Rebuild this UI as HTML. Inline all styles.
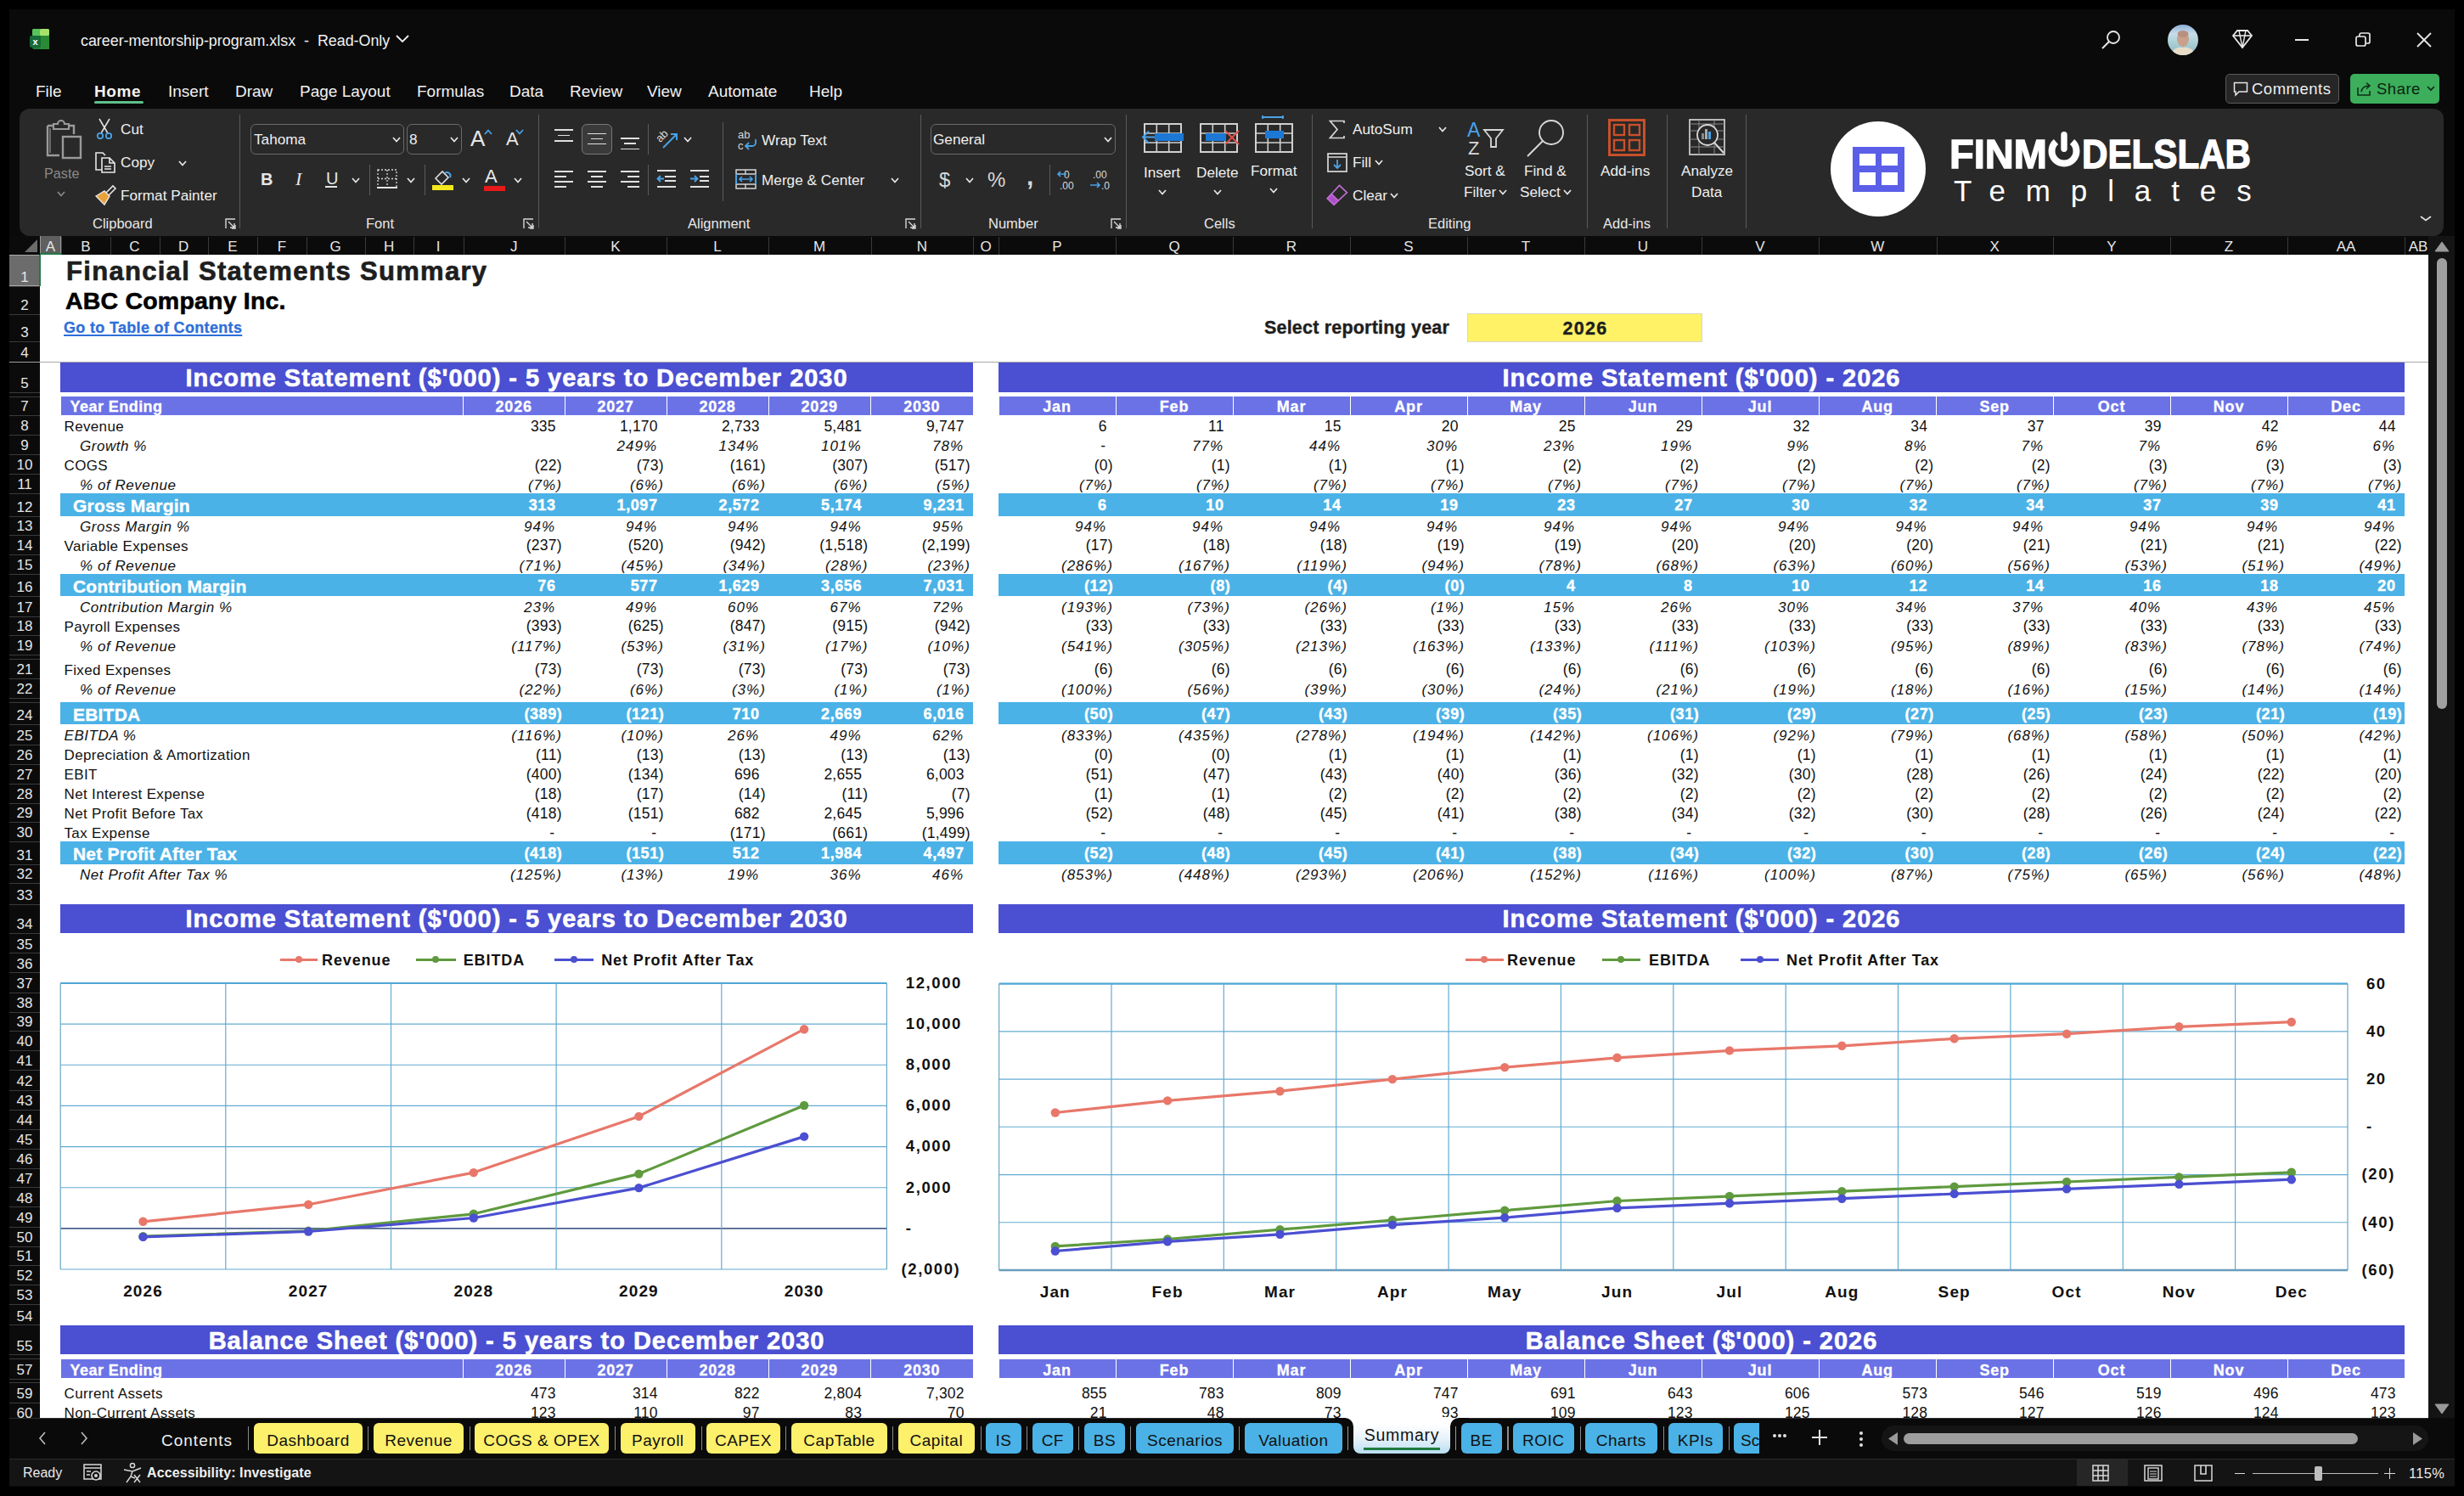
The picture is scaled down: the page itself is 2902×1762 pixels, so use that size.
<!DOCTYPE html><html><head><meta charset="utf-8"><title>career-mentorship-program.xlsx</title><style>html,body{margin:0;padding:0;}body{width:2902px;height:1762px;background:#000;position:relative;overflow:hidden;font-family:"Liberation Sans",sans-serif;} div{box-sizing:border-box;} svg{position:absolute;overflow:visible}</style></head><body>
<div style="position:absolute;left:11.0px;top:11.0px;width:2880.0px;height:1740.0px;background:#0a0a0a;"></div>
<svg style="left:35px;top:34px" width="24" height="26" viewBox="0 0 24 26">
<rect x="3" y="0" width="20" height="24" rx="2" fill="#1f7a3a"/>
<rect x="3" y="0" width="10" height="8" rx="1.5" fill="#56c35c"/>
<rect x="12" y="0" width="11" height="8" rx="1.5" fill="#a7e36a"/>
<rect x="12" y="8" width="11" height="16" fill="#2a8a34"/>
<rect x="0" y="8" width="13" height="14" rx="2" fill="#176a3a"/>
<text x="6.5" y="19" font-family="Liberation Sans" font-weight="bold" font-size="11" fill="#fff" text-anchor="middle">x</text>
</svg>
<div style="position:absolute;top:39.8px;font-size:17.88px;line-height:17.88px;color:#f2f2f2;font-weight:normal;font-style:normal;white-space:nowrap;font-family:'Liberation Sans',sans-serif;left:95.0px;white-space:pre;">career-mentorship-program.xlsx  -  Read-Only</div>
<svg style="left:466px;top:41px" width="16" height="10"><polyline points="1,1 8,8 15,1" fill="none" stroke="#f0f0f0" stroke-width="1.8"/></svg>
<svg style="left:2474px;top:35px" width="24" height="24"><circle cx="15" cy="9" r="7" fill="none" stroke="#e8e8e8" stroke-width="1.8"/><line x1="10" y1="14" x2="2" y2="22" stroke="#e8e8e8" stroke-width="1.9"/></svg>
<svg style="left:2553px;top:29px" width="36" height="36"><defs><clipPath id="av"><circle cx="18" cy="18" r="18"/></clipPath><linearGradient id="avg" x1="0" y1="0" x2="0" y2="1"><stop offset="0" stop-color="#8fb0d8"/><stop offset="0.3" stop-color="#c8dcea"/><stop offset="0.6" stop-color="#a9cfd6"/><stop offset="1" stop-color="#8fb8c0"/></linearGradient></defs><g clip-path="url(#av)"><rect width="36" height="36" fill="url(#avg)"/><ellipse cx="18" cy="17" rx="7" ry="9" fill="#c9a08a"/><ellipse cx="18" cy="11" rx="6.5" ry="4" fill="#b89080"/><path d="M4,36 C6,28 12,26 18,27 C24,26 30,28 32,36 Z" fill="#e8dcc8"/></g></svg>
<svg style="left:2628px;top:34px" width="26" height="24"><polygon points="2,8 7,2 19,2 24,8 13,22" fill="none" stroke="#e8e8e8" stroke-width="1.8"/><polyline points="2,8 24,8" stroke="#e8e8e8" stroke-width="1.6"/><polyline points="9,2 13,22 17,2" fill="none" stroke="#e8e8e8" stroke-width="1.4"/></svg>
<div style="position:absolute;left:2703.0px;top:46.0px;width:16.0px;height:1.8px;background:#e8e8e8;"></div>
<svg style="left:2774px;top:38px" width="18" height="18"><rect x="1" y="5" width="11" height="11" rx="2" fill="none" stroke="#e8e8e8" stroke-width="1.7"/><path d="M5,5 V3 a2,2 0 0 1 2,-2 h8 a2,2 0 0 1 2,2 v8 a2,2 0 0 1 -2,2 h-3" fill="none" stroke="#e8e8e8" stroke-width="1.7"/></svg>
<svg style="left:2846px;top:38px" width="18" height="18"><line x1="1" y1="1" x2="17" y2="17" stroke="#e8e8e8" stroke-width="1.8"/><line x1="17" y1="1" x2="1" y2="17" stroke="#e8e8e8" stroke-width="1.8"/></svg>
<div style="position:absolute;top:97.8px;font-size:19px;line-height:19px;color:#f2f2f2;font-weight:normal;font-style:normal;white-space:nowrap;font-family:'Liberation Sans',sans-serif;left:42.0px;">File</div>
<div style="position:absolute;top:97.8px;font-size:19px;line-height:19px;color:#f2f2f2;font-weight:bold;font-style:normal;white-space:nowrap;font-family:'Liberation Sans',sans-serif;letter-spacing:0.6px;left:111.0px;">Home</div>
<div style="position:absolute;top:97.8px;font-size:19px;line-height:19px;color:#f2f2f2;font-weight:normal;font-style:normal;white-space:nowrap;font-family:'Liberation Sans',sans-serif;left:198.0px;">Insert</div>
<div style="position:absolute;top:97.8px;font-size:19px;line-height:19px;color:#f2f2f2;font-weight:normal;font-style:normal;white-space:nowrap;font-family:'Liberation Sans',sans-serif;left:277.0px;">Draw</div>
<div style="position:absolute;top:97.8px;font-size:19px;line-height:19px;color:#f2f2f2;font-weight:normal;font-style:normal;white-space:nowrap;font-family:'Liberation Sans',sans-serif;left:353.0px;">Page Layout</div>
<div style="position:absolute;top:97.8px;font-size:19px;line-height:19px;color:#f2f2f2;font-weight:normal;font-style:normal;white-space:nowrap;font-family:'Liberation Sans',sans-serif;left:491.0px;">Formulas</div>
<div style="position:absolute;top:97.8px;font-size:19px;line-height:19px;color:#f2f2f2;font-weight:normal;font-style:normal;white-space:nowrap;font-family:'Liberation Sans',sans-serif;left:600.0px;">Data</div>
<div style="position:absolute;top:97.8px;font-size:19px;line-height:19px;color:#f2f2f2;font-weight:normal;font-style:normal;white-space:nowrap;font-family:'Liberation Sans',sans-serif;left:671.0px;">Review</div>
<div style="position:absolute;top:97.8px;font-size:19px;line-height:19px;color:#f2f2f2;font-weight:normal;font-style:normal;white-space:nowrap;font-family:'Liberation Sans',sans-serif;left:762.0px;">View</div>
<div style="position:absolute;top:97.8px;font-size:19px;line-height:19px;color:#f2f2f2;font-weight:normal;font-style:normal;white-space:nowrap;font-family:'Liberation Sans',sans-serif;left:834.0px;">Automate</div>
<div style="position:absolute;top:97.8px;font-size:19px;line-height:19px;color:#f2f2f2;font-weight:normal;font-style:normal;white-space:nowrap;font-family:'Liberation Sans',sans-serif;left:953.0px;">Help</div>
<div style="position:absolute;left:111.0px;top:119.3px;width:58.0px;height:2.8px;background:#5fc08a;border-radius:1.5px;"></div>
<div style="position:absolute;left:2621px;top:87px;width:134px;height:35px;border:1px solid #5a5a5a;border-radius:5px;background:#262626"></div>
<svg style="left:2630px;top:96px" width="18" height="18"><path d="M1.5,1.5 H16.5 V12 H7 L3,16 V12 H1.5 Z" fill="none" stroke="#e8e8e8" stroke-width="1.5"/></svg>
<div style="position:absolute;top:96.3px;font-size:18.5px;line-height:18.5px;color:#f0f0f0;font-weight:normal;font-style:normal;white-space:nowrap;font-family:'Liberation Sans',sans-serif;letter-spacing:0.5px;left:2652.0px;">Comments</div>
<div style="position:absolute;left:2768px;top:87px;width:105px;height:35px;border-radius:5px;background:#3cae5c"></div>
<svg style="left:2775px;top:96px" width="20" height="18"><path d="M2,7 V16 H16 V11" fill="none" stroke="#0f2f16" stroke-width="1.6"/><path d="M6,12 C7,7 10,5 15,5 M12,1.5 L16,5 L12,8.5" fill="none" stroke="#0f2f16" stroke-width="1.6"/></svg>
<div style="position:absolute;top:96.3px;font-size:18.5px;line-height:18.5px;color:#0c2410;font-weight:normal;font-style:normal;white-space:nowrap;font-family:'Liberation Sans',sans-serif;letter-spacing:0.5px;left:2799.0px;">Share</div>
<svg style="left:2858px;top:101px" width="10" height="7"><polyline points="1,1 5,5 9,1" fill="none" stroke="#0c2410" stroke-width="1.6"/></svg>
<div style="position:absolute;left:23px;top:128px;width:2855px;height:150px;background:#292929;border-radius:12px"></div>
<svg style="left:50px;top:138px" width="50" height="52"><path d="M6,10 H13 M31,10 H37 V20" fill="none" stroke="#9a9a9a" stroke-width="2.4"/><path d="M6,10 V45 H20" fill="none" stroke="#9a9a9a" stroke-width="2.4"/><path d="M9,13 V42" stroke="#6a6a6a" stroke-width="2"/><path d="M13,14 V8 H18 a4,4 0 0 1 8,0 H31 V14 Z" fill="none" stroke="#9a9a9a" stroke-width="2.2"/><rect x="24" y="23" width="21" height="25" fill="none" stroke="#9a9a9a" stroke-width="2.4"/></svg>
<div style="position:absolute;top:196.2px;font-size:16.2px;line-height:16.2px;color:#8a8a8a;font-weight:normal;font-style:normal;white-space:nowrap;font-family:'Liberation Sans',sans-serif;left:52.0px;">Paste</div>
<svg style="left:67.0px;top:225.0px" width="10" height="7"><polyline points="1,1 5.0,5.5 9,1" fill="none" stroke="#8a8a8a" stroke-width="1.7"/></svg>
<svg style="left:112px;top:139px" width="22" height="26"><path d="M5,1 L15,18 M17,1 L7,18" stroke="#e6e6e6" stroke-width="1.5" fill="none"/><circle cx="6" cy="21" r="3.2" fill="none" stroke="#4aa3e8" stroke-width="1.8"/><circle cx="16" cy="21" r="3.2" fill="none" stroke="#4aa3e8" stroke-width="1.8"/></svg>
<div style="position:absolute;top:144.4px;font-size:17.2px;line-height:17.2px;color:#f0f0f0;font-weight:normal;font-style:normal;white-space:nowrap;font-family:'Liberation Sans',sans-serif;left:142.0px;">Cut</div>
<svg style="left:111px;top:178px" width="26" height="26"><path d="M9,22 H2 V2 H10 L13,5" fill="none" stroke="#e6e6e6" stroke-width="1.6"/><path d="M9,8 H18 L24,14 V25 H9 Z M18,8 V14 H24" fill="none" stroke="#e6e6e6" stroke-width="1.6"/><path d="M12,18 H20 M12,21 H20" stroke="#e6e6e6" stroke-width="1.3"/></svg>
<div style="position:absolute;top:183.4px;font-size:17.2px;line-height:17.2px;color:#f0f0f0;font-weight:normal;font-style:normal;white-space:nowrap;font-family:'Liberation Sans',sans-serif;left:142.0px;">Copy</div>
<svg style="left:210.0px;top:189.0px" width="10" height="7"><polyline points="1,1 5.0,5.5 9,1" fill="none" stroke="#e8e8e8" stroke-width="1.7"/></svg>
<svg style="left:111px;top:217px" width="26" height="26"><path d="M14,10 L22,2 L25,5 L17,13" fill="none" stroke="#e6e6e6" stroke-width="1.6"/><path d="M2,14 L12,8 L18,14 L12,24 Z" fill="#e9a23b" stroke="#e6e6e6" stroke-width="1.4"/></svg>
<div style="position:absolute;top:222.4px;font-size:17.2px;line-height:17.2px;color:#f0f0f0;font-weight:normal;font-style:normal;white-space:nowrap;font-family:'Liberation Sans',sans-serif;left:142.0px;">Format Painter</div>
<div style="position:absolute;top:255.0px;font-size:16.5px;line-height:16.5px;color:#e8e8e8;font-weight:normal;font-style:normal;white-space:nowrap;font-family:'Liberation Sans',sans-serif;left:109.0px;">Clipboard</div>
<svg style="left:265px;top:257px" width="13" height="13"><path d="M1,12 V1 H12" fill="none" stroke="#d8d8d8" stroke-width="1.4"/><path d="M4,4 L11,11 M6,11 H11 V6" fill="none" stroke="#d8d8d8" stroke-width="1.4"/><path d="M12,8 V12 H8" fill="none" stroke="#d8d8d8" stroke-width="1.4"/></svg>
<div style="position:absolute;left:282.0px;top:135.0px;width:1.2px;height:134.0px;background:#5a5a5a;"></div>
<div style="position:absolute;left:295px;top:146px;width:181px;height:36px;border:1.3px solid #6a6a6a;border-radius:6px;"></div>
<div style="position:absolute;top:156.4px;font-size:17.2px;line-height:17.2px;color:#f0f0f0;font-weight:normal;font-style:normal;white-space:nowrap;font-family:'Liberation Sans',sans-serif;left:299.0px;">Tahoma</div>
<svg style="left:462.0px;top:161.0px" width="10" height="7"><polyline points="1,1 5.0,5.5 9,1" fill="none" stroke="#e8e8e8" stroke-width="1.7"/></svg>
<div style="position:absolute;left:479px;top:146px;width:65px;height:36px;border:1.3px solid #6a6a6a;border-radius:6px;"></div>
<div style="position:absolute;top:156.4px;font-size:17.2px;line-height:17.2px;color:#f0f0f0;font-weight:normal;font-style:normal;white-space:nowrap;font-family:'Liberation Sans',sans-serif;left:482.0px;">8</div>
<svg style="left:530.0px;top:161.0px" width="10" height="7"><polyline points="1,1 5.0,5.5 9,1" fill="none" stroke="#e8e8e8" stroke-width="1.7"/></svg>
<div style="position:absolute;top:149.9px;font-size:26px;line-height:26px;color:#e6e6e6;font-weight:normal;font-style:normal;white-space:nowrap;font-family:'Liberation Sans',sans-serif;left:554.0px;">A</div>
<svg style="left:570px;top:152px" width="10" height="7"><polyline points="1,6 5,1.5 9,6" fill="none" stroke="#4aa3e8" stroke-width="1.8"/></svg>
<div style="position:absolute;top:153.3px;font-size:22px;line-height:22px;color:#e6e6e6;font-weight:normal;font-style:normal;white-space:nowrap;font-family:'Liberation Sans',sans-serif;left:596.0px;">A</div>
<svg style="left:607px;top:152px" width="10" height="7"><polyline points="1,1 5,5.5 9,1" fill="none" stroke="#4aa3e8" stroke-width="1.8"/></svg>
<div style="position:absolute;left:634.0px;top:135.0px;width:1.2px;height:134.0px;background:#5a5a5a;"></div>
<div style="position:absolute;top:201.0px;font-size:20px;line-height:20px;color:#e6e6e6;font-weight:bold;font-style:normal;white-space:nowrap;font-family:'Liberation Sans',sans-serif;left:307.0px;">B</div>
<div style="position:absolute;top:200.3px;font-size:22px;line-height:22px;color:#e6e6e6;font-weight:normal;font-style:italic;white-space:nowrap;font-family:'Liberation Serif',serif;left:348.0px;">I</div>
<div style="position:absolute;top:200.0px;font-size:20px;line-height:20px;color:#e6e6e6;font-weight:normal;font-style:normal;white-space:nowrap;font-family:'Liberation Sans',sans-serif;left:384.0px;">U</div>
<div style="position:absolute;left:383.0px;top:219.0px;width:14.0px;height:1.6px;background:#e6e6e6;"></div>
<svg style="left:414.0px;top:209.0px" width="10" height="7"><polyline points="1,1 5.0,5.5 9,1" fill="none" stroke="#e8e8e8" stroke-width="1.7"/></svg>
<div style="position:absolute;left:435.0px;top:194.0px;width:1.2px;height:36.0px;background:#5a5a5a;"></div>
<svg style="left:444px;top:199px" width="24" height="24"><rect x="1" y="1" width="22" height="21" fill="none" stroke="#d8d8d8" stroke-width="1.3" stroke-dasharray="2,2"/><path d="M12,1 V22 M1,11.5 H23" stroke="#d8d8d8" stroke-width="1.3" stroke-dasharray="2,2"/><rect x="0" y="21" width="24" height="2" fill="#e6e6e6"/></svg>
<svg style="left:479.0px;top:209.0px" width="10" height="7"><polyline points="1,1 5.0,5.5 9,1" fill="none" stroke="#e8e8e8" stroke-width="1.7"/></svg>
<div style="position:absolute;left:500.0px;top:194.0px;width:1.2px;height:36.0px;background:#5a5a5a;"></div>
<svg style="left:509px;top:199px" width="26" height="26"><path d="M4,11 L12,3 L19,10 L11,18 Z" fill="none" stroke="#e0e0e0" stroke-width="1.6"/><path d="M15,5 a4,4 0 0 1 6,5" fill="none" stroke="#4aa3e8" stroke-width="2"/><rect x="0" y="19" width="25" height="6" fill="#f5e81c"/></svg>
<svg style="left:544.0px;top:209.0px" width="10" height="7"><polyline points="1,1 5.0,5.5 9,1" fill="none" stroke="#e8e8e8" stroke-width="1.7"/></svg>
<div style="position:absolute;top:197.3px;font-size:22px;line-height:22px;color:#e6e6e6;font-weight:normal;font-style:normal;white-space:nowrap;font-family:'Liberation Sans',sans-serif;left:571.0px;">A</div>
<div style="position:absolute;left:570.0px;top:219.0px;width:25.0px;height:6.0px;background:#e81919;"></div>
<svg style="left:605.0px;top:209.0px" width="10" height="7"><polyline points="1,1 5.0,5.5 9,1" fill="none" stroke="#e8e8e8" stroke-width="1.7"/></svg>
<div style="position:absolute;top:255.0px;font-size:16.5px;line-height:16.5px;color:#e8e8e8;font-weight:normal;font-style:normal;white-space:nowrap;font-family:'Liberation Sans',sans-serif;left:431.0px;">Font</div>
<svg style="left:616px;top:257px" width="13" height="13"><path d="M1,12 V1 H12" fill="none" stroke="#d8d8d8" stroke-width="1.4"/><path d="M4,4 L11,11 M6,11 H11 V6" fill="none" stroke="#d8d8d8" stroke-width="1.4"/><path d="M12,8 V12 H8" fill="none" stroke="#d8d8d8" stroke-width="1.4"/></svg>
<div style="position:absolute;left:653.0px;top:152.0px;width:22.0px;height:1.8px;background:#e0e0e0;"></div>
<div style="position:absolute;left:657.0px;top:158.5px;width:14.0px;height:1.8px;background:#e0e0e0;"></div>
<div style="position:absolute;left:653.0px;top:165.0px;width:22.0px;height:1.8px;background:#e0e0e0;"></div>
<div style="position:absolute;left:685px;top:146px;width:36px;height:36px;border:1.3px solid #777;border-radius:6px;background:#3a3a3a"></div>
<div style="position:absolute;left:692.0px;top:156.5px;width:22.0px;height:1.8px;background:#e0e0e0;"></div>
<div style="position:absolute;left:696.0px;top:162.5px;width:14.0px;height:1.8px;background:#e0e0e0;"></div>
<div style="position:absolute;left:692.0px;top:168.5px;width:22.0px;height:1.8px;background:#e0e0e0;"></div>
<div style="position:absolute;left:731.0px;top:162.0px;width:22.0px;height:1.8px;background:#e0e0e0;"></div>
<div style="position:absolute;left:735.0px;top:168.0px;width:14.0px;height:1.8px;background:#e0e0e0;"></div>
<div style="position:absolute;left:731.0px;top:174.5px;width:22.0px;height:1.8px;background:#e0e0e0;"></div>
<div style="position:absolute;left:763.0px;top:146.0px;width:1.2px;height:36.0px;background:#5a5a5a;"></div>
<svg style="left:772px;top:150px" width="28" height="26"><text x="2" y="14" font-family="Liberation Sans" font-size="13" fill="#d8d8d8" transform="rotate(-45 9 12)">ab</text><path d="M9,24 L25,8 M18,8 H25 V15" fill="none" stroke="#4aa3e8" stroke-width="1.9"/></svg>
<svg style="left:805.0px;top:161.0px" width="10" height="7"><polyline points="1,1 5.0,5.5 9,1" fill="none" stroke="#e8e8e8" stroke-width="1.7"/></svg>
<div style="position:absolute;left:653.0px;top:201.0px;width:22.0px;height:1.8px;background:#e0e0e0;"></div>
<div style="position:absolute;left:653.0px;top:207.0px;width:14.0px;height:1.8px;background:#e0e0e0;"></div>
<div style="position:absolute;left:653.0px;top:213.0px;width:22.0px;height:1.8px;background:#e0e0e0;"></div>
<div style="position:absolute;left:653.0px;top:219.0px;width:14.0px;height:1.8px;background:#e0e0e0;"></div>
<div style="position:absolute;left:692.0px;top:201.0px;width:22.0px;height:1.8px;background:#e0e0e0;"></div>
<div style="position:absolute;left:696.0px;top:207.0px;width:14.0px;height:1.8px;background:#e0e0e0;"></div>
<div style="position:absolute;left:692.0px;top:213.0px;width:22.0px;height:1.8px;background:#e0e0e0;"></div>
<div style="position:absolute;left:696.0px;top:219.0px;width:14.0px;height:1.8px;background:#e0e0e0;"></div>
<div style="position:absolute;left:731.0px;top:201.0px;width:22.0px;height:1.8px;background:#e0e0e0;"></div>
<div style="position:absolute;left:739.0px;top:207.0px;width:14.0px;height:1.8px;background:#e0e0e0;"></div>
<div style="position:absolute;left:731.0px;top:213.0px;width:22.0px;height:1.8px;background:#e0e0e0;"></div>
<div style="position:absolute;left:739.0px;top:219.0px;width:14.0px;height:1.8px;background:#e0e0e0;"></div>
<div style="position:absolute;left:763.0px;top:194.0px;width:1.2px;height:36.0px;background:#5a5a5a;"></div>
<svg style="left:773px;top:199px" width="24" height="22"><path d="M1,2 H23 M10,9 H23 M10,14 H23 M1,21 H23" stroke="#e0e0e0" stroke-width="1.8"/><path d="M9,11.5 H2 M5,8 L1.5,11.5 L5,15" fill="none" stroke="#4aa3e8" stroke-width="1.8"/></svg>
<svg style="left:812px;top:199px" width="24" height="22"><path d="M1,2 H23 M12,9 H23 M12,14 H23 M1,21 H23" stroke="#e0e0e0" stroke-width="1.8"/><path d="M1,11.5 H9 M6,8 L9.5,11.5 L6,15" fill="none" stroke="#4aa3e8" stroke-width="1.8"/></svg>
<div style="position:absolute;left:851.0px;top:144.0px;width:1.2px;height:93.0px;background:#5a5a5a;"></div>
<svg style="left:869px;top:152px" width="24" height="26"><text x="0" y="11" font-family="Liberation Sans" font-size="13" fill="#d8d8d8">ab</text><text x="0" y="24" font-family="Liberation Sans" font-size="13" fill="#d8d8d8">c</text><path d="M21,12 V16 a4,4 0 0 1 -4,4 H9 M13,16 L9,20 L13,24" fill="none" stroke="#4aa3e8" stroke-width="1.8"/></svg>
<div style="position:absolute;top:157.4px;font-size:17.2px;line-height:17.2px;color:#f0f0f0;font-weight:normal;font-style:normal;white-space:nowrap;font-family:'Liberation Sans',sans-serif;left:897.0px;">Wrap Text</div>
<svg style="left:866px;top:199px" width="25" height="24"><rect x="1" y="1" width="23" height="22" fill="none" stroke="#d8d8d8" stroke-width="1.5"/><path d="M1,6 H24 M1,18 H24 M12,1 V6 M12,18 V23" stroke="#d8d8d8" stroke-width="1.4"/><path d="M1,6 V18 M24,6 V18" stroke="#4aa3e8" stroke-width="2"/><path d="M5,12 H20 M8,9 L5,12 L8,15 M17,9 L20,12 L17,15" fill="none" stroke="#4aa3e8" stroke-width="1.6"/></svg>
<div style="position:absolute;top:204.4px;font-size:17.2px;line-height:17.2px;color:#f0f0f0;font-weight:normal;font-style:normal;white-space:nowrap;font-family:'Liberation Sans',sans-serif;left:897.0px;">Merge &amp; Center</div>
<svg style="left:1049.0px;top:209.0px" width="10" height="7"><polyline points="1,1 5.0,5.5 9,1" fill="none" stroke="#e8e8e8" stroke-width="1.7"/></svg>
<div style="position:absolute;top:255.0px;font-size:16.5px;line-height:16.5px;color:#e8e8e8;font-weight:normal;font-style:normal;white-space:nowrap;font-family:'Liberation Sans',sans-serif;left:810.0px;">Alignment</div>
<svg style="left:1066px;top:257px" width="13" height="13"><path d="M1,12 V1 H12" fill="none" stroke="#d8d8d8" stroke-width="1.4"/><path d="M4,4 L11,11 M6,11 H11 V6" fill="none" stroke="#d8d8d8" stroke-width="1.4"/><path d="M12,8 V12 H8" fill="none" stroke="#d8d8d8" stroke-width="1.4"/></svg>
<div style="position:absolute;left:1083.5px;top:135.0px;width:1.2px;height:134.0px;background:#5a5a5a;"></div>
<div style="position:absolute;left:1096px;top:146px;width:218px;height:36px;border:1.3px solid #6a6a6a;border-radius:6px;"></div>
<div style="position:absolute;top:156.4px;font-size:17.2px;line-height:17.2px;color:#f0f0f0;font-weight:normal;font-style:normal;white-space:nowrap;font-family:'Liberation Sans',sans-serif;left:1099.0px;">General</div>
<svg style="left:1300.0px;top:161.0px" width="10" height="7"><polyline points="1,1 5.0,5.5 9,1" fill="none" stroke="#e8e8e8" stroke-width="1.7"/></svg>
<div style="position:absolute;top:199.6px;font-size:24px;line-height:24px;color:#d8d8d8;font-weight:normal;font-style:normal;white-space:nowrap;font-family:'Liberation Sans',sans-serif;left:1106.0px;">$</div>
<svg style="left:1137.0px;top:209.0px" width="10" height="7"><polyline points="1,1 5.0,5.5 9,1" fill="none" stroke="#e8e8e8" stroke-width="1.7"/></svg>
<div style="position:absolute;top:199.6px;font-size:24px;line-height:24px;color:#d8d8d8;font-weight:normal;font-style:normal;white-space:nowrap;font-family:'Liberation Sans',sans-serif;left:1163.0px;">%</div>
<div style="position:absolute;top:192.5px;font-size:30px;line-height:30px;color:#d8d8d8;font-weight:bold;font-style:normal;white-space:nowrap;font-family:'Liberation Sans',sans-serif;left:1209.0px;">,</div>
<div style="position:absolute;left:1235.5px;top:194.0px;width:1.2px;height:36.0px;background:#5a5a5a;"></div>
<svg style="left:1244px;top:199px" width="26" height="26"><text x="9" y="11" font-family="Liberation Sans" font-size="12" fill="#d8d8d8">0</text><text x="4" y="24" font-family="Liberation Sans" font-size="12" fill="#d8d8d8">.00</text><path d="M12,6 H2 M5,3 L2,6 L5,9" fill="none" stroke="#4aa3e8" stroke-width="1.6"/></svg>
<svg style="left:1283px;top:199px" width="26" height="26"><text x="4" y="11" font-family="Liberation Sans" font-size="12" fill="#d8d8d8">.00</text><text x="14" y="24" font-family="Liberation Sans" font-size="12" fill="#d8d8d8">.0</text><path d="M1,19 H12 M9,16 L12,19 L9,22" fill="none" stroke="#4aa3e8" stroke-width="1.6"/></svg>
<div style="position:absolute;top:255.0px;font-size:16.5px;line-height:16.5px;color:#e8e8e8;font-weight:normal;font-style:normal;white-space:nowrap;font-family:'Liberation Sans',sans-serif;left:1164.0px;">Number</div>
<svg style="left:1308px;top:257px" width="13" height="13"><path d="M1,12 V1 H12" fill="none" stroke="#d8d8d8" stroke-width="1.4"/><path d="M4,4 L11,11 M6,11 H11 V6" fill="none" stroke="#d8d8d8" stroke-width="1.4"/><path d="M12,8 V12 H8" fill="none" stroke="#d8d8d8" stroke-width="1.4"/></svg>
<div style="position:absolute;left:1325.5px;top:135.0px;width:1.2px;height:134.0px;background:#5a5a5a;"></div>
<svg style="left:1347px;top:145px" width="47" height="37"><rect x="1" y="1" width="43" height="33" fill="none" stroke="#d0d0d0" stroke-width="2"/><line x1="15.3" y1="1" x2="15.3" y2="34" stroke="#d0d0d0" stroke-width="1.6"/><line x1="1" y1="12.0" x2="44" y2="12.0" stroke="#d0d0d0" stroke-width="1.6"/><line x1="29.7" y1="1" x2="29.7" y2="34" stroke="#d0d0d0" stroke-width="1.6"/><line x1="1" y1="23.0" x2="44" y2="23.0" stroke="#d0d0d0" stroke-width="1.6"/></svg>
<svg style="left:1344px;top:150px" width="52" height="24"><rect x="16" y="7" width="34" height="9" fill="#1c78d4"/><path d="M16,11.5 H2 M9,4.5 L2,11.5 L9,18.5" fill="none" stroke="#4aa3e8" stroke-width="2"/></svg>
<div style="position:absolute;top:195.4px;font-size:17.2px;line-height:17.2px;color:#f0f0f0;font-weight:normal;font-style:normal;white-space:nowrap;font-family:'Liberation Sans',sans-serif;left:1347.0px;">Insert</div>
<svg style="left:1364.0px;top:223.0px" width="10" height="7"><polyline points="1,1 5.0,5.5 9,1" fill="none" stroke="#e8e8e8" stroke-width="1.7"/></svg>
<svg style="left:1413px;top:145px" width="47" height="37"><rect x="1" y="1" width="43" height="33" fill="none" stroke="#d0d0d0" stroke-width="2"/><line x1="15.3" y1="1" x2="15.3" y2="34" stroke="#d0d0d0" stroke-width="1.6"/><line x1="1" y1="12.0" x2="44" y2="12.0" stroke="#d0d0d0" stroke-width="1.6"/><line x1="29.7" y1="1" x2="29.7" y2="34" stroke="#d0d0d0" stroke-width="1.6"/><line x1="1" y1="23.0" x2="44" y2="23.0" stroke="#d0d0d0" stroke-width="1.6"/></svg>
<svg style="left:1413px;top:150px" width="50" height="24"><rect x="7" y="7" width="24" height="9" fill="#1c78d4"/><path d="M30,4 L46,20 M46,4 L30,20" stroke="#e0504a" stroke-width="2"/></svg>
<div style="position:absolute;top:195.4px;font-size:17.2px;line-height:17.2px;color:#f0f0f0;font-weight:normal;font-style:normal;white-space:nowrap;font-family:'Liberation Sans',sans-serif;left:1409.0px;">Delete</div>
<svg style="left:1429.0px;top:223.0px" width="10" height="7"><polyline points="1,1 5.0,5.5 9,1" fill="none" stroke="#e8e8e8" stroke-width="1.7"/></svg>
<svg style="left:1478px;top:145px" width="47" height="37"><rect x="1" y="1" width="43" height="33" fill="none" stroke="#d0d0d0" stroke-width="2"/><line x1="15.3" y1="1" x2="15.3" y2="34" stroke="#d0d0d0" stroke-width="1.6"/><line x1="1" y1="12.0" x2="44" y2="12.0" stroke="#d0d0d0" stroke-width="1.6"/><line x1="29.7" y1="1" x2="29.7" y2="34" stroke="#d0d0d0" stroke-width="1.6"/><line x1="1" y1="23.0" x2="44" y2="23.0" stroke="#d0d0d0" stroke-width="1.6"/></svg>
<svg style="left:1478px;top:136px" width="46" height="36"><path d="M9,2 H33 M9,0 V4 M33,0 V4" stroke="#4aa3e8" stroke-width="1.8"/><rect x="12" y="18" width="22" height="9" fill="#1c78d4"/></svg>
<div style="position:absolute;top:193.4px;font-size:17.2px;line-height:17.2px;color:#f0f0f0;font-weight:normal;font-style:normal;white-space:nowrap;font-family:'Liberation Sans',sans-serif;left:1473.0px;">Format</div>
<svg style="left:1495.0px;top:221.0px" width="10" height="7"><polyline points="1,1 5.0,5.5 9,1" fill="none" stroke="#e8e8e8" stroke-width="1.7"/></svg>
<div style="position:absolute;top:255.0px;font-size:16.5px;line-height:16.5px;color:#e8e8e8;font-weight:normal;font-style:normal;white-space:nowrap;font-family:'Liberation Sans',sans-serif;left:1418.0px;">Cells</div>
<div style="position:absolute;left:1544.5px;top:135.0px;width:1.2px;height:134.0px;background:#5a5a5a;"></div>
<svg style="left:1565px;top:141px" width="20" height="23"><path d="M18,4 V1.5 H1.5 L10,11.5 L1.5,21.5 H18 V19" fill="none" stroke="#d8d8d8" stroke-width="1.7"/></svg>
<div style="position:absolute;top:144.4px;font-size:17.2px;line-height:17.2px;color:#f0f0f0;font-weight:normal;font-style:normal;white-space:nowrap;font-family:'Liberation Sans',sans-serif;left:1593.0px;">AutoSum</div>
<svg style="left:1694.0px;top:149.0px" width="10" height="7"><polyline points="1,1 5.0,5.5 9,1" fill="none" stroke="#e8e8e8" stroke-width="1.7"/></svg>
<svg style="left:1563px;top:180px" width="24" height="23"><rect x="1" y="1" width="22" height="21" fill="none" stroke="#d0d0d0" stroke-width="1.8"/><path d="M1,5 H23" stroke="#d0d0d0" stroke-width="1.6"/><path d="M12,8 V18 M8,14 L12,18 L16,14" fill="none" stroke="#4aa3e8" stroke-width="1.8"/></svg>
<div style="position:absolute;top:183.4px;font-size:17.2px;line-height:17.2px;color:#f0f0f0;font-weight:normal;font-style:normal;white-space:nowrap;font-family:'Liberation Sans',sans-serif;left:1593.0px;">Fill</div>
<svg style="left:1619.0px;top:188.0px" width="10" height="7"><polyline points="1,1 5.0,5.5 9,1" fill="none" stroke="#e8e8e8" stroke-width="1.7"/></svg>
<svg style="left:1560px;top:215px" width="30" height="30"><polygon points="17.5,3.4 26.4,11.8 11.1,26.1 3.2,18.7" fill="none" stroke="#c070d8" stroke-width="1.6"/><polygon points="3.2,18.7 8.5,13.7 16.4,21.2 11.1,26.1" fill="#b050c8" stroke="#c070d8" stroke-width="1.2"/></svg>
<div style="position:absolute;top:222.4px;font-size:17.2px;line-height:17.2px;color:#f0f0f0;font-weight:normal;font-style:normal;white-space:nowrap;font-family:'Liberation Sans',sans-serif;left:1593.0px;">Clear</div>
<svg style="left:1637.0px;top:227.0px" width="10" height="7"><polyline points="1,1 5.0,5.5 9,1" fill="none" stroke="#e8e8e8" stroke-width="1.7"/></svg>
<svg style="left:1728px;top:141px" width="46" height="42"><text x="0" y="20" font-family="Liberation Sans" font-size="23" fill="#4aa3e8">A</text><text x="1" y="41" font-family="Liberation Sans" font-size="22" fill="#d8d8d8">Z</text><path d="M20,12 H42 L34,22 V32 H28 V22 Z" fill="none" stroke="#d8d8d8" stroke-width="1.8"/></svg>
<div style="position:absolute;top:193.4px;font-size:17.2px;line-height:17.2px;color:#f0f0f0;font-weight:normal;font-style:normal;white-space:nowrap;font-family:'Liberation Sans',sans-serif;left:1725.0px;">Sort &amp;</div>
<div style="position:absolute;top:218.4px;font-size:17.2px;line-height:17.2px;color:#f0f0f0;font-weight:normal;font-style:normal;white-space:nowrap;font-family:'Liberation Sans',sans-serif;left:1724.0px;">Filter</div>
<svg style="left:1765.0px;top:223.0px" width="10" height="7"><polyline points="1,1 5.0,5.5 9,1" fill="none" stroke="#e8e8e8" stroke-width="1.7"/></svg>
<svg style="left:1797px;top:140px" width="46" height="46"><circle cx="30" cy="16" r="14" fill="none" stroke="#d8d8d8" stroke-width="1.9"/><line x1="20" y1="26" x2="2" y2="44" stroke="#d8d8d8" stroke-width="1.9"/></svg>
<div style="position:absolute;top:193.4px;font-size:17.2px;line-height:17.2px;color:#f0f0f0;font-weight:normal;font-style:normal;white-space:nowrap;font-family:'Liberation Sans',sans-serif;left:1795.0px;">Find &amp;</div>
<div style="position:absolute;top:218.4px;font-size:17.2px;line-height:17.2px;color:#f0f0f0;font-weight:normal;font-style:normal;white-space:nowrap;font-family:'Liberation Sans',sans-serif;left:1790.0px;">Select</div>
<svg style="left:1841.0px;top:223.0px" width="10" height="7"><polyline points="1,1 5.0,5.5 9,1" fill="none" stroke="#e8e8e8" stroke-width="1.7"/></svg>
<div style="position:absolute;top:255.0px;font-size:16.5px;line-height:16.5px;color:#e8e8e8;font-weight:normal;font-style:normal;white-space:nowrap;font-family:'Liberation Sans',sans-serif;left:1682.0px;">Editing</div>
<div style="position:absolute;left:1868.5px;top:135.0px;width:1.2px;height:134.0px;background:#5a5a5a;"></div>
<svg style="left:1894px;top:140px" width="44" height="45"><rect x="1.5" y="1.5" width="41" height="41" fill="none" stroke="#c8502a" stroke-width="3"/><rect x="7" y="7" width="12" height="12" fill="none" stroke="#c8502a" stroke-width="2.4"/><rect x="25" y="7" width="12" height="12" fill="none" stroke="#c8502a" stroke-width="2.4"/><rect x="7" y="25" width="12" height="12" fill="none" stroke="#c8502a" stroke-width="2.4"/><rect x="25" y="25" width="12" height="12" fill="none" stroke="#c8502a" stroke-width="2.4"/></svg>
<div style="position:absolute;top:193.4px;font-size:17.2px;line-height:17.2px;color:#f0f0f0;font-weight:normal;font-style:normal;white-space:nowrap;font-family:'Liberation Sans',sans-serif;left:1885.0px;">Add-ins</div>
<div style="position:absolute;top:255.0px;font-size:16.5px;line-height:16.5px;color:#e8e8e8;font-weight:normal;font-style:normal;white-space:nowrap;font-family:'Liberation Sans',sans-serif;left:1888.0px;">Add-ins</div>
<div style="position:absolute;left:1963.0px;top:135.0px;width:1.2px;height:134.0px;background:#5a5a5a;"></div>
<svg style="left:1989px;top:140px" width="44" height="44"><rect x="1" y="1" width="41" height="41" fill="none" stroke="#c8c8c8" stroke-width="1.8"/><path d="M1,6 H42 M1,14 H42 M1,24 H42 M1,33 H42 M12,1 V42 M30,1 V42" stroke="#8a8a8a" stroke-width="1"/><circle cx="22" cy="19" r="12" fill="#292929" stroke="#d8d8d8" stroke-width="1.8"/><path d="M30,28 L41,40" stroke="#d8d8d8" stroke-width="2"/><rect x="15" y="17" width="3" height="7" fill="#888"/><rect x="19" y="12" width="3" height="12" fill="#aaa"/><rect x="23" y="15" width="3" height="9" fill="#4aa3e8"/></svg>
<div style="position:absolute;top:193.4px;font-size:17.2px;line-height:17.2px;color:#f0f0f0;font-weight:normal;font-style:normal;white-space:nowrap;font-family:'Liberation Sans',sans-serif;left:1980.0px;">Analyze</div>
<div style="position:absolute;top:218.4px;font-size:17.2px;line-height:17.2px;color:#f0f0f0;font-weight:normal;font-style:normal;white-space:nowrap;font-family:'Liberation Sans',sans-serif;left:1992.0px;">Data</div>
<div style="position:absolute;left:2056.0px;top:135.0px;width:1.2px;height:134.0px;background:#5a5a5a;"></div>
<div style="position:absolute;left:2156px;top:143px;width:112px;height:112px;border-radius:56px;background:#fff"></div>
<svg style="left:2182px;top:173px" width="61" height="53"><rect x="0" y="0" width="61" height="53" fill="#5b5fe8"/><rect x="8" y="8" width="19" height="14" fill="#fff"/><rect x="34" y="8" width="19" height="14" fill="#fff"/><rect x="8" y="30" width="19" height="15" fill="#fff"/><rect x="34" y="30" width="19" height="15" fill="#fff"/></svg>
<svg style="left:2280px;top:140px" width="400" height="70"><g fill="#fff" stroke="#fff" stroke-width="1.4" font-family="Liberation Sans" font-weight="bold" font-size="49"><text x="2296" y="197.5" transform="translate(-2280,-140)" textLength="115" lengthAdjust="spacingAndGlyphs">FINM</text><text x="2452" y="197.5" transform="translate(-2280,-140)" textLength="199" lengthAdjust="spacingAndGlyphs">DELSLAB</text></g><path d="M141.5,27 A14.5,14.5 0 1 0 160.5,27" transform="translate(0,0)" fill="none" stroke="#fff" stroke-width="8"/><rect x="147.3" y="15" width="7.4" height="24" rx="3.7" fill="#fff"/></svg>
<div style="position:absolute;top:207.2px;font-size:35px;line-height:35px;color:#ffffff;font-weight:normal;font-style:normal;white-space:nowrap;font-family:'Liberation Sans',sans-serif;letter-spacing:23.9px;left:2301.0px;">Templates</div>
<svg style="left:2850.0px;top:254.0px" width="14" height="7"><polyline points="1,1 7.0,5.5 13,1" fill="none" stroke="#e0e0e0" stroke-width="1.7"/></svg>
<div style="position:absolute;left:11.0px;top:278.0px;width:2849.0px;height:22.0px;background:#0b0b0b;"></div>
<svg style="left:29px;top:282px" width="16" height="15"><polygon points="15,0 15,15 0,15" fill="#6b6b6b"/></svg>
<div style="position:absolute;left:47.0px;top:278.0px;width:25.0px;height:22.0px;background:#5f5f5f;"></div>
<div style="position:absolute;left:47.0px;top:278.0px;width:1.0px;height:22.0px;background:#9a9a9a;"></div>
<div style="position:absolute;left:71.0px;top:278.0px;width:1.0px;height:22.0px;background:#9a9a9a;"></div>
<div style="position:absolute;left:47.0px;top:298.5px;width:25.0px;height:2.0px;background:#2a8a4a;"></div>
<div style="position:absolute;top:281.6px;font-size:17px;line-height:17px;color:#e6e6e6;font-weight:normal;font-style:normal;white-space:nowrap;font-family:'Liberation Sans',sans-serif;left:-540.5px;width:1200px;text-align:center;">A</div>
<div style="position:absolute;left:72.0px;top:279.0px;width:1.0px;height:20.5px;background:#3a3a3a;"></div>
<div style="position:absolute;top:281.6px;font-size:17px;line-height:17px;color:#e6e6e6;font-weight:normal;font-style:normal;white-space:nowrap;font-family:'Liberation Sans',sans-serif;left:-499.2px;width:1200px;text-align:center;">B</div>
<div style="position:absolute;left:129.5px;top:279.0px;width:1.0px;height:20.5px;background:#3a3a3a;"></div>
<div style="position:absolute;top:281.6px;font-size:17px;line-height:17px;color:#e6e6e6;font-weight:normal;font-style:normal;white-space:nowrap;font-family:'Liberation Sans',sans-serif;left:-441.5px;width:1200px;text-align:center;">C</div>
<div style="position:absolute;left:187.5px;top:279.0px;width:1.0px;height:20.5px;background:#3a3a3a;"></div>
<div style="position:absolute;top:281.6px;font-size:17px;line-height:17px;color:#e6e6e6;font-weight:normal;font-style:normal;white-space:nowrap;font-family:'Liberation Sans',sans-serif;left:-383.8px;width:1200px;text-align:center;">D</div>
<div style="position:absolute;left:245.0px;top:279.0px;width:1.0px;height:20.5px;background:#3a3a3a;"></div>
<div style="position:absolute;top:281.6px;font-size:17px;line-height:17px;color:#e6e6e6;font-weight:normal;font-style:normal;white-space:nowrap;font-family:'Liberation Sans',sans-serif;left:-326.0px;width:1200px;text-align:center;">E</div>
<div style="position:absolute;left:303.0px;top:279.0px;width:1.0px;height:20.5px;background:#3a3a3a;"></div>
<div style="position:absolute;top:281.6px;font-size:17px;line-height:17px;color:#e6e6e6;font-weight:normal;font-style:normal;white-space:nowrap;font-family:'Liberation Sans',sans-serif;left:-268.0px;width:1200px;text-align:center;">F</div>
<div style="position:absolute;left:361.0px;top:279.0px;width:1.0px;height:20.5px;background:#3a3a3a;"></div>
<div style="position:absolute;top:281.6px;font-size:17px;line-height:17px;color:#e6e6e6;font-weight:normal;font-style:normal;white-space:nowrap;font-family:'Liberation Sans',sans-serif;left:-204.8px;width:1200px;text-align:center;">G</div>
<div style="position:absolute;left:429.5px;top:279.0px;width:1.0px;height:20.5px;background:#3a3a3a;"></div>
<div style="position:absolute;top:281.6px;font-size:17px;line-height:17px;color:#e6e6e6;font-weight:normal;font-style:normal;white-space:nowrap;font-family:'Liberation Sans',sans-serif;left:-141.8px;width:1200px;text-align:center;">H</div>
<div style="position:absolute;left:487.0px;top:279.0px;width:1.0px;height:20.5px;background:#3a3a3a;"></div>
<div style="position:absolute;top:281.6px;font-size:17px;line-height:17px;color:#e6e6e6;font-weight:normal;font-style:normal;white-space:nowrap;font-family:'Liberation Sans',sans-serif;left:-83.8px;width:1200px;text-align:center;">I</div>
<div style="position:absolute;left:545.5px;top:279.0px;width:1.0px;height:20.5px;background:#3a3a3a;"></div>
<div style="position:absolute;top:281.6px;font-size:17px;line-height:17px;color:#e6e6e6;font-weight:normal;font-style:normal;white-space:nowrap;font-family:'Liberation Sans',sans-serif;left:5.2px;width:1200px;text-align:center;">J</div>
<div style="position:absolute;left:665.0px;top:279.0px;width:1.0px;height:20.5px;background:#3a3a3a;"></div>
<div style="position:absolute;top:281.6px;font-size:17px;line-height:17px;color:#e6e6e6;font-weight:normal;font-style:normal;white-space:nowrap;font-family:'Liberation Sans',sans-serif;left:125.0px;width:1200px;text-align:center;">K</div>
<div style="position:absolute;left:785.0px;top:279.0px;width:1.0px;height:20.5px;background:#3a3a3a;"></div>
<div style="position:absolute;top:281.6px;font-size:17px;line-height:17px;color:#e6e6e6;font-weight:normal;font-style:normal;white-space:nowrap;font-family:'Liberation Sans',sans-serif;left:245.0px;width:1200px;text-align:center;">L</div>
<div style="position:absolute;left:905.0px;top:279.0px;width:1.0px;height:20.5px;background:#3a3a3a;"></div>
<div style="position:absolute;top:281.6px;font-size:17px;line-height:17px;color:#e6e6e6;font-weight:normal;font-style:normal;white-space:nowrap;font-family:'Liberation Sans',sans-serif;left:365.2px;width:1200px;text-align:center;">M</div>
<div style="position:absolute;left:1025.5px;top:279.0px;width:1.0px;height:20.5px;background:#3a3a3a;"></div>
<div style="position:absolute;top:281.6px;font-size:17px;line-height:17px;color:#e6e6e6;font-weight:normal;font-style:normal;white-space:nowrap;font-family:'Liberation Sans',sans-serif;left:485.8px;width:1200px;text-align:center;">N</div>
<div style="position:absolute;left:1146.0px;top:279.0px;width:1.0px;height:20.5px;background:#3a3a3a;"></div>
<div style="position:absolute;top:281.6px;font-size:17px;line-height:17px;color:#e6e6e6;font-weight:normal;font-style:normal;white-space:nowrap;font-family:'Liberation Sans',sans-serif;left:561.0px;width:1200px;text-align:center;">O</div>
<div style="position:absolute;left:1176.0px;top:279.0px;width:1.0px;height:20.5px;background:#3a3a3a;"></div>
<div style="position:absolute;top:281.6px;font-size:17px;line-height:17px;color:#e6e6e6;font-weight:normal;font-style:normal;white-space:nowrap;font-family:'Liberation Sans',sans-serif;left:645.0px;width:1200px;text-align:center;">P</div>
<div style="position:absolute;left:1314.0px;top:279.0px;width:1.0px;height:20.5px;background:#3a3a3a;"></div>
<div style="position:absolute;top:281.6px;font-size:17px;line-height:17px;color:#e6e6e6;font-weight:normal;font-style:normal;white-space:nowrap;font-family:'Liberation Sans',sans-serif;left:783.0px;width:1200px;text-align:center;">Q</div>
<div style="position:absolute;left:1452.0px;top:279.0px;width:1.0px;height:20.5px;background:#3a3a3a;"></div>
<div style="position:absolute;top:281.6px;font-size:17px;line-height:17px;color:#e6e6e6;font-weight:normal;font-style:normal;white-space:nowrap;font-family:'Liberation Sans',sans-serif;left:921.0px;width:1200px;text-align:center;">R</div>
<div style="position:absolute;left:1590.0px;top:279.0px;width:1.0px;height:20.5px;background:#3a3a3a;"></div>
<div style="position:absolute;top:281.6px;font-size:17px;line-height:17px;color:#e6e6e6;font-weight:normal;font-style:normal;white-space:nowrap;font-family:'Liberation Sans',sans-serif;left:1059.0px;width:1200px;text-align:center;">S</div>
<div style="position:absolute;left:1728.0px;top:279.0px;width:1.0px;height:20.5px;background:#3a3a3a;"></div>
<div style="position:absolute;top:281.6px;font-size:17px;line-height:17px;color:#e6e6e6;font-weight:normal;font-style:normal;white-space:nowrap;font-family:'Liberation Sans',sans-serif;left:1197.0px;width:1200px;text-align:center;">T</div>
<div style="position:absolute;left:1866.0px;top:279.0px;width:1.0px;height:20.5px;background:#3a3a3a;"></div>
<div style="position:absolute;top:281.6px;font-size:17px;line-height:17px;color:#e6e6e6;font-weight:normal;font-style:normal;white-space:nowrap;font-family:'Liberation Sans',sans-serif;left:1335.0px;width:1200px;text-align:center;">U</div>
<div style="position:absolute;left:2004.0px;top:279.0px;width:1.0px;height:20.5px;background:#3a3a3a;"></div>
<div style="position:absolute;top:281.6px;font-size:17px;line-height:17px;color:#e6e6e6;font-weight:normal;font-style:normal;white-space:nowrap;font-family:'Liberation Sans',sans-serif;left:1473.0px;width:1200px;text-align:center;">V</div>
<div style="position:absolute;left:2142.0px;top:279.0px;width:1.0px;height:20.5px;background:#3a3a3a;"></div>
<div style="position:absolute;top:281.6px;font-size:17px;line-height:17px;color:#e6e6e6;font-weight:normal;font-style:normal;white-space:nowrap;font-family:'Liberation Sans',sans-serif;left:1611.2px;width:1200px;text-align:center;">W</div>
<div style="position:absolute;left:2280.5px;top:279.0px;width:1.0px;height:20.5px;background:#3a3a3a;"></div>
<div style="position:absolute;top:281.6px;font-size:17px;line-height:17px;color:#e6e6e6;font-weight:normal;font-style:normal;white-space:nowrap;font-family:'Liberation Sans',sans-serif;left:1749.2px;width:1200px;text-align:center;">X</div>
<div style="position:absolute;left:2418.0px;top:279.0px;width:1.0px;height:20.5px;background:#3a3a3a;"></div>
<div style="position:absolute;top:281.6px;font-size:17px;line-height:17px;color:#e6e6e6;font-weight:normal;font-style:normal;white-space:nowrap;font-family:'Liberation Sans',sans-serif;left:1887.0px;width:1200px;text-align:center;">Y</div>
<div style="position:absolute;left:2556.0px;top:279.0px;width:1.0px;height:20.5px;background:#3a3a3a;"></div>
<div style="position:absolute;top:281.6px;font-size:17px;line-height:17px;color:#e6e6e6;font-weight:normal;font-style:normal;white-space:nowrap;font-family:'Liberation Sans',sans-serif;left:2025.0px;width:1200px;text-align:center;">Z</div>
<div style="position:absolute;left:2694.0px;top:279.0px;width:1.0px;height:20.5px;background:#3a3a3a;"></div>
<div style="position:absolute;top:281.6px;font-size:17px;line-height:17px;color:#e6e6e6;font-weight:normal;font-style:normal;white-space:nowrap;font-family:'Liberation Sans',sans-serif;left:2163.0px;width:1200px;text-align:center;">AA</div>
<div style="position:absolute;left:2832.0px;top:279.0px;width:1.0px;height:20.5px;background:#3a3a3a;"></div>
<div style="position:absolute;top:281.6px;font-size:17px;line-height:17px;color:#e6e6e6;font-weight:normal;font-style:normal;white-space:nowrap;font-family:'Liberation Sans',sans-serif;left:2248.0px;width:1200px;text-align:center;">AB</div>
<div style="position:absolute;left:2860.0px;top:278.0px;width:31.0px;height:22.0px;background:#0a0a0a;"></div>
<div style="position:absolute;left:11.0px;top:300.0px;width:36.0px;height:1370.0px;background:#0b0b0b;"></div>
<div style="position:absolute;left:11.0px;top:300.0px;width:36.0px;height:37.0px;background:#6c6c6c;"></div>
<div style="position:absolute;left:11.0px;top:300.0px;width:36.0px;height:1.2px;background:#aaaaaa;"></div>
<div style="position:absolute;left:11.0px;top:335.8px;width:36.0px;height:1.2px;background:#aaaaaa;"></div>
<div style="position:absolute;left:45.5px;top:300.0px;width:2.0px;height:37.0px;background:#2a8a4a;"></div>
<div style="position:absolute;top:318.1px;font-size:17px;line-height:17px;color:#e6e6e6;font-weight:normal;font-style:normal;white-space:nowrap;font-family:'Liberation Sans',sans-serif;left:-571.0px;width:1200px;text-align:center;">1</div>
<div style="position:absolute;left:11.0px;top:337.0px;width:36.0px;height:1.0px;background:#3a3a3a;"></div>
<div style="position:absolute;top:351.1px;font-size:17px;line-height:17px;color:#e6e6e6;font-weight:normal;font-style:normal;white-space:nowrap;font-family:'Liberation Sans',sans-serif;left:-571.0px;width:1200px;text-align:center;">2</div>
<div style="position:absolute;left:11.0px;top:370.0px;width:36.0px;height:1.0px;background:#3a3a3a;"></div>
<div style="position:absolute;top:383.1px;font-size:17px;line-height:17px;color:#e6e6e6;font-weight:normal;font-style:normal;white-space:nowrap;font-family:'Liberation Sans',sans-serif;left:-571.0px;width:1200px;text-align:center;">3</div>
<div style="position:absolute;left:11.0px;top:402.0px;width:36.0px;height:1.0px;background:#3a3a3a;"></div>
<div style="position:absolute;top:407.4px;font-size:17px;line-height:17px;color:#e6e6e6;font-weight:normal;font-style:normal;white-space:nowrap;font-family:'Liberation Sans',sans-serif;left:-571.0px;width:1200px;text-align:center;">4</div>
<div style="position:absolute;left:11.0px;top:426.4px;width:36.0px;height:1.0px;background:#3a3a3a;"></div>
<div style="position:absolute;top:442.8px;font-size:17px;line-height:17px;color:#e6e6e6;font-weight:normal;font-style:normal;white-space:nowrap;font-family:'Liberation Sans',sans-serif;left:-571.0px;width:1200px;text-align:center;">5</div>
<div style="position:absolute;left:11.0px;top:461.7px;width:36.0px;height:1.0px;background:#3a3a3a;"></div>
<div style="position:absolute;left:11.0px;top:466.5px;width:36.0px;height:1.0px;background:#3a3a3a;"></div>
<div style="position:absolute;top:470.2px;font-size:17px;line-height:17px;color:#e6e6e6;font-weight:normal;font-style:normal;white-space:nowrap;font-family:'Liberation Sans',sans-serif;left:-571.0px;width:1200px;text-align:center;">7</div>
<div style="position:absolute;left:11.0px;top:489.2px;width:36.0px;height:1.0px;background:#3a3a3a;"></div>
<div style="position:absolute;top:493.3px;font-size:17px;line-height:17px;color:#e6e6e6;font-weight:normal;font-style:normal;white-space:nowrap;font-family:'Liberation Sans',sans-serif;left:-571.0px;width:1200px;text-align:center;">8</div>
<div style="position:absolute;left:11.0px;top:512.2px;width:36.0px;height:1.0px;background:#3a3a3a;"></div>
<div style="position:absolute;top:516.3px;font-size:17px;line-height:17px;color:#e6e6e6;font-weight:normal;font-style:normal;white-space:nowrap;font-family:'Liberation Sans',sans-serif;left:-571.0px;width:1200px;text-align:center;">9</div>
<div style="position:absolute;left:11.0px;top:535.3px;width:36.0px;height:1.0px;background:#3a3a3a;"></div>
<div style="position:absolute;top:539.4px;font-size:17px;line-height:17px;color:#e6e6e6;font-weight:normal;font-style:normal;white-space:nowrap;font-family:'Liberation Sans',sans-serif;left:-571.0px;width:1200px;text-align:center;">10</div>
<div style="position:absolute;left:11.0px;top:558.4px;width:36.0px;height:1.0px;background:#3a3a3a;"></div>
<div style="position:absolute;top:562.0px;font-size:17px;line-height:17px;color:#e6e6e6;font-weight:normal;font-style:normal;white-space:nowrap;font-family:'Liberation Sans',sans-serif;left:-571.0px;width:1200px;text-align:center;">11</div>
<div style="position:absolute;left:11.0px;top:581.0px;width:36.0px;height:1.0px;background:#3a3a3a;"></div>
<div style="position:absolute;top:588.5px;font-size:17px;line-height:17px;color:#e6e6e6;font-weight:normal;font-style:normal;white-space:nowrap;font-family:'Liberation Sans',sans-serif;left:-571.0px;width:1200px;text-align:center;">12</div>
<div style="position:absolute;left:11.0px;top:607.5px;width:36.0px;height:1.0px;background:#3a3a3a;"></div>
<div style="position:absolute;top:611.0px;font-size:17px;line-height:17px;color:#e6e6e6;font-weight:normal;font-style:normal;white-space:nowrap;font-family:'Liberation Sans',sans-serif;left:-571.0px;width:1200px;text-align:center;">13</div>
<div style="position:absolute;left:11.0px;top:630.0px;width:36.0px;height:1.0px;background:#3a3a3a;"></div>
<div style="position:absolute;top:634.0px;font-size:17px;line-height:17px;color:#e6e6e6;font-weight:normal;font-style:normal;white-space:nowrap;font-family:'Liberation Sans',sans-serif;left:-571.0px;width:1200px;text-align:center;">14</div>
<div style="position:absolute;left:11.0px;top:653.0px;width:36.0px;height:1.0px;background:#3a3a3a;"></div>
<div style="position:absolute;top:657.0px;font-size:17px;line-height:17px;color:#e6e6e6;font-weight:normal;font-style:normal;white-space:nowrap;font-family:'Liberation Sans',sans-serif;left:-571.0px;width:1200px;text-align:center;">15</div>
<div style="position:absolute;left:11.0px;top:676.0px;width:36.0px;height:1.0px;background:#3a3a3a;"></div>
<div style="position:absolute;top:683.3px;font-size:17px;line-height:17px;color:#e6e6e6;font-weight:normal;font-style:normal;white-space:nowrap;font-family:'Liberation Sans',sans-serif;left:-571.0px;width:1200px;text-align:center;">16</div>
<div style="position:absolute;left:11.0px;top:702.3px;width:36.0px;height:1.0px;background:#3a3a3a;"></div>
<div style="position:absolute;top:706.5px;font-size:17px;line-height:17px;color:#e6e6e6;font-weight:normal;font-style:normal;white-space:nowrap;font-family:'Liberation Sans',sans-serif;left:-571.0px;width:1200px;text-align:center;">17</div>
<div style="position:absolute;left:11.0px;top:725.5px;width:36.0px;height:1.0px;background:#3a3a3a;"></div>
<div style="position:absolute;top:729.1px;font-size:17px;line-height:17px;color:#e6e6e6;font-weight:normal;font-style:normal;white-space:nowrap;font-family:'Liberation Sans',sans-serif;left:-571.0px;width:1200px;text-align:center;">18</div>
<div style="position:absolute;left:11.0px;top:748.1px;width:36.0px;height:1.0px;background:#3a3a3a;"></div>
<div style="position:absolute;top:752.2px;font-size:17px;line-height:17px;color:#e6e6e6;font-weight:normal;font-style:normal;white-space:nowrap;font-family:'Liberation Sans',sans-serif;left:-571.0px;width:1200px;text-align:center;">19</div>
<div style="position:absolute;left:11.0px;top:771.2px;width:36.0px;height:1.0px;background:#3a3a3a;"></div>
<div style="position:absolute;left:11.0px;top:775.8px;width:36.0px;height:1.0px;background:#3a3a3a;"></div>
<div style="position:absolute;top:779.9px;font-size:17px;line-height:17px;color:#e6e6e6;font-weight:normal;font-style:normal;white-space:nowrap;font-family:'Liberation Sans',sans-serif;left:-571.0px;width:1200px;text-align:center;">21</div>
<div style="position:absolute;left:11.0px;top:798.9px;width:36.0px;height:1.0px;background:#3a3a3a;"></div>
<div style="position:absolute;top:803.3px;font-size:17px;line-height:17px;color:#e6e6e6;font-weight:normal;font-style:normal;white-space:nowrap;font-family:'Liberation Sans',sans-serif;left:-571.0px;width:1200px;text-align:center;">22</div>
<div style="position:absolute;left:11.0px;top:822.3px;width:36.0px;height:1.0px;background:#3a3a3a;"></div>
<div style="position:absolute;left:11.0px;top:827.0px;width:36.0px;height:1.0px;background:#3a3a3a;"></div>
<div style="position:absolute;top:834.4px;font-size:17px;line-height:17px;color:#e6e6e6;font-weight:normal;font-style:normal;white-space:nowrap;font-family:'Liberation Sans',sans-serif;left:-571.0px;width:1200px;text-align:center;">24</div>
<div style="position:absolute;left:11.0px;top:853.4px;width:36.0px;height:1.0px;background:#3a3a3a;"></div>
<div style="position:absolute;top:857.5px;font-size:17px;line-height:17px;color:#e6e6e6;font-weight:normal;font-style:normal;white-space:nowrap;font-family:'Liberation Sans',sans-serif;left:-571.0px;width:1200px;text-align:center;">25</div>
<div style="position:absolute;left:11.0px;top:876.5px;width:36.0px;height:1.0px;background:#3a3a3a;"></div>
<div style="position:absolute;top:880.5px;font-size:17px;line-height:17px;color:#e6e6e6;font-weight:normal;font-style:normal;white-space:nowrap;font-family:'Liberation Sans',sans-serif;left:-571.0px;width:1200px;text-align:center;">26</div>
<div style="position:absolute;left:11.0px;top:899.5px;width:36.0px;height:1.0px;background:#3a3a3a;"></div>
<div style="position:absolute;top:903.6px;font-size:17px;line-height:17px;color:#e6e6e6;font-weight:normal;font-style:normal;white-space:nowrap;font-family:'Liberation Sans',sans-serif;left:-571.0px;width:1200px;text-align:center;">27</div>
<div style="position:absolute;left:11.0px;top:922.6px;width:36.0px;height:1.0px;background:#3a3a3a;"></div>
<div style="position:absolute;top:926.6px;font-size:17px;line-height:17px;color:#e6e6e6;font-weight:normal;font-style:normal;white-space:nowrap;font-family:'Liberation Sans',sans-serif;left:-571.0px;width:1200px;text-align:center;">28</div>
<div style="position:absolute;left:11.0px;top:945.6px;width:36.0px;height:1.0px;background:#3a3a3a;"></div>
<div style="position:absolute;top:949.3px;font-size:17px;line-height:17px;color:#e6e6e6;font-weight:normal;font-style:normal;white-space:nowrap;font-family:'Liberation Sans',sans-serif;left:-571.0px;width:1200px;text-align:center;">29</div>
<div style="position:absolute;left:11.0px;top:968.3px;width:36.0px;height:1.0px;background:#3a3a3a;"></div>
<div style="position:absolute;top:972.4px;font-size:17px;line-height:17px;color:#e6e6e6;font-weight:normal;font-style:normal;white-space:nowrap;font-family:'Liberation Sans',sans-serif;left:-571.0px;width:1200px;text-align:center;">30</div>
<div style="position:absolute;left:11.0px;top:991.4px;width:36.0px;height:1.0px;background:#3a3a3a;"></div>
<div style="position:absolute;top:998.8px;font-size:17px;line-height:17px;color:#e6e6e6;font-weight:normal;font-style:normal;white-space:nowrap;font-family:'Liberation Sans',sans-serif;left:-571.0px;width:1200px;text-align:center;">31</div>
<div style="position:absolute;left:11.0px;top:1017.7px;width:36.0px;height:1.0px;background:#3a3a3a;"></div>
<div style="position:absolute;top:1021.2px;font-size:17px;line-height:17px;color:#e6e6e6;font-weight:normal;font-style:normal;white-space:nowrap;font-family:'Liberation Sans',sans-serif;left:-571.0px;width:1200px;text-align:center;">32</div>
<div style="position:absolute;left:11.0px;top:1040.2px;width:36.0px;height:1.0px;background:#3a3a3a;"></div>
<div style="position:absolute;top:1045.6px;font-size:17px;line-height:17px;color:#e6e6e6;font-weight:normal;font-style:normal;white-space:nowrap;font-family:'Liberation Sans',sans-serif;left:-571.0px;width:1200px;text-align:center;">33</div>
<div style="position:absolute;left:11.0px;top:1064.6px;width:36.0px;height:1.0px;background:#3a3a3a;"></div>
<div style="position:absolute;top:1080.3px;font-size:17px;line-height:17px;color:#e6e6e6;font-weight:normal;font-style:normal;white-space:nowrap;font-family:'Liberation Sans',sans-serif;left:-571.0px;width:1200px;text-align:center;">34</div>
<div style="position:absolute;left:11.0px;top:1099.3px;width:36.0px;height:1.0px;background:#3a3a3a;"></div>
<div style="position:absolute;top:1103.5px;font-size:17px;line-height:17px;color:#e6e6e6;font-weight:normal;font-style:normal;white-space:nowrap;font-family:'Liberation Sans',sans-serif;left:-571.0px;width:1200px;text-align:center;">35</div>
<div style="position:absolute;left:11.0px;top:1122.4px;width:36.0px;height:1.0px;background:#3a3a3a;"></div>
<div style="position:absolute;top:1126.5px;font-size:17px;line-height:17px;color:#e6e6e6;font-weight:normal;font-style:normal;white-space:nowrap;font-family:'Liberation Sans',sans-serif;left:-571.0px;width:1200px;text-align:center;">36</div>
<div style="position:absolute;left:11.0px;top:1145.4px;width:36.0px;height:1.0px;background:#3a3a3a;"></div>
<div style="position:absolute;top:1149.5px;font-size:17px;line-height:17px;color:#e6e6e6;font-weight:normal;font-style:normal;white-space:nowrap;font-family:'Liberation Sans',sans-serif;left:-571.0px;width:1200px;text-align:center;">37</div>
<div style="position:absolute;left:11.0px;top:1168.5px;width:36.0px;height:1.0px;background:#3a3a3a;"></div>
<div style="position:absolute;top:1172.5px;font-size:17px;line-height:17px;color:#e6e6e6;font-weight:normal;font-style:normal;white-space:nowrap;font-family:'Liberation Sans',sans-serif;left:-571.0px;width:1200px;text-align:center;">38</div>
<div style="position:absolute;left:11.0px;top:1191.5px;width:36.0px;height:1.0px;background:#3a3a3a;"></div>
<div style="position:absolute;top:1195.2px;font-size:17px;line-height:17px;color:#e6e6e6;font-weight:normal;font-style:normal;white-space:nowrap;font-family:'Liberation Sans',sans-serif;left:-571.0px;width:1200px;text-align:center;">39</div>
<div style="position:absolute;left:11.0px;top:1214.2px;width:36.0px;height:1.0px;background:#3a3a3a;"></div>
<div style="position:absolute;top:1218.3px;font-size:17px;line-height:17px;color:#e6e6e6;font-weight:normal;font-style:normal;white-space:nowrap;font-family:'Liberation Sans',sans-serif;left:-571.0px;width:1200px;text-align:center;">40</div>
<div style="position:absolute;left:11.0px;top:1237.3px;width:36.0px;height:1.0px;background:#3a3a3a;"></div>
<div style="position:absolute;top:1241.3px;font-size:17px;line-height:17px;color:#e6e6e6;font-weight:normal;font-style:normal;white-space:nowrap;font-family:'Liberation Sans',sans-serif;left:-571.0px;width:1200px;text-align:center;">41</div>
<div style="position:absolute;left:11.0px;top:1260.3px;width:36.0px;height:1.0px;background:#3a3a3a;"></div>
<div style="position:absolute;top:1264.8px;font-size:17px;line-height:17px;color:#e6e6e6;font-weight:normal;font-style:normal;white-space:nowrap;font-family:'Liberation Sans',sans-serif;left:-571.0px;width:1200px;text-align:center;">42</div>
<div style="position:absolute;left:11.0px;top:1283.7px;width:36.0px;height:1.0px;background:#3a3a3a;"></div>
<div style="position:absolute;top:1287.8px;font-size:17px;line-height:17px;color:#e6e6e6;font-weight:normal;font-style:normal;white-space:nowrap;font-family:'Liberation Sans',sans-serif;left:-571.0px;width:1200px;text-align:center;">43</div>
<div style="position:absolute;left:11.0px;top:1306.7px;width:36.0px;height:1.0px;background:#3a3a3a;"></div>
<div style="position:absolute;top:1310.6px;font-size:17px;line-height:17px;color:#e6e6e6;font-weight:normal;font-style:normal;white-space:nowrap;font-family:'Liberation Sans',sans-serif;left:-571.0px;width:1200px;text-align:center;">44</div>
<div style="position:absolute;left:11.0px;top:1329.6px;width:36.0px;height:1.0px;background:#3a3a3a;"></div>
<div style="position:absolute;top:1333.8px;font-size:17px;line-height:17px;color:#e6e6e6;font-weight:normal;font-style:normal;white-space:nowrap;font-family:'Liberation Sans',sans-serif;left:-571.0px;width:1200px;text-align:center;">45</div>
<div style="position:absolute;left:11.0px;top:1352.7px;width:36.0px;height:1.0px;background:#3a3a3a;"></div>
<div style="position:absolute;top:1356.8px;font-size:17px;line-height:17px;color:#e6e6e6;font-weight:normal;font-style:normal;white-space:nowrap;font-family:'Liberation Sans',sans-serif;left:-571.0px;width:1200px;text-align:center;">46</div>
<div style="position:absolute;left:11.0px;top:1375.7px;width:36.0px;height:1.0px;background:#3a3a3a;"></div>
<div style="position:absolute;top:1379.5px;font-size:17px;line-height:17px;color:#e6e6e6;font-weight:normal;font-style:normal;white-space:nowrap;font-family:'Liberation Sans',sans-serif;left:-571.0px;width:1200px;text-align:center;">47</div>
<div style="position:absolute;left:11.0px;top:1398.4px;width:36.0px;height:1.0px;background:#3a3a3a;"></div>
<div style="position:absolute;top:1402.5px;font-size:17px;line-height:17px;color:#e6e6e6;font-weight:normal;font-style:normal;white-space:nowrap;font-family:'Liberation Sans',sans-serif;left:-571.0px;width:1200px;text-align:center;">48</div>
<div style="position:absolute;left:11.0px;top:1421.4px;width:36.0px;height:1.0px;background:#3a3a3a;"></div>
<div style="position:absolute;top:1425.5px;font-size:17px;line-height:17px;color:#e6e6e6;font-weight:normal;font-style:normal;white-space:nowrap;font-family:'Liberation Sans',sans-serif;left:-571.0px;width:1200px;text-align:center;">49</div>
<div style="position:absolute;left:11.0px;top:1444.5px;width:36.0px;height:1.0px;background:#3a3a3a;"></div>
<div style="position:absolute;top:1448.6px;font-size:17px;line-height:17px;color:#e6e6e6;font-weight:normal;font-style:normal;white-space:nowrap;font-family:'Liberation Sans',sans-serif;left:-571.0px;width:1200px;text-align:center;">50</div>
<div style="position:absolute;left:11.0px;top:1467.6px;width:36.0px;height:1.0px;background:#3a3a3a;"></div>
<div style="position:absolute;top:1471.2px;font-size:17px;line-height:17px;color:#e6e6e6;font-weight:normal;font-style:normal;white-space:nowrap;font-family:'Liberation Sans',sans-serif;left:-571.0px;width:1200px;text-align:center;">51</div>
<div style="position:absolute;left:11.0px;top:1490.2px;width:36.0px;height:1.0px;background:#3a3a3a;"></div>
<div style="position:absolute;top:1493.8px;font-size:17px;line-height:17px;color:#e6e6e6;font-weight:normal;font-style:normal;white-space:nowrap;font-family:'Liberation Sans',sans-serif;left:-571.0px;width:1200px;text-align:center;">52</div>
<div style="position:absolute;left:11.0px;top:1512.8px;width:36.0px;height:1.0px;background:#3a3a3a;"></div>
<div style="position:absolute;top:1517.3px;font-size:17px;line-height:17px;color:#e6e6e6;font-weight:normal;font-style:normal;white-space:nowrap;font-family:'Liberation Sans',sans-serif;left:-571.0px;width:1200px;text-align:center;">53</div>
<div style="position:absolute;left:11.0px;top:1536.3px;width:36.0px;height:1.0px;background:#3a3a3a;"></div>
<div style="position:absolute;top:1541.5px;font-size:17px;line-height:17px;color:#e6e6e6;font-weight:normal;font-style:normal;white-space:nowrap;font-family:'Liberation Sans',sans-serif;left:-571.0px;width:1200px;text-align:center;">54</div>
<div style="position:absolute;left:11.0px;top:1560.4px;width:36.0px;height:1.0px;background:#3a3a3a;"></div>
<div style="position:absolute;top:1576.5px;font-size:17px;line-height:17px;color:#e6e6e6;font-weight:normal;font-style:normal;white-space:nowrap;font-family:'Liberation Sans',sans-serif;left:-571.0px;width:1200px;text-align:center;">55</div>
<div style="position:absolute;left:11.0px;top:1595.4px;width:36.0px;height:1.0px;background:#3a3a3a;"></div>
<div style="position:absolute;left:11.0px;top:1600.4px;width:36.0px;height:1.0px;background:#3a3a3a;"></div>
<div style="position:absolute;top:1604.5px;font-size:17px;line-height:17px;color:#e6e6e6;font-weight:normal;font-style:normal;white-space:nowrap;font-family:'Liberation Sans',sans-serif;left:-571.0px;width:1200px;text-align:center;">57</div>
<div style="position:absolute;left:11.0px;top:1623.5px;width:36.0px;height:1.0px;background:#3a3a3a;"></div>
<div style="position:absolute;left:11.0px;top:1628.4px;width:36.0px;height:1.0px;background:#3a3a3a;"></div>
<div style="position:absolute;top:1632.5px;font-size:17px;line-height:17px;color:#e6e6e6;font-weight:normal;font-style:normal;white-space:nowrap;font-family:'Liberation Sans',sans-serif;left:-571.0px;width:1200px;text-align:center;">59</div>
<div style="position:absolute;left:11.0px;top:1651.5px;width:36.0px;height:1.0px;background:#3a3a3a;"></div>
<div style="position:absolute;top:1655.6px;font-size:17px;line-height:17px;color:#e6e6e6;font-weight:normal;font-style:normal;white-space:nowrap;font-family:'Liberation Sans',sans-serif;left:-571.0px;width:1200px;text-align:center;">60</div>
<div style="position:absolute;left:47.0px;top:300.0px;width:2813.0px;height:1370.0px;background:#ffffff;"></div>
<div style="position:absolute;top:304.1px;font-size:31px;line-height:31px;color:#1e1e1e;font-weight:bold;font-style:normal;white-space:nowrap;font-family:'Liberation Sans',sans-serif;letter-spacing:1.3px;left:78.0px;-webkit-text-stroke:0.7px #1e1e1e;">Financial Statements Summary</div>
<div style="position:absolute;top:339.8px;font-size:28.5px;line-height:28.5px;color:#000000;font-weight:bold;font-style:normal;white-space:nowrap;font-family:'Liberation Sans',sans-serif;letter-spacing:0.2px;left:77.0px;-webkit-text-stroke:0.6px #000;">ABC Company Inc.</div>
<div style="position:absolute;top:376.7px;font-size:18px;line-height:18px;color:#2f6fd8;font-weight:bold;font-style:normal;white-space:nowrap;font-family:'Liberation Sans',sans-serif;letter-spacing:0.33px;left:75.0px;-webkit-text-stroke:0.3px #2f6fd8;text-decoration:underline;text-decoration-thickness:1.5px;text-underline-offset:2px;">Go to Table of Contents</div>
<div style="position:absolute;top:376.1px;font-size:21.5px;line-height:21.5px;color:#1e1e1e;font-weight:bold;font-style:normal;white-space:nowrap;font-family:'Liberation Sans',sans-serif;letter-spacing:0.2px;left:1489.0px;-webkit-text-stroke:0.4px #1e1e1e;">Select reporting year</div>
<div style="position:absolute;left:1728.0px;top:369.0px;width:276.5px;height:33.5px;background:#fff266;border:1px solid #d8d8c0;"></div>
<div style="position:absolute;top:377.1px;font-size:21.5px;line-height:21.5px;color:#1e1e1e;font-weight:bold;font-style:normal;white-space:nowrap;font-family:'Liberation Sans',sans-serif;letter-spacing:1.3px;left:1267.0px;width:1200px;text-align:center;-webkit-text-stroke:0.4px #1e1e1e;">2026</div>
<div style="position:absolute;left:47.0px;top:425.6px;width:2813.0px;height:1.2px;background:#a8a8a8;"></div>
<div style="position:absolute;left:11.0px;top:425.6px;width:36.0px;height:1.2px;background:#a0a0a0;"></div>
<div style="position:absolute;left:45.8px;top:299.5px;width:2.2px;height:37.0px;background:#217a46;"></div>
<div style="position:absolute;left:47.0px;top:298.3px;width:25.0px;height:2.2px;background:#217a46;"></div>
<div style="position:absolute;left:71.0px;top:426.9px;width:1075.0px;height:34.8px;background:#4b4fd1;"></div>
<div style="position:absolute;top:430.8px;font-size:29px;line-height:29px;color:#ffffff;font-weight:bold;font-style:normal;white-space:nowrap;font-family:'Liberation Sans',sans-serif;letter-spacing:0.97px;left:8.5px;width:1200px;text-align:center;-webkit-text-stroke:0.6px #fff;">Income Statement ($&#x27;000) - 5 years to December 2030</div>
<div style="position:absolute;left:1176.0px;top:426.9px;width:1656.0px;height:34.8px;background:#4b4fd1;"></div>
<div style="position:absolute;top:430.8px;font-size:29px;line-height:29px;color:#ffffff;font-weight:bold;font-style:normal;white-space:nowrap;font-family:'Liberation Sans',sans-serif;letter-spacing:0.97px;left:1404.0px;width:1200px;text-align:center;-webkit-text-stroke:0.6px #fff;">Income Statement ($&#x27;000) - 2026</div>
<div style="position:absolute;left:72.0px;top:467.0px;width:473.0px;height:22.2px;background:#6b72e6;"></div>
<div style="position:absolute;top:470.3px;font-size:18px;line-height:18px;color:#ffffff;font-weight:bold;font-style:normal;white-space:nowrap;font-family:'Liberation Sans',sans-serif;letter-spacing:0.45px;left:82.5px;-webkit-text-stroke:0.3px #fff;">Year Ending</div>
<div style="position:absolute;left:546.0px;top:467.0px;width:118.5px;height:22.2px;background:#6b72e6;"></div>
<div style="position:absolute;top:470.3px;font-size:18px;line-height:18px;color:#ffffff;font-weight:bold;font-style:normal;white-space:nowrap;font-family:'Liberation Sans',sans-serif;letter-spacing:0.8px;left:5.2px;width:1200px;text-align:center;-webkit-text-stroke:0.3px #fff;">2026</div>
<div style="position:absolute;left:665.5px;top:467.0px;width:119.0px;height:22.2px;background:#6b72e6;"></div>
<div style="position:absolute;top:470.3px;font-size:18px;line-height:18px;color:#ffffff;font-weight:bold;font-style:normal;white-space:nowrap;font-family:'Liberation Sans',sans-serif;letter-spacing:0.8px;left:125.0px;width:1200px;text-align:center;-webkit-text-stroke:0.3px #fff;">2027</div>
<div style="position:absolute;left:785.5px;top:467.0px;width:119.0px;height:22.2px;background:#6b72e6;"></div>
<div style="position:absolute;top:470.3px;font-size:18px;line-height:18px;color:#ffffff;font-weight:bold;font-style:normal;white-space:nowrap;font-family:'Liberation Sans',sans-serif;letter-spacing:0.8px;left:245.0px;width:1200px;text-align:center;-webkit-text-stroke:0.3px #fff;">2028</div>
<div style="position:absolute;left:905.5px;top:467.0px;width:119.5px;height:22.2px;background:#6b72e6;"></div>
<div style="position:absolute;top:470.3px;font-size:18px;line-height:18px;color:#ffffff;font-weight:bold;font-style:normal;white-space:nowrap;font-family:'Liberation Sans',sans-serif;letter-spacing:0.8px;left:365.2px;width:1200px;text-align:center;-webkit-text-stroke:0.3px #fff;">2029</div>
<div style="position:absolute;left:1026.0px;top:467.0px;width:119.5px;height:22.2px;background:#6b72e6;"></div>
<div style="position:absolute;top:470.3px;font-size:18px;line-height:18px;color:#ffffff;font-weight:bold;font-style:normal;white-space:nowrap;font-family:'Liberation Sans',sans-serif;letter-spacing:0.8px;left:485.8px;width:1200px;text-align:center;-webkit-text-stroke:0.3px #fff;">2030</div>
<div style="position:absolute;left:1176.5px;top:467.0px;width:137.0px;height:22.2px;background:#6b72e6;"></div>
<div style="position:absolute;top:470.3px;font-size:18px;line-height:18px;color:#ffffff;font-weight:bold;font-style:normal;white-space:nowrap;font-family:'Liberation Sans',sans-serif;letter-spacing:0.8px;left:645.0px;width:1200px;text-align:center;-webkit-text-stroke:0.3px #fff;">Jan</div>
<div style="position:absolute;left:1314.5px;top:467.0px;width:137.0px;height:22.2px;background:#6b72e6;"></div>
<div style="position:absolute;top:470.3px;font-size:18px;line-height:18px;color:#ffffff;font-weight:bold;font-style:normal;white-space:nowrap;font-family:'Liberation Sans',sans-serif;letter-spacing:0.8px;left:783.0px;width:1200px;text-align:center;-webkit-text-stroke:0.3px #fff;">Feb</div>
<div style="position:absolute;left:1452.5px;top:467.0px;width:137.0px;height:22.2px;background:#6b72e6;"></div>
<div style="position:absolute;top:470.3px;font-size:18px;line-height:18px;color:#ffffff;font-weight:bold;font-style:normal;white-space:nowrap;font-family:'Liberation Sans',sans-serif;letter-spacing:0.8px;left:921.0px;width:1200px;text-align:center;-webkit-text-stroke:0.3px #fff;">Mar</div>
<div style="position:absolute;left:1590.5px;top:467.0px;width:137.0px;height:22.2px;background:#6b72e6;"></div>
<div style="position:absolute;top:470.3px;font-size:18px;line-height:18px;color:#ffffff;font-weight:bold;font-style:normal;white-space:nowrap;font-family:'Liberation Sans',sans-serif;letter-spacing:0.8px;left:1059.0px;width:1200px;text-align:center;-webkit-text-stroke:0.3px #fff;">Apr</div>
<div style="position:absolute;left:1728.5px;top:467.0px;width:137.0px;height:22.2px;background:#6b72e6;"></div>
<div style="position:absolute;top:470.3px;font-size:18px;line-height:18px;color:#ffffff;font-weight:bold;font-style:normal;white-space:nowrap;font-family:'Liberation Sans',sans-serif;letter-spacing:0.8px;left:1197.0px;width:1200px;text-align:center;-webkit-text-stroke:0.3px #fff;">May</div>
<div style="position:absolute;left:1866.5px;top:467.0px;width:137.0px;height:22.2px;background:#6b72e6;"></div>
<div style="position:absolute;top:470.3px;font-size:18px;line-height:18px;color:#ffffff;font-weight:bold;font-style:normal;white-space:nowrap;font-family:'Liberation Sans',sans-serif;letter-spacing:0.8px;left:1335.0px;width:1200px;text-align:center;-webkit-text-stroke:0.3px #fff;">Jun</div>
<div style="position:absolute;left:2004.5px;top:467.0px;width:137.0px;height:22.2px;background:#6b72e6;"></div>
<div style="position:absolute;top:470.3px;font-size:18px;line-height:18px;color:#ffffff;font-weight:bold;font-style:normal;white-space:nowrap;font-family:'Liberation Sans',sans-serif;letter-spacing:0.8px;left:1473.0px;width:1200px;text-align:center;-webkit-text-stroke:0.3px #fff;">Jul</div>
<div style="position:absolute;left:2142.5px;top:467.0px;width:137.5px;height:22.2px;background:#6b72e6;"></div>
<div style="position:absolute;top:470.3px;font-size:18px;line-height:18px;color:#ffffff;font-weight:bold;font-style:normal;white-space:nowrap;font-family:'Liberation Sans',sans-serif;letter-spacing:0.8px;left:1611.2px;width:1200px;text-align:center;-webkit-text-stroke:0.3px #fff;">Aug</div>
<div style="position:absolute;left:2281.0px;top:467.0px;width:136.5px;height:22.2px;background:#6b72e6;"></div>
<div style="position:absolute;top:470.3px;font-size:18px;line-height:18px;color:#ffffff;font-weight:bold;font-style:normal;white-space:nowrap;font-family:'Liberation Sans',sans-serif;letter-spacing:0.8px;left:1749.2px;width:1200px;text-align:center;-webkit-text-stroke:0.3px #fff;">Sep</div>
<div style="position:absolute;left:2418.5px;top:467.0px;width:137.0px;height:22.2px;background:#6b72e6;"></div>
<div style="position:absolute;top:470.3px;font-size:18px;line-height:18px;color:#ffffff;font-weight:bold;font-style:normal;white-space:nowrap;font-family:'Liberation Sans',sans-serif;letter-spacing:0.8px;left:1887.0px;width:1200px;text-align:center;-webkit-text-stroke:0.3px #fff;">Oct</div>
<div style="position:absolute;left:2556.5px;top:467.0px;width:137.0px;height:22.2px;background:#6b72e6;"></div>
<div style="position:absolute;top:470.3px;font-size:18px;line-height:18px;color:#ffffff;font-weight:bold;font-style:normal;white-space:nowrap;font-family:'Liberation Sans',sans-serif;letter-spacing:0.8px;left:2025.0px;width:1200px;text-align:center;-webkit-text-stroke:0.3px #fff;">Nov</div>
<div style="position:absolute;left:2694.5px;top:467.0px;width:137.0px;height:22.2px;background:#6b72e6;"></div>
<div style="position:absolute;top:470.3px;font-size:18px;line-height:18px;color:#ffffff;font-weight:bold;font-style:normal;white-space:nowrap;font-family:'Liberation Sans',sans-serif;letter-spacing:0.8px;left:2163.0px;width:1200px;text-align:center;-webkit-text-stroke:0.3px #fff;">Dec</div>
<div style="position:absolute;top:494.0px;font-size:17px;line-height:17px;color:#111111;font-weight:normal;font-style:normal;white-space:nowrap;font-family:'Liberation Sans',sans-serif;letter-spacing:0.35px;left:75.5px;">Revenue</div>
<div style="position:absolute;top:493.5px;font-size:17.5px;line-height:17.5px;color:#111111;font-weight:normal;font-style:normal;white-space:nowrap;font-family:'Liberation Sans',sans-serif;letter-spacing:0.2px;right:2247.5px;margin-right:-0.2px;">335</div>
<div style="position:absolute;top:493.5px;font-size:17.5px;line-height:17.5px;color:#111111;font-weight:normal;font-style:normal;white-space:nowrap;font-family:'Liberation Sans',sans-serif;letter-spacing:0.2px;right:2127.5px;margin-right:-0.2px;">1,170</div>
<div style="position:absolute;top:493.5px;font-size:17.5px;line-height:17.5px;color:#111111;font-weight:normal;font-style:normal;white-space:nowrap;font-family:'Liberation Sans',sans-serif;letter-spacing:0.2px;right:2007.5px;margin-right:-0.2px;">2,733</div>
<div style="position:absolute;top:493.5px;font-size:17.5px;line-height:17.5px;color:#111111;font-weight:normal;font-style:normal;white-space:nowrap;font-family:'Liberation Sans',sans-serif;letter-spacing:0.2px;right:1887.0px;margin-right:-0.2px;">5,481</div>
<div style="position:absolute;top:493.5px;font-size:17.5px;line-height:17.5px;color:#111111;font-weight:normal;font-style:normal;white-space:nowrap;font-family:'Liberation Sans',sans-serif;letter-spacing:0.2px;right:1766.5px;margin-right:-0.2px;">9,747</div>
<div style="position:absolute;top:493.5px;font-size:17.5px;line-height:17.5px;color:#111111;font-weight:normal;font-style:normal;white-space:nowrap;font-family:'Liberation Sans',sans-serif;letter-spacing:0.2px;right:1598.5px;margin-right:-0.2px;">6</div>
<div style="position:absolute;top:493.5px;font-size:17.5px;line-height:17.5px;color:#111111;font-weight:normal;font-style:normal;white-space:nowrap;font-family:'Liberation Sans',sans-serif;letter-spacing:0.2px;right:1460.5px;margin-right:-0.2px;">11</div>
<div style="position:absolute;top:493.5px;font-size:17.5px;line-height:17.5px;color:#111111;font-weight:normal;font-style:normal;white-space:nowrap;font-family:'Liberation Sans',sans-serif;letter-spacing:0.2px;right:1322.5px;margin-right:-0.2px;">15</div>
<div style="position:absolute;top:493.5px;font-size:17.5px;line-height:17.5px;color:#111111;font-weight:normal;font-style:normal;white-space:nowrap;font-family:'Liberation Sans',sans-serif;letter-spacing:0.2px;right:1184.5px;margin-right:-0.2px;">20</div>
<div style="position:absolute;top:493.5px;font-size:17.5px;line-height:17.5px;color:#111111;font-weight:normal;font-style:normal;white-space:nowrap;font-family:'Liberation Sans',sans-serif;letter-spacing:0.2px;right:1046.5px;margin-right:-0.2px;">25</div>
<div style="position:absolute;top:493.5px;font-size:17.5px;line-height:17.5px;color:#111111;font-weight:normal;font-style:normal;white-space:nowrap;font-family:'Liberation Sans',sans-serif;letter-spacing:0.2px;right:908.5px;margin-right:-0.2px;">29</div>
<div style="position:absolute;top:493.5px;font-size:17.5px;line-height:17.5px;color:#111111;font-weight:normal;font-style:normal;white-space:nowrap;font-family:'Liberation Sans',sans-serif;letter-spacing:0.2px;right:770.5px;margin-right:-0.2px;">32</div>
<div style="position:absolute;top:493.5px;font-size:17.5px;line-height:17.5px;color:#111111;font-weight:normal;font-style:normal;white-space:nowrap;font-family:'Liberation Sans',sans-serif;letter-spacing:0.2px;right:632.0px;margin-right:-0.2px;">34</div>
<div style="position:absolute;top:493.5px;font-size:17.5px;line-height:17.5px;color:#111111;font-weight:normal;font-style:normal;white-space:nowrap;font-family:'Liberation Sans',sans-serif;letter-spacing:0.2px;right:494.5px;margin-right:-0.2px;">37</div>
<div style="position:absolute;top:493.5px;font-size:17.5px;line-height:17.5px;color:#111111;font-weight:normal;font-style:normal;white-space:nowrap;font-family:'Liberation Sans',sans-serif;letter-spacing:0.2px;right:356.5px;margin-right:-0.2px;">39</div>
<div style="position:absolute;top:493.5px;font-size:17.5px;line-height:17.5px;color:#111111;font-weight:normal;font-style:normal;white-space:nowrap;font-family:'Liberation Sans',sans-serif;letter-spacing:0.2px;right:218.5px;margin-right:-0.2px;">42</div>
<div style="position:absolute;top:493.5px;font-size:17.5px;line-height:17.5px;color:#111111;font-weight:normal;font-style:normal;white-space:nowrap;font-family:'Liberation Sans',sans-serif;letter-spacing:0.2px;right:80.5px;margin-right:-0.2px;">44</div>
<div style="position:absolute;top:517.0px;font-size:17px;line-height:17px;color:#111111;font-weight:normal;font-style:italic;white-space:nowrap;font-family:'Liberation Sans',sans-serif;letter-spacing:0.55px;left:94.0px;">Growth %</div>
<div style="position:absolute;top:517.0px;font-size:17px;line-height:17px;color:#111111;font-weight:normal;font-style:italic;white-space:nowrap;font-family:'Liberation Sans',sans-serif;letter-spacing:1.0px;right:2129.0px;margin-right:-1.0px;">249%</div>
<div style="position:absolute;top:517.0px;font-size:17px;line-height:17px;color:#111111;font-weight:normal;font-style:italic;white-space:nowrap;font-family:'Liberation Sans',sans-serif;letter-spacing:1.0px;right:2009.0px;margin-right:-1.0px;">134%</div>
<div style="position:absolute;top:517.0px;font-size:17px;line-height:17px;color:#111111;font-weight:normal;font-style:italic;white-space:nowrap;font-family:'Liberation Sans',sans-serif;letter-spacing:1.0px;right:1888.5px;margin-right:-1.0px;">101%</div>
<div style="position:absolute;top:517.0px;font-size:17px;line-height:17px;color:#111111;font-weight:normal;font-style:italic;white-space:nowrap;font-family:'Liberation Sans',sans-serif;letter-spacing:1.0px;right:1768.0px;margin-right:-1.0px;">78%</div>
<div style="position:absolute;top:516.6px;font-size:17.5px;line-height:17.5px;color:#111111;font-weight:normal;font-style:normal;white-space:nowrap;font-family:'Liberation Sans',sans-serif;right:1600.0px;">-</div>
<div style="position:absolute;top:517.0px;font-size:17px;line-height:17px;color:#111111;font-weight:normal;font-style:italic;white-space:nowrap;font-family:'Liberation Sans',sans-serif;letter-spacing:1.0px;right:1462.0px;margin-right:-1.0px;">77%</div>
<div style="position:absolute;top:517.0px;font-size:17px;line-height:17px;color:#111111;font-weight:normal;font-style:italic;white-space:nowrap;font-family:'Liberation Sans',sans-serif;letter-spacing:1.0px;right:1324.0px;margin-right:-1.0px;">44%</div>
<div style="position:absolute;top:517.0px;font-size:17px;line-height:17px;color:#111111;font-weight:normal;font-style:italic;white-space:nowrap;font-family:'Liberation Sans',sans-serif;letter-spacing:1.0px;right:1186.0px;margin-right:-1.0px;">30%</div>
<div style="position:absolute;top:517.0px;font-size:17px;line-height:17px;color:#111111;font-weight:normal;font-style:italic;white-space:nowrap;font-family:'Liberation Sans',sans-serif;letter-spacing:1.0px;right:1048.0px;margin-right:-1.0px;">23%</div>
<div style="position:absolute;top:517.0px;font-size:17px;line-height:17px;color:#111111;font-weight:normal;font-style:italic;white-space:nowrap;font-family:'Liberation Sans',sans-serif;letter-spacing:1.0px;right:910.0px;margin-right:-1.0px;">19%</div>
<div style="position:absolute;top:517.0px;font-size:17px;line-height:17px;color:#111111;font-weight:normal;font-style:italic;white-space:nowrap;font-family:'Liberation Sans',sans-serif;letter-spacing:1.0px;right:772.0px;margin-right:-1.0px;">9%</div>
<div style="position:absolute;top:517.0px;font-size:17px;line-height:17px;color:#111111;font-weight:normal;font-style:italic;white-space:nowrap;font-family:'Liberation Sans',sans-serif;letter-spacing:1.0px;right:633.5px;margin-right:-1.0px;">8%</div>
<div style="position:absolute;top:517.0px;font-size:17px;line-height:17px;color:#111111;font-weight:normal;font-style:italic;white-space:nowrap;font-family:'Liberation Sans',sans-serif;letter-spacing:1.0px;right:496.0px;margin-right:-1.0px;">7%</div>
<div style="position:absolute;top:517.0px;font-size:17px;line-height:17px;color:#111111;font-weight:normal;font-style:italic;white-space:nowrap;font-family:'Liberation Sans',sans-serif;letter-spacing:1.0px;right:358.0px;margin-right:-1.0px;">7%</div>
<div style="position:absolute;top:517.0px;font-size:17px;line-height:17px;color:#111111;font-weight:normal;font-style:italic;white-space:nowrap;font-family:'Liberation Sans',sans-serif;letter-spacing:1.0px;right:220.0px;margin-right:-1.0px;">6%</div>
<div style="position:absolute;top:517.0px;font-size:17px;line-height:17px;color:#111111;font-weight:normal;font-style:italic;white-space:nowrap;font-family:'Liberation Sans',sans-serif;letter-spacing:1.0px;right:82.0px;margin-right:-1.0px;">6%</div>
<div style="position:absolute;top:540.1px;font-size:17px;line-height:17px;color:#111111;font-weight:normal;font-style:normal;white-space:nowrap;font-family:'Liberation Sans',sans-serif;letter-spacing:0.35px;left:75.5px;">COGS</div>
<div style="position:absolute;top:539.7px;font-size:17.5px;line-height:17.5px;color:#111111;font-weight:normal;font-style:normal;white-space:nowrap;font-family:'Liberation Sans',sans-serif;letter-spacing:0.2px;right:2240.5px;margin-right:-0.2px;">(22)</div>
<div style="position:absolute;top:539.7px;font-size:17.5px;line-height:17.5px;color:#111111;font-weight:normal;font-style:normal;white-space:nowrap;font-family:'Liberation Sans',sans-serif;letter-spacing:0.2px;right:2120.5px;margin-right:-0.2px;">(73)</div>
<div style="position:absolute;top:539.7px;font-size:17.5px;line-height:17.5px;color:#111111;font-weight:normal;font-style:normal;white-space:nowrap;font-family:'Liberation Sans',sans-serif;letter-spacing:0.2px;right:2000.5px;margin-right:-0.2px;">(161)</div>
<div style="position:absolute;top:539.7px;font-size:17.5px;line-height:17.5px;color:#111111;font-weight:normal;font-style:normal;white-space:nowrap;font-family:'Liberation Sans',sans-serif;letter-spacing:0.2px;right:1880.0px;margin-right:-0.2px;">(307)</div>
<div style="position:absolute;top:539.7px;font-size:17.5px;line-height:17.5px;color:#111111;font-weight:normal;font-style:normal;white-space:nowrap;font-family:'Liberation Sans',sans-serif;letter-spacing:0.2px;right:1759.5px;margin-right:-0.2px;">(517)</div>
<div style="position:absolute;top:539.7px;font-size:17.5px;line-height:17.5px;color:#111111;font-weight:normal;font-style:normal;white-space:nowrap;font-family:'Liberation Sans',sans-serif;letter-spacing:0.2px;right:1591.5px;margin-right:-0.2px;">(0)</div>
<div style="position:absolute;top:539.7px;font-size:17.5px;line-height:17.5px;color:#111111;font-weight:normal;font-style:normal;white-space:nowrap;font-family:'Liberation Sans',sans-serif;letter-spacing:0.2px;right:1453.5px;margin-right:-0.2px;">(1)</div>
<div style="position:absolute;top:539.7px;font-size:17.5px;line-height:17.5px;color:#111111;font-weight:normal;font-style:normal;white-space:nowrap;font-family:'Liberation Sans',sans-serif;letter-spacing:0.2px;right:1315.5px;margin-right:-0.2px;">(1)</div>
<div style="position:absolute;top:539.7px;font-size:17.5px;line-height:17.5px;color:#111111;font-weight:normal;font-style:normal;white-space:nowrap;font-family:'Liberation Sans',sans-serif;letter-spacing:0.2px;right:1177.5px;margin-right:-0.2px;">(1)</div>
<div style="position:absolute;top:539.7px;font-size:17.5px;line-height:17.5px;color:#111111;font-weight:normal;font-style:normal;white-space:nowrap;font-family:'Liberation Sans',sans-serif;letter-spacing:0.2px;right:1039.5px;margin-right:-0.2px;">(2)</div>
<div style="position:absolute;top:539.7px;font-size:17.5px;line-height:17.5px;color:#111111;font-weight:normal;font-style:normal;white-space:nowrap;font-family:'Liberation Sans',sans-serif;letter-spacing:0.2px;right:901.5px;margin-right:-0.2px;">(2)</div>
<div style="position:absolute;top:539.7px;font-size:17.5px;line-height:17.5px;color:#111111;font-weight:normal;font-style:normal;white-space:nowrap;font-family:'Liberation Sans',sans-serif;letter-spacing:0.2px;right:763.5px;margin-right:-0.2px;">(2)</div>
<div style="position:absolute;top:539.7px;font-size:17.5px;line-height:17.5px;color:#111111;font-weight:normal;font-style:normal;white-space:nowrap;font-family:'Liberation Sans',sans-serif;letter-spacing:0.2px;right:625.0px;margin-right:-0.2px;">(2)</div>
<div style="position:absolute;top:539.7px;font-size:17.5px;line-height:17.5px;color:#111111;font-weight:normal;font-style:normal;white-space:nowrap;font-family:'Liberation Sans',sans-serif;letter-spacing:0.2px;right:487.5px;margin-right:-0.2px;">(2)</div>
<div style="position:absolute;top:539.7px;font-size:17.5px;line-height:17.5px;color:#111111;font-weight:normal;font-style:normal;white-space:nowrap;font-family:'Liberation Sans',sans-serif;letter-spacing:0.2px;right:349.5px;margin-right:-0.2px;">(3)</div>
<div style="position:absolute;top:539.7px;font-size:17.5px;line-height:17.5px;color:#111111;font-weight:normal;font-style:normal;white-space:nowrap;font-family:'Liberation Sans',sans-serif;letter-spacing:0.2px;right:211.5px;margin-right:-0.2px;">(3)</div>
<div style="position:absolute;top:539.7px;font-size:17.5px;line-height:17.5px;color:#111111;font-weight:normal;font-style:normal;white-space:nowrap;font-family:'Liberation Sans',sans-serif;letter-spacing:0.2px;right:73.5px;margin-right:-0.2px;">(3)</div>
<div style="position:absolute;top:562.8px;font-size:17px;line-height:17px;color:#111111;font-weight:normal;font-style:italic;white-space:nowrap;font-family:'Liberation Sans',sans-serif;letter-spacing:0.55px;left:94.0px;">% of Revenue</div>
<div style="position:absolute;top:562.8px;font-size:17px;line-height:17px;color:#111111;font-weight:normal;font-style:italic;white-space:nowrap;font-family:'Liberation Sans',sans-serif;letter-spacing:1.0px;right:2241.2px;margin-right:-1.0px;">(7%)</div>
<div style="position:absolute;top:562.8px;font-size:17px;line-height:17px;color:#111111;font-weight:normal;font-style:italic;white-space:nowrap;font-family:'Liberation Sans',sans-serif;letter-spacing:1.0px;right:2121.2px;margin-right:-1.0px;">(6%)</div>
<div style="position:absolute;top:562.8px;font-size:17px;line-height:17px;color:#111111;font-weight:normal;font-style:italic;white-space:nowrap;font-family:'Liberation Sans',sans-serif;letter-spacing:1.0px;right:2001.2px;margin-right:-1.0px;">(6%)</div>
<div style="position:absolute;top:562.8px;font-size:17px;line-height:17px;color:#111111;font-weight:normal;font-style:italic;white-space:nowrap;font-family:'Liberation Sans',sans-serif;letter-spacing:1.0px;right:1880.7px;margin-right:-1.0px;">(6%)</div>
<div style="position:absolute;top:562.8px;font-size:17px;line-height:17px;color:#111111;font-weight:normal;font-style:italic;white-space:nowrap;font-family:'Liberation Sans',sans-serif;letter-spacing:1.0px;right:1760.2px;margin-right:-1.0px;">(5%)</div>
<div style="position:absolute;top:562.8px;font-size:17px;line-height:17px;color:#111111;font-weight:normal;font-style:italic;white-space:nowrap;font-family:'Liberation Sans',sans-serif;letter-spacing:1.0px;right:1592.2px;margin-right:-1.0px;">(7%)</div>
<div style="position:absolute;top:562.8px;font-size:17px;line-height:17px;color:#111111;font-weight:normal;font-style:italic;white-space:nowrap;font-family:'Liberation Sans',sans-serif;letter-spacing:1.0px;right:1454.2px;margin-right:-1.0px;">(7%)</div>
<div style="position:absolute;top:562.8px;font-size:17px;line-height:17px;color:#111111;font-weight:normal;font-style:italic;white-space:nowrap;font-family:'Liberation Sans',sans-serif;letter-spacing:1.0px;right:1316.2px;margin-right:-1.0px;">(7%)</div>
<div style="position:absolute;top:562.8px;font-size:17px;line-height:17px;color:#111111;font-weight:normal;font-style:italic;white-space:nowrap;font-family:'Liberation Sans',sans-serif;letter-spacing:1.0px;right:1178.2px;margin-right:-1.0px;">(7%)</div>
<div style="position:absolute;top:562.8px;font-size:17px;line-height:17px;color:#111111;font-weight:normal;font-style:italic;white-space:nowrap;font-family:'Liberation Sans',sans-serif;letter-spacing:1.0px;right:1040.2px;margin-right:-1.0px;">(7%)</div>
<div style="position:absolute;top:562.8px;font-size:17px;line-height:17px;color:#111111;font-weight:normal;font-style:italic;white-space:nowrap;font-family:'Liberation Sans',sans-serif;letter-spacing:1.0px;right:902.2px;margin-right:-1.0px;">(7%)</div>
<div style="position:absolute;top:562.8px;font-size:17px;line-height:17px;color:#111111;font-weight:normal;font-style:italic;white-space:nowrap;font-family:'Liberation Sans',sans-serif;letter-spacing:1.0px;right:764.2px;margin-right:-1.0px;">(7%)</div>
<div style="position:absolute;top:562.8px;font-size:17px;line-height:17px;color:#111111;font-weight:normal;font-style:italic;white-space:nowrap;font-family:'Liberation Sans',sans-serif;letter-spacing:1.0px;right:625.7px;margin-right:-1.0px;">(7%)</div>
<div style="position:absolute;top:562.8px;font-size:17px;line-height:17px;color:#111111;font-weight:normal;font-style:italic;white-space:nowrap;font-family:'Liberation Sans',sans-serif;letter-spacing:1.0px;right:488.2px;margin-right:-1.0px;">(7%)</div>
<div style="position:absolute;top:562.8px;font-size:17px;line-height:17px;color:#111111;font-weight:normal;font-style:italic;white-space:nowrap;font-family:'Liberation Sans',sans-serif;letter-spacing:1.0px;right:350.2px;margin-right:-1.0px;">(7%)</div>
<div style="position:absolute;top:562.8px;font-size:17px;line-height:17px;color:#111111;font-weight:normal;font-style:italic;white-space:nowrap;font-family:'Liberation Sans',sans-serif;letter-spacing:1.0px;right:212.2px;margin-right:-1.0px;">(7%)</div>
<div style="position:absolute;top:562.8px;font-size:17px;line-height:17px;color:#111111;font-weight:normal;font-style:italic;white-space:nowrap;font-family:'Liberation Sans',sans-serif;letter-spacing:1.0px;right:74.2px;margin-right:-1.0px;">(7%)</div>
<div style="position:absolute;left:71.0px;top:581.0px;width:1075.0px;height:26.5px;background:#4ab2e6;"></div>
<div style="position:absolute;left:1176.0px;top:581.0px;width:1656.0px;height:26.5px;background:#4ab2e6;"></div>
<div style="position:absolute;top:585.1px;font-size:21px;line-height:21px;color:#ffffff;font-weight:bold;font-style:normal;white-space:nowrap;font-family:'Liberation Sans',sans-serif;letter-spacing:0.2px;left:86.0px;-webkit-text-stroke:0.4px #fff;">Gross Margin</div>
<div style="position:absolute;top:585.7px;font-size:18px;line-height:18px;color:#ffffff;font-weight:bold;font-style:normal;white-space:nowrap;font-family:'Liberation Sans',sans-serif;letter-spacing:0.6px;right:2248.0px;margin-right:-0.6px;-webkit-text-stroke:0.4px #ffffff;">313</div>
<div style="position:absolute;top:585.7px;font-size:18px;line-height:18px;color:#ffffff;font-weight:bold;font-style:normal;white-space:nowrap;font-family:'Liberation Sans',sans-serif;letter-spacing:0.6px;right:2128.0px;margin-right:-0.6px;-webkit-text-stroke:0.4px #ffffff;">1,097</div>
<div style="position:absolute;top:585.7px;font-size:18px;line-height:18px;color:#ffffff;font-weight:bold;font-style:normal;white-space:nowrap;font-family:'Liberation Sans',sans-serif;letter-spacing:0.6px;right:2008.0px;margin-right:-0.6px;-webkit-text-stroke:0.4px #ffffff;">2,572</div>
<div style="position:absolute;top:585.7px;font-size:18px;line-height:18px;color:#ffffff;font-weight:bold;font-style:normal;white-space:nowrap;font-family:'Liberation Sans',sans-serif;letter-spacing:0.6px;right:1887.5px;margin-right:-0.6px;-webkit-text-stroke:0.4px #ffffff;">5,174</div>
<div style="position:absolute;top:585.7px;font-size:18px;line-height:18px;color:#ffffff;font-weight:bold;font-style:normal;white-space:nowrap;font-family:'Liberation Sans',sans-serif;letter-spacing:0.6px;right:1767.0px;margin-right:-0.6px;-webkit-text-stroke:0.4px #ffffff;">9,231</div>
<div style="position:absolute;top:585.7px;font-size:18px;line-height:18px;color:#ffffff;font-weight:bold;font-style:normal;white-space:nowrap;font-family:'Liberation Sans',sans-serif;letter-spacing:0.6px;right:1599.0px;margin-right:-0.6px;-webkit-text-stroke:0.4px #ffffff;">6</div>
<div style="position:absolute;top:585.7px;font-size:18px;line-height:18px;color:#ffffff;font-weight:bold;font-style:normal;white-space:nowrap;font-family:'Liberation Sans',sans-serif;letter-spacing:0.6px;right:1461.0px;margin-right:-0.6px;-webkit-text-stroke:0.4px #ffffff;">10</div>
<div style="position:absolute;top:585.7px;font-size:18px;line-height:18px;color:#ffffff;font-weight:bold;font-style:normal;white-space:nowrap;font-family:'Liberation Sans',sans-serif;letter-spacing:0.6px;right:1323.0px;margin-right:-0.6px;-webkit-text-stroke:0.4px #ffffff;">14</div>
<div style="position:absolute;top:585.7px;font-size:18px;line-height:18px;color:#ffffff;font-weight:bold;font-style:normal;white-space:nowrap;font-family:'Liberation Sans',sans-serif;letter-spacing:0.6px;right:1185.0px;margin-right:-0.6px;-webkit-text-stroke:0.4px #ffffff;">19</div>
<div style="position:absolute;top:585.7px;font-size:18px;line-height:18px;color:#ffffff;font-weight:bold;font-style:normal;white-space:nowrap;font-family:'Liberation Sans',sans-serif;letter-spacing:0.6px;right:1047.0px;margin-right:-0.6px;-webkit-text-stroke:0.4px #ffffff;">23</div>
<div style="position:absolute;top:585.7px;font-size:18px;line-height:18px;color:#ffffff;font-weight:bold;font-style:normal;white-space:nowrap;font-family:'Liberation Sans',sans-serif;letter-spacing:0.6px;right:909.0px;margin-right:-0.6px;-webkit-text-stroke:0.4px #ffffff;">27</div>
<div style="position:absolute;top:585.7px;font-size:18px;line-height:18px;color:#ffffff;font-weight:bold;font-style:normal;white-space:nowrap;font-family:'Liberation Sans',sans-serif;letter-spacing:0.6px;right:771.0px;margin-right:-0.6px;-webkit-text-stroke:0.4px #ffffff;">30</div>
<div style="position:absolute;top:585.7px;font-size:18px;line-height:18px;color:#ffffff;font-weight:bold;font-style:normal;white-space:nowrap;font-family:'Liberation Sans',sans-serif;letter-spacing:0.6px;right:632.5px;margin-right:-0.6px;-webkit-text-stroke:0.4px #ffffff;">32</div>
<div style="position:absolute;top:585.7px;font-size:18px;line-height:18px;color:#ffffff;font-weight:bold;font-style:normal;white-space:nowrap;font-family:'Liberation Sans',sans-serif;letter-spacing:0.6px;right:495.0px;margin-right:-0.6px;-webkit-text-stroke:0.4px #ffffff;">34</div>
<div style="position:absolute;top:585.7px;font-size:18px;line-height:18px;color:#ffffff;font-weight:bold;font-style:normal;white-space:nowrap;font-family:'Liberation Sans',sans-serif;letter-spacing:0.6px;right:357.0px;margin-right:-0.6px;-webkit-text-stroke:0.4px #ffffff;">37</div>
<div style="position:absolute;top:585.7px;font-size:18px;line-height:18px;color:#ffffff;font-weight:bold;font-style:normal;white-space:nowrap;font-family:'Liberation Sans',sans-serif;letter-spacing:0.6px;right:219.0px;margin-right:-0.6px;-webkit-text-stroke:0.4px #ffffff;">39</div>
<div style="position:absolute;top:585.7px;font-size:18px;line-height:18px;color:#ffffff;font-weight:bold;font-style:normal;white-space:nowrap;font-family:'Liberation Sans',sans-serif;letter-spacing:0.6px;right:81.0px;margin-right:-0.6px;-webkit-text-stroke:0.4px #ffffff;">41</div>
<div style="position:absolute;top:611.8px;font-size:17px;line-height:17px;color:#111111;font-weight:normal;font-style:italic;white-space:nowrap;font-family:'Liberation Sans',sans-serif;letter-spacing:0.55px;left:94.0px;">Gross Margin %</div>
<div style="position:absolute;top:611.8px;font-size:17px;line-height:17px;color:#111111;font-weight:normal;font-style:italic;white-space:nowrap;font-family:'Liberation Sans',sans-serif;letter-spacing:1.0px;right:2249.0px;margin-right:-1.0px;">94%</div>
<div style="position:absolute;top:611.8px;font-size:17px;line-height:17px;color:#111111;font-weight:normal;font-style:italic;white-space:nowrap;font-family:'Liberation Sans',sans-serif;letter-spacing:1.0px;right:2129.0px;margin-right:-1.0px;">94%</div>
<div style="position:absolute;top:611.8px;font-size:17px;line-height:17px;color:#111111;font-weight:normal;font-style:italic;white-space:nowrap;font-family:'Liberation Sans',sans-serif;letter-spacing:1.0px;right:2009.0px;margin-right:-1.0px;">94%</div>
<div style="position:absolute;top:611.8px;font-size:17px;line-height:17px;color:#111111;font-weight:normal;font-style:italic;white-space:nowrap;font-family:'Liberation Sans',sans-serif;letter-spacing:1.0px;right:1888.5px;margin-right:-1.0px;">94%</div>
<div style="position:absolute;top:611.8px;font-size:17px;line-height:17px;color:#111111;font-weight:normal;font-style:italic;white-space:nowrap;font-family:'Liberation Sans',sans-serif;letter-spacing:1.0px;right:1768.0px;margin-right:-1.0px;">95%</div>
<div style="position:absolute;top:611.8px;font-size:17px;line-height:17px;color:#111111;font-weight:normal;font-style:italic;white-space:nowrap;font-family:'Liberation Sans',sans-serif;letter-spacing:1.0px;right:1600.0px;margin-right:-1.0px;">94%</div>
<div style="position:absolute;top:611.8px;font-size:17px;line-height:17px;color:#111111;font-weight:normal;font-style:italic;white-space:nowrap;font-family:'Liberation Sans',sans-serif;letter-spacing:1.0px;right:1462.0px;margin-right:-1.0px;">94%</div>
<div style="position:absolute;top:611.8px;font-size:17px;line-height:17px;color:#111111;font-weight:normal;font-style:italic;white-space:nowrap;font-family:'Liberation Sans',sans-serif;letter-spacing:1.0px;right:1324.0px;margin-right:-1.0px;">94%</div>
<div style="position:absolute;top:611.8px;font-size:17px;line-height:17px;color:#111111;font-weight:normal;font-style:italic;white-space:nowrap;font-family:'Liberation Sans',sans-serif;letter-spacing:1.0px;right:1186.0px;margin-right:-1.0px;">94%</div>
<div style="position:absolute;top:611.8px;font-size:17px;line-height:17px;color:#111111;font-weight:normal;font-style:italic;white-space:nowrap;font-family:'Liberation Sans',sans-serif;letter-spacing:1.0px;right:1048.0px;margin-right:-1.0px;">94%</div>
<div style="position:absolute;top:611.8px;font-size:17px;line-height:17px;color:#111111;font-weight:normal;font-style:italic;white-space:nowrap;font-family:'Liberation Sans',sans-serif;letter-spacing:1.0px;right:910.0px;margin-right:-1.0px;">94%</div>
<div style="position:absolute;top:611.8px;font-size:17px;line-height:17px;color:#111111;font-weight:normal;font-style:italic;white-space:nowrap;font-family:'Liberation Sans',sans-serif;letter-spacing:1.0px;right:772.0px;margin-right:-1.0px;">94%</div>
<div style="position:absolute;top:611.8px;font-size:17px;line-height:17px;color:#111111;font-weight:normal;font-style:italic;white-space:nowrap;font-family:'Liberation Sans',sans-serif;letter-spacing:1.0px;right:633.5px;margin-right:-1.0px;">94%</div>
<div style="position:absolute;top:611.8px;font-size:17px;line-height:17px;color:#111111;font-weight:normal;font-style:italic;white-space:nowrap;font-family:'Liberation Sans',sans-serif;letter-spacing:1.0px;right:496.0px;margin-right:-1.0px;">94%</div>
<div style="position:absolute;top:611.8px;font-size:17px;line-height:17px;color:#111111;font-weight:normal;font-style:italic;white-space:nowrap;font-family:'Liberation Sans',sans-serif;letter-spacing:1.0px;right:358.0px;margin-right:-1.0px;">94%</div>
<div style="position:absolute;top:611.8px;font-size:17px;line-height:17px;color:#111111;font-weight:normal;font-style:italic;white-space:nowrap;font-family:'Liberation Sans',sans-serif;letter-spacing:1.0px;right:220.0px;margin-right:-1.0px;">94%</div>
<div style="position:absolute;top:611.8px;font-size:17px;line-height:17px;color:#111111;font-weight:normal;font-style:italic;white-space:nowrap;font-family:'Liberation Sans',sans-serif;letter-spacing:1.0px;right:82.0px;margin-right:-1.0px;">94%</div>
<div style="position:absolute;top:634.8px;font-size:17px;line-height:17px;color:#111111;font-weight:normal;font-style:normal;white-space:nowrap;font-family:'Liberation Sans',sans-serif;letter-spacing:0.35px;left:75.5px;">Variable Expenses</div>
<div style="position:absolute;top:634.3px;font-size:17.5px;line-height:17.5px;color:#111111;font-weight:normal;font-style:normal;white-space:nowrap;font-family:'Liberation Sans',sans-serif;letter-spacing:0.2px;right:2240.5px;margin-right:-0.2px;">(237)</div>
<div style="position:absolute;top:634.3px;font-size:17.5px;line-height:17.5px;color:#111111;font-weight:normal;font-style:normal;white-space:nowrap;font-family:'Liberation Sans',sans-serif;letter-spacing:0.2px;right:2120.5px;margin-right:-0.2px;">(520)</div>
<div style="position:absolute;top:634.3px;font-size:17.5px;line-height:17.5px;color:#111111;font-weight:normal;font-style:normal;white-space:nowrap;font-family:'Liberation Sans',sans-serif;letter-spacing:0.2px;right:2000.5px;margin-right:-0.2px;">(942)</div>
<div style="position:absolute;top:634.3px;font-size:17.5px;line-height:17.5px;color:#111111;font-weight:normal;font-style:normal;white-space:nowrap;font-family:'Liberation Sans',sans-serif;letter-spacing:0.2px;right:1880.0px;margin-right:-0.2px;">(1,518)</div>
<div style="position:absolute;top:634.3px;font-size:17.5px;line-height:17.5px;color:#111111;font-weight:normal;font-style:normal;white-space:nowrap;font-family:'Liberation Sans',sans-serif;letter-spacing:0.2px;right:1759.5px;margin-right:-0.2px;">(2,199)</div>
<div style="position:absolute;top:634.3px;font-size:17.5px;line-height:17.5px;color:#111111;font-weight:normal;font-style:normal;white-space:nowrap;font-family:'Liberation Sans',sans-serif;letter-spacing:0.2px;right:1591.5px;margin-right:-0.2px;">(17)</div>
<div style="position:absolute;top:634.3px;font-size:17.5px;line-height:17.5px;color:#111111;font-weight:normal;font-style:normal;white-space:nowrap;font-family:'Liberation Sans',sans-serif;letter-spacing:0.2px;right:1453.5px;margin-right:-0.2px;">(18)</div>
<div style="position:absolute;top:634.3px;font-size:17.5px;line-height:17.5px;color:#111111;font-weight:normal;font-style:normal;white-space:nowrap;font-family:'Liberation Sans',sans-serif;letter-spacing:0.2px;right:1315.5px;margin-right:-0.2px;">(18)</div>
<div style="position:absolute;top:634.3px;font-size:17.5px;line-height:17.5px;color:#111111;font-weight:normal;font-style:normal;white-space:nowrap;font-family:'Liberation Sans',sans-serif;letter-spacing:0.2px;right:1177.5px;margin-right:-0.2px;">(19)</div>
<div style="position:absolute;top:634.3px;font-size:17.5px;line-height:17.5px;color:#111111;font-weight:normal;font-style:normal;white-space:nowrap;font-family:'Liberation Sans',sans-serif;letter-spacing:0.2px;right:1039.5px;margin-right:-0.2px;">(19)</div>
<div style="position:absolute;top:634.3px;font-size:17.5px;line-height:17.5px;color:#111111;font-weight:normal;font-style:normal;white-space:nowrap;font-family:'Liberation Sans',sans-serif;letter-spacing:0.2px;right:901.5px;margin-right:-0.2px;">(20)</div>
<div style="position:absolute;top:634.3px;font-size:17.5px;line-height:17.5px;color:#111111;font-weight:normal;font-style:normal;white-space:nowrap;font-family:'Liberation Sans',sans-serif;letter-spacing:0.2px;right:763.5px;margin-right:-0.2px;">(20)</div>
<div style="position:absolute;top:634.3px;font-size:17.5px;line-height:17.5px;color:#111111;font-weight:normal;font-style:normal;white-space:nowrap;font-family:'Liberation Sans',sans-serif;letter-spacing:0.2px;right:625.0px;margin-right:-0.2px;">(20)</div>
<div style="position:absolute;top:634.3px;font-size:17.5px;line-height:17.5px;color:#111111;font-weight:normal;font-style:normal;white-space:nowrap;font-family:'Liberation Sans',sans-serif;letter-spacing:0.2px;right:487.5px;margin-right:-0.2px;">(21)</div>
<div style="position:absolute;top:634.3px;font-size:17.5px;line-height:17.5px;color:#111111;font-weight:normal;font-style:normal;white-space:nowrap;font-family:'Liberation Sans',sans-serif;letter-spacing:0.2px;right:349.5px;margin-right:-0.2px;">(21)</div>
<div style="position:absolute;top:634.3px;font-size:17.5px;line-height:17.5px;color:#111111;font-weight:normal;font-style:normal;white-space:nowrap;font-family:'Liberation Sans',sans-serif;letter-spacing:0.2px;right:211.5px;margin-right:-0.2px;">(21)</div>
<div style="position:absolute;top:634.3px;font-size:17.5px;line-height:17.5px;color:#111111;font-weight:normal;font-style:normal;white-space:nowrap;font-family:'Liberation Sans',sans-serif;letter-spacing:0.2px;right:73.5px;margin-right:-0.2px;">(22)</div>
<div style="position:absolute;top:657.8px;font-size:17px;line-height:17px;color:#111111;font-weight:normal;font-style:italic;white-space:nowrap;font-family:'Liberation Sans',sans-serif;letter-spacing:0.55px;left:94.0px;">% of Revenue</div>
<div style="position:absolute;top:657.8px;font-size:17px;line-height:17px;color:#111111;font-weight:normal;font-style:italic;white-space:nowrap;font-family:'Liberation Sans',sans-serif;letter-spacing:1.0px;right:2241.2px;margin-right:-1.0px;">(71%)</div>
<div style="position:absolute;top:657.8px;font-size:17px;line-height:17px;color:#111111;font-weight:normal;font-style:italic;white-space:nowrap;font-family:'Liberation Sans',sans-serif;letter-spacing:1.0px;right:2121.2px;margin-right:-1.0px;">(45%)</div>
<div style="position:absolute;top:657.8px;font-size:17px;line-height:17px;color:#111111;font-weight:normal;font-style:italic;white-space:nowrap;font-family:'Liberation Sans',sans-serif;letter-spacing:1.0px;right:2001.2px;margin-right:-1.0px;">(34%)</div>
<div style="position:absolute;top:657.8px;font-size:17px;line-height:17px;color:#111111;font-weight:normal;font-style:italic;white-space:nowrap;font-family:'Liberation Sans',sans-serif;letter-spacing:1.0px;right:1880.7px;margin-right:-1.0px;">(28%)</div>
<div style="position:absolute;top:657.8px;font-size:17px;line-height:17px;color:#111111;font-weight:normal;font-style:italic;white-space:nowrap;font-family:'Liberation Sans',sans-serif;letter-spacing:1.0px;right:1760.2px;margin-right:-1.0px;">(23%)</div>
<div style="position:absolute;top:657.8px;font-size:17px;line-height:17px;color:#111111;font-weight:normal;font-style:italic;white-space:nowrap;font-family:'Liberation Sans',sans-serif;letter-spacing:1.0px;right:1592.2px;margin-right:-1.0px;">(286%)</div>
<div style="position:absolute;top:657.8px;font-size:17px;line-height:17px;color:#111111;font-weight:normal;font-style:italic;white-space:nowrap;font-family:'Liberation Sans',sans-serif;letter-spacing:1.0px;right:1454.2px;margin-right:-1.0px;">(167%)</div>
<div style="position:absolute;top:657.8px;font-size:17px;line-height:17px;color:#111111;font-weight:normal;font-style:italic;white-space:nowrap;font-family:'Liberation Sans',sans-serif;letter-spacing:1.0px;right:1316.2px;margin-right:-1.0px;">(119%)</div>
<div style="position:absolute;top:657.8px;font-size:17px;line-height:17px;color:#111111;font-weight:normal;font-style:italic;white-space:nowrap;font-family:'Liberation Sans',sans-serif;letter-spacing:1.0px;right:1178.2px;margin-right:-1.0px;">(94%)</div>
<div style="position:absolute;top:657.8px;font-size:17px;line-height:17px;color:#111111;font-weight:normal;font-style:italic;white-space:nowrap;font-family:'Liberation Sans',sans-serif;letter-spacing:1.0px;right:1040.2px;margin-right:-1.0px;">(78%)</div>
<div style="position:absolute;top:657.8px;font-size:17px;line-height:17px;color:#111111;font-weight:normal;font-style:italic;white-space:nowrap;font-family:'Liberation Sans',sans-serif;letter-spacing:1.0px;right:902.2px;margin-right:-1.0px;">(68%)</div>
<div style="position:absolute;top:657.8px;font-size:17px;line-height:17px;color:#111111;font-weight:normal;font-style:italic;white-space:nowrap;font-family:'Liberation Sans',sans-serif;letter-spacing:1.0px;right:764.2px;margin-right:-1.0px;">(63%)</div>
<div style="position:absolute;top:657.8px;font-size:17px;line-height:17px;color:#111111;font-weight:normal;font-style:italic;white-space:nowrap;font-family:'Liberation Sans',sans-serif;letter-spacing:1.0px;right:625.7px;margin-right:-1.0px;">(60%)</div>
<div style="position:absolute;top:657.8px;font-size:17px;line-height:17px;color:#111111;font-weight:normal;font-style:italic;white-space:nowrap;font-family:'Liberation Sans',sans-serif;letter-spacing:1.0px;right:488.2px;margin-right:-1.0px;">(56%)</div>
<div style="position:absolute;top:657.8px;font-size:17px;line-height:17px;color:#111111;font-weight:normal;font-style:italic;white-space:nowrap;font-family:'Liberation Sans',sans-serif;letter-spacing:1.0px;right:350.2px;margin-right:-1.0px;">(53%)</div>
<div style="position:absolute;top:657.8px;font-size:17px;line-height:17px;color:#111111;font-weight:normal;font-style:italic;white-space:nowrap;font-family:'Liberation Sans',sans-serif;letter-spacing:1.0px;right:212.2px;margin-right:-1.0px;">(51%)</div>
<div style="position:absolute;top:657.8px;font-size:17px;line-height:17px;color:#111111;font-weight:normal;font-style:italic;white-space:nowrap;font-family:'Liberation Sans',sans-serif;letter-spacing:1.0px;right:74.2px;margin-right:-1.0px;">(49%)</div>
<div style="position:absolute;left:71.0px;top:676.0px;width:1075.0px;height:26.3px;background:#4ab2e6;"></div>
<div style="position:absolute;left:1176.0px;top:676.0px;width:1656.0px;height:26.3px;background:#4ab2e6;"></div>
<div style="position:absolute;top:679.9px;font-size:21px;line-height:21px;color:#ffffff;font-weight:bold;font-style:normal;white-space:nowrap;font-family:'Liberation Sans',sans-serif;letter-spacing:0.2px;left:86.0px;-webkit-text-stroke:0.4px #fff;">Contribution Margin</div>
<div style="position:absolute;top:680.5px;font-size:18px;line-height:18px;color:#ffffff;font-weight:bold;font-style:normal;white-space:nowrap;font-family:'Liberation Sans',sans-serif;letter-spacing:0.6px;right:2248.0px;margin-right:-0.6px;-webkit-text-stroke:0.4px #ffffff;">76</div>
<div style="position:absolute;top:680.5px;font-size:18px;line-height:18px;color:#ffffff;font-weight:bold;font-style:normal;white-space:nowrap;font-family:'Liberation Sans',sans-serif;letter-spacing:0.6px;right:2128.0px;margin-right:-0.6px;-webkit-text-stroke:0.4px #ffffff;">577</div>
<div style="position:absolute;top:680.5px;font-size:18px;line-height:18px;color:#ffffff;font-weight:bold;font-style:normal;white-space:nowrap;font-family:'Liberation Sans',sans-serif;letter-spacing:0.6px;right:2008.0px;margin-right:-0.6px;-webkit-text-stroke:0.4px #ffffff;">1,629</div>
<div style="position:absolute;top:680.5px;font-size:18px;line-height:18px;color:#ffffff;font-weight:bold;font-style:normal;white-space:nowrap;font-family:'Liberation Sans',sans-serif;letter-spacing:0.6px;right:1887.5px;margin-right:-0.6px;-webkit-text-stroke:0.4px #ffffff;">3,656</div>
<div style="position:absolute;top:680.5px;font-size:18px;line-height:18px;color:#ffffff;font-weight:bold;font-style:normal;white-space:nowrap;font-family:'Liberation Sans',sans-serif;letter-spacing:0.6px;right:1767.0px;margin-right:-0.6px;-webkit-text-stroke:0.4px #ffffff;">7,031</div>
<div style="position:absolute;top:680.5px;font-size:18px;line-height:18px;color:#ffffff;font-weight:bold;font-style:normal;white-space:nowrap;font-family:'Liberation Sans',sans-serif;letter-spacing:0.6px;right:1591.2px;margin-right:-0.6px;-webkit-text-stroke:0.4px #ffffff;">(12)</div>
<div style="position:absolute;top:680.5px;font-size:18px;line-height:18px;color:#ffffff;font-weight:bold;font-style:normal;white-space:nowrap;font-family:'Liberation Sans',sans-serif;letter-spacing:0.6px;right:1453.2px;margin-right:-0.6px;-webkit-text-stroke:0.4px #ffffff;">(8)</div>
<div style="position:absolute;top:680.5px;font-size:18px;line-height:18px;color:#ffffff;font-weight:bold;font-style:normal;white-space:nowrap;font-family:'Liberation Sans',sans-serif;letter-spacing:0.6px;right:1315.2px;margin-right:-0.6px;-webkit-text-stroke:0.4px #ffffff;">(4)</div>
<div style="position:absolute;top:680.5px;font-size:18px;line-height:18px;color:#ffffff;font-weight:bold;font-style:normal;white-space:nowrap;font-family:'Liberation Sans',sans-serif;letter-spacing:0.6px;right:1177.2px;margin-right:-0.6px;-webkit-text-stroke:0.4px #ffffff;">(0)</div>
<div style="position:absolute;top:680.5px;font-size:18px;line-height:18px;color:#ffffff;font-weight:bold;font-style:normal;white-space:nowrap;font-family:'Liberation Sans',sans-serif;letter-spacing:0.6px;right:1047.0px;margin-right:-0.6px;-webkit-text-stroke:0.4px #ffffff;">4</div>
<div style="position:absolute;top:680.5px;font-size:18px;line-height:18px;color:#ffffff;font-weight:bold;font-style:normal;white-space:nowrap;font-family:'Liberation Sans',sans-serif;letter-spacing:0.6px;right:909.0px;margin-right:-0.6px;-webkit-text-stroke:0.4px #ffffff;">8</div>
<div style="position:absolute;top:680.5px;font-size:18px;line-height:18px;color:#ffffff;font-weight:bold;font-style:normal;white-space:nowrap;font-family:'Liberation Sans',sans-serif;letter-spacing:0.6px;right:771.0px;margin-right:-0.6px;-webkit-text-stroke:0.4px #ffffff;">10</div>
<div style="position:absolute;top:680.5px;font-size:18px;line-height:18px;color:#ffffff;font-weight:bold;font-style:normal;white-space:nowrap;font-family:'Liberation Sans',sans-serif;letter-spacing:0.6px;right:632.5px;margin-right:-0.6px;-webkit-text-stroke:0.4px #ffffff;">12</div>
<div style="position:absolute;top:680.5px;font-size:18px;line-height:18px;color:#ffffff;font-weight:bold;font-style:normal;white-space:nowrap;font-family:'Liberation Sans',sans-serif;letter-spacing:0.6px;right:495.0px;margin-right:-0.6px;-webkit-text-stroke:0.4px #ffffff;">14</div>
<div style="position:absolute;top:680.5px;font-size:18px;line-height:18px;color:#ffffff;font-weight:bold;font-style:normal;white-space:nowrap;font-family:'Liberation Sans',sans-serif;letter-spacing:0.6px;right:357.0px;margin-right:-0.6px;-webkit-text-stroke:0.4px #ffffff;">16</div>
<div style="position:absolute;top:680.5px;font-size:18px;line-height:18px;color:#ffffff;font-weight:bold;font-style:normal;white-space:nowrap;font-family:'Liberation Sans',sans-serif;letter-spacing:0.6px;right:219.0px;margin-right:-0.6px;-webkit-text-stroke:0.4px #ffffff;">18</div>
<div style="position:absolute;top:680.5px;font-size:18px;line-height:18px;color:#ffffff;font-weight:bold;font-style:normal;white-space:nowrap;font-family:'Liberation Sans',sans-serif;letter-spacing:0.6px;right:81.0px;margin-right:-0.6px;-webkit-text-stroke:0.4px #ffffff;">20</div>
<div style="position:absolute;top:707.2px;font-size:17px;line-height:17px;color:#111111;font-weight:normal;font-style:italic;white-space:nowrap;font-family:'Liberation Sans',sans-serif;letter-spacing:0.55px;left:94.0px;">Contribution Margin %</div>
<div style="position:absolute;top:707.2px;font-size:17px;line-height:17px;color:#111111;font-weight:normal;font-style:italic;white-space:nowrap;font-family:'Liberation Sans',sans-serif;letter-spacing:1.0px;right:2249.0px;margin-right:-1.0px;">23%</div>
<div style="position:absolute;top:707.2px;font-size:17px;line-height:17px;color:#111111;font-weight:normal;font-style:italic;white-space:nowrap;font-family:'Liberation Sans',sans-serif;letter-spacing:1.0px;right:2129.0px;margin-right:-1.0px;">49%</div>
<div style="position:absolute;top:707.2px;font-size:17px;line-height:17px;color:#111111;font-weight:normal;font-style:italic;white-space:nowrap;font-family:'Liberation Sans',sans-serif;letter-spacing:1.0px;right:2009.0px;margin-right:-1.0px;">60%</div>
<div style="position:absolute;top:707.2px;font-size:17px;line-height:17px;color:#111111;font-weight:normal;font-style:italic;white-space:nowrap;font-family:'Liberation Sans',sans-serif;letter-spacing:1.0px;right:1888.5px;margin-right:-1.0px;">67%</div>
<div style="position:absolute;top:707.2px;font-size:17px;line-height:17px;color:#111111;font-weight:normal;font-style:italic;white-space:nowrap;font-family:'Liberation Sans',sans-serif;letter-spacing:1.0px;right:1768.0px;margin-right:-1.0px;">72%</div>
<div style="position:absolute;top:707.2px;font-size:17px;line-height:17px;color:#111111;font-weight:normal;font-style:italic;white-space:nowrap;font-family:'Liberation Sans',sans-serif;letter-spacing:1.0px;right:1592.2px;margin-right:-1.0px;">(193%)</div>
<div style="position:absolute;top:707.2px;font-size:17px;line-height:17px;color:#111111;font-weight:normal;font-style:italic;white-space:nowrap;font-family:'Liberation Sans',sans-serif;letter-spacing:1.0px;right:1454.2px;margin-right:-1.0px;">(73%)</div>
<div style="position:absolute;top:707.2px;font-size:17px;line-height:17px;color:#111111;font-weight:normal;font-style:italic;white-space:nowrap;font-family:'Liberation Sans',sans-serif;letter-spacing:1.0px;right:1316.2px;margin-right:-1.0px;">(26%)</div>
<div style="position:absolute;top:707.2px;font-size:17px;line-height:17px;color:#111111;font-weight:normal;font-style:italic;white-space:nowrap;font-family:'Liberation Sans',sans-serif;letter-spacing:1.0px;right:1178.2px;margin-right:-1.0px;">(1%)</div>
<div style="position:absolute;top:707.2px;font-size:17px;line-height:17px;color:#111111;font-weight:normal;font-style:italic;white-space:nowrap;font-family:'Liberation Sans',sans-serif;letter-spacing:1.0px;right:1048.0px;margin-right:-1.0px;">15%</div>
<div style="position:absolute;top:707.2px;font-size:17px;line-height:17px;color:#111111;font-weight:normal;font-style:italic;white-space:nowrap;font-family:'Liberation Sans',sans-serif;letter-spacing:1.0px;right:910.0px;margin-right:-1.0px;">26%</div>
<div style="position:absolute;top:707.2px;font-size:17px;line-height:17px;color:#111111;font-weight:normal;font-style:italic;white-space:nowrap;font-family:'Liberation Sans',sans-serif;letter-spacing:1.0px;right:772.0px;margin-right:-1.0px;">30%</div>
<div style="position:absolute;top:707.2px;font-size:17px;line-height:17px;color:#111111;font-weight:normal;font-style:italic;white-space:nowrap;font-family:'Liberation Sans',sans-serif;letter-spacing:1.0px;right:633.5px;margin-right:-1.0px;">34%</div>
<div style="position:absolute;top:707.2px;font-size:17px;line-height:17px;color:#111111;font-weight:normal;font-style:italic;white-space:nowrap;font-family:'Liberation Sans',sans-serif;letter-spacing:1.0px;right:496.0px;margin-right:-1.0px;">37%</div>
<div style="position:absolute;top:707.2px;font-size:17px;line-height:17px;color:#111111;font-weight:normal;font-style:italic;white-space:nowrap;font-family:'Liberation Sans',sans-serif;letter-spacing:1.0px;right:358.0px;margin-right:-1.0px;">40%</div>
<div style="position:absolute;top:707.2px;font-size:17px;line-height:17px;color:#111111;font-weight:normal;font-style:italic;white-space:nowrap;font-family:'Liberation Sans',sans-serif;letter-spacing:1.0px;right:220.0px;margin-right:-1.0px;">43%</div>
<div style="position:absolute;top:707.2px;font-size:17px;line-height:17px;color:#111111;font-weight:normal;font-style:italic;white-space:nowrap;font-family:'Liberation Sans',sans-serif;letter-spacing:1.0px;right:82.0px;margin-right:-1.0px;">45%</div>
<div style="position:absolute;top:729.9px;font-size:17px;line-height:17px;color:#111111;font-weight:normal;font-style:normal;white-space:nowrap;font-family:'Liberation Sans',sans-serif;letter-spacing:0.35px;left:75.5px;">Payroll Expenses</div>
<div style="position:absolute;top:729.4px;font-size:17.5px;line-height:17.5px;color:#111111;font-weight:normal;font-style:normal;white-space:nowrap;font-family:'Liberation Sans',sans-serif;letter-spacing:0.2px;right:2240.5px;margin-right:-0.2px;">(393)</div>
<div style="position:absolute;top:729.4px;font-size:17.5px;line-height:17.5px;color:#111111;font-weight:normal;font-style:normal;white-space:nowrap;font-family:'Liberation Sans',sans-serif;letter-spacing:0.2px;right:2120.5px;margin-right:-0.2px;">(625)</div>
<div style="position:absolute;top:729.4px;font-size:17.5px;line-height:17.5px;color:#111111;font-weight:normal;font-style:normal;white-space:nowrap;font-family:'Liberation Sans',sans-serif;letter-spacing:0.2px;right:2000.5px;margin-right:-0.2px;">(847)</div>
<div style="position:absolute;top:729.4px;font-size:17.5px;line-height:17.5px;color:#111111;font-weight:normal;font-style:normal;white-space:nowrap;font-family:'Liberation Sans',sans-serif;letter-spacing:0.2px;right:1880.0px;margin-right:-0.2px;">(915)</div>
<div style="position:absolute;top:729.4px;font-size:17.5px;line-height:17.5px;color:#111111;font-weight:normal;font-style:normal;white-space:nowrap;font-family:'Liberation Sans',sans-serif;letter-spacing:0.2px;right:1759.5px;margin-right:-0.2px;">(942)</div>
<div style="position:absolute;top:729.4px;font-size:17.5px;line-height:17.5px;color:#111111;font-weight:normal;font-style:normal;white-space:nowrap;font-family:'Liberation Sans',sans-serif;letter-spacing:0.2px;right:1591.5px;margin-right:-0.2px;">(33)</div>
<div style="position:absolute;top:729.4px;font-size:17.5px;line-height:17.5px;color:#111111;font-weight:normal;font-style:normal;white-space:nowrap;font-family:'Liberation Sans',sans-serif;letter-spacing:0.2px;right:1453.5px;margin-right:-0.2px;">(33)</div>
<div style="position:absolute;top:729.4px;font-size:17.5px;line-height:17.5px;color:#111111;font-weight:normal;font-style:normal;white-space:nowrap;font-family:'Liberation Sans',sans-serif;letter-spacing:0.2px;right:1315.5px;margin-right:-0.2px;">(33)</div>
<div style="position:absolute;top:729.4px;font-size:17.5px;line-height:17.5px;color:#111111;font-weight:normal;font-style:normal;white-space:nowrap;font-family:'Liberation Sans',sans-serif;letter-spacing:0.2px;right:1177.5px;margin-right:-0.2px;">(33)</div>
<div style="position:absolute;top:729.4px;font-size:17.5px;line-height:17.5px;color:#111111;font-weight:normal;font-style:normal;white-space:nowrap;font-family:'Liberation Sans',sans-serif;letter-spacing:0.2px;right:1039.5px;margin-right:-0.2px;">(33)</div>
<div style="position:absolute;top:729.4px;font-size:17.5px;line-height:17.5px;color:#111111;font-weight:normal;font-style:normal;white-space:nowrap;font-family:'Liberation Sans',sans-serif;letter-spacing:0.2px;right:901.5px;margin-right:-0.2px;">(33)</div>
<div style="position:absolute;top:729.4px;font-size:17.5px;line-height:17.5px;color:#111111;font-weight:normal;font-style:normal;white-space:nowrap;font-family:'Liberation Sans',sans-serif;letter-spacing:0.2px;right:763.5px;margin-right:-0.2px;">(33)</div>
<div style="position:absolute;top:729.4px;font-size:17.5px;line-height:17.5px;color:#111111;font-weight:normal;font-style:normal;white-space:nowrap;font-family:'Liberation Sans',sans-serif;letter-spacing:0.2px;right:625.0px;margin-right:-0.2px;">(33)</div>
<div style="position:absolute;top:729.4px;font-size:17.5px;line-height:17.5px;color:#111111;font-weight:normal;font-style:normal;white-space:nowrap;font-family:'Liberation Sans',sans-serif;letter-spacing:0.2px;right:487.5px;margin-right:-0.2px;">(33)</div>
<div style="position:absolute;top:729.4px;font-size:17.5px;line-height:17.5px;color:#111111;font-weight:normal;font-style:normal;white-space:nowrap;font-family:'Liberation Sans',sans-serif;letter-spacing:0.2px;right:349.5px;margin-right:-0.2px;">(33)</div>
<div style="position:absolute;top:729.4px;font-size:17.5px;line-height:17.5px;color:#111111;font-weight:normal;font-style:normal;white-space:nowrap;font-family:'Liberation Sans',sans-serif;letter-spacing:0.2px;right:211.5px;margin-right:-0.2px;">(33)</div>
<div style="position:absolute;top:729.4px;font-size:17.5px;line-height:17.5px;color:#111111;font-weight:normal;font-style:normal;white-space:nowrap;font-family:'Liberation Sans',sans-serif;letter-spacing:0.2px;right:73.5px;margin-right:-0.2px;">(33)</div>
<div style="position:absolute;top:753.0px;font-size:17px;line-height:17px;color:#111111;font-weight:normal;font-style:italic;white-space:nowrap;font-family:'Liberation Sans',sans-serif;letter-spacing:0.55px;left:94.0px;">% of Revenue</div>
<div style="position:absolute;top:753.0px;font-size:17px;line-height:17px;color:#111111;font-weight:normal;font-style:italic;white-space:nowrap;font-family:'Liberation Sans',sans-serif;letter-spacing:1.0px;right:2241.2px;margin-right:-1.0px;">(117%)</div>
<div style="position:absolute;top:753.0px;font-size:17px;line-height:17px;color:#111111;font-weight:normal;font-style:italic;white-space:nowrap;font-family:'Liberation Sans',sans-serif;letter-spacing:1.0px;right:2121.2px;margin-right:-1.0px;">(53%)</div>
<div style="position:absolute;top:753.0px;font-size:17px;line-height:17px;color:#111111;font-weight:normal;font-style:italic;white-space:nowrap;font-family:'Liberation Sans',sans-serif;letter-spacing:1.0px;right:2001.2px;margin-right:-1.0px;">(31%)</div>
<div style="position:absolute;top:753.0px;font-size:17px;line-height:17px;color:#111111;font-weight:normal;font-style:italic;white-space:nowrap;font-family:'Liberation Sans',sans-serif;letter-spacing:1.0px;right:1880.7px;margin-right:-1.0px;">(17%)</div>
<div style="position:absolute;top:753.0px;font-size:17px;line-height:17px;color:#111111;font-weight:normal;font-style:italic;white-space:nowrap;font-family:'Liberation Sans',sans-serif;letter-spacing:1.0px;right:1760.2px;margin-right:-1.0px;">(10%)</div>
<div style="position:absolute;top:753.0px;font-size:17px;line-height:17px;color:#111111;font-weight:normal;font-style:italic;white-space:nowrap;font-family:'Liberation Sans',sans-serif;letter-spacing:1.0px;right:1592.2px;margin-right:-1.0px;">(541%)</div>
<div style="position:absolute;top:753.0px;font-size:17px;line-height:17px;color:#111111;font-weight:normal;font-style:italic;white-space:nowrap;font-family:'Liberation Sans',sans-serif;letter-spacing:1.0px;right:1454.2px;margin-right:-1.0px;">(305%)</div>
<div style="position:absolute;top:753.0px;font-size:17px;line-height:17px;color:#111111;font-weight:normal;font-style:italic;white-space:nowrap;font-family:'Liberation Sans',sans-serif;letter-spacing:1.0px;right:1316.2px;margin-right:-1.0px;">(213%)</div>
<div style="position:absolute;top:753.0px;font-size:17px;line-height:17px;color:#111111;font-weight:normal;font-style:italic;white-space:nowrap;font-family:'Liberation Sans',sans-serif;letter-spacing:1.0px;right:1178.2px;margin-right:-1.0px;">(163%)</div>
<div style="position:absolute;top:753.0px;font-size:17px;line-height:17px;color:#111111;font-weight:normal;font-style:italic;white-space:nowrap;font-family:'Liberation Sans',sans-serif;letter-spacing:1.0px;right:1040.2px;margin-right:-1.0px;">(133%)</div>
<div style="position:absolute;top:753.0px;font-size:17px;line-height:17px;color:#111111;font-weight:normal;font-style:italic;white-space:nowrap;font-family:'Liberation Sans',sans-serif;letter-spacing:1.0px;right:902.2px;margin-right:-1.0px;">(111%)</div>
<div style="position:absolute;top:753.0px;font-size:17px;line-height:17px;color:#111111;font-weight:normal;font-style:italic;white-space:nowrap;font-family:'Liberation Sans',sans-serif;letter-spacing:1.0px;right:764.2px;margin-right:-1.0px;">(103%)</div>
<div style="position:absolute;top:753.0px;font-size:17px;line-height:17px;color:#111111;font-weight:normal;font-style:italic;white-space:nowrap;font-family:'Liberation Sans',sans-serif;letter-spacing:1.0px;right:625.7px;margin-right:-1.0px;">(95%)</div>
<div style="position:absolute;top:753.0px;font-size:17px;line-height:17px;color:#111111;font-weight:normal;font-style:italic;white-space:nowrap;font-family:'Liberation Sans',sans-serif;letter-spacing:1.0px;right:488.2px;margin-right:-1.0px;">(89%)</div>
<div style="position:absolute;top:753.0px;font-size:17px;line-height:17px;color:#111111;font-weight:normal;font-style:italic;white-space:nowrap;font-family:'Liberation Sans',sans-serif;letter-spacing:1.0px;right:350.2px;margin-right:-1.0px;">(83%)</div>
<div style="position:absolute;top:753.0px;font-size:17px;line-height:17px;color:#111111;font-weight:normal;font-style:italic;white-space:nowrap;font-family:'Liberation Sans',sans-serif;letter-spacing:1.0px;right:212.2px;margin-right:-1.0px;">(78%)</div>
<div style="position:absolute;top:753.0px;font-size:17px;line-height:17px;color:#111111;font-weight:normal;font-style:italic;white-space:nowrap;font-family:'Liberation Sans',sans-serif;letter-spacing:1.0px;right:74.2px;margin-right:-1.0px;">(74%)</div>
<div style="position:absolute;top:780.6px;font-size:17px;line-height:17px;color:#111111;font-weight:normal;font-style:normal;white-space:nowrap;font-family:'Liberation Sans',sans-serif;letter-spacing:0.35px;left:75.5px;">Fixed Expenses</div>
<div style="position:absolute;top:780.2px;font-size:17.5px;line-height:17.5px;color:#111111;font-weight:normal;font-style:normal;white-space:nowrap;font-family:'Liberation Sans',sans-serif;letter-spacing:0.2px;right:2240.5px;margin-right:-0.2px;">(73)</div>
<div style="position:absolute;top:780.2px;font-size:17.5px;line-height:17.5px;color:#111111;font-weight:normal;font-style:normal;white-space:nowrap;font-family:'Liberation Sans',sans-serif;letter-spacing:0.2px;right:2120.5px;margin-right:-0.2px;">(73)</div>
<div style="position:absolute;top:780.2px;font-size:17.5px;line-height:17.5px;color:#111111;font-weight:normal;font-style:normal;white-space:nowrap;font-family:'Liberation Sans',sans-serif;letter-spacing:0.2px;right:2000.5px;margin-right:-0.2px;">(73)</div>
<div style="position:absolute;top:780.2px;font-size:17.5px;line-height:17.5px;color:#111111;font-weight:normal;font-style:normal;white-space:nowrap;font-family:'Liberation Sans',sans-serif;letter-spacing:0.2px;right:1880.0px;margin-right:-0.2px;">(73)</div>
<div style="position:absolute;top:780.2px;font-size:17.5px;line-height:17.5px;color:#111111;font-weight:normal;font-style:normal;white-space:nowrap;font-family:'Liberation Sans',sans-serif;letter-spacing:0.2px;right:1759.5px;margin-right:-0.2px;">(73)</div>
<div style="position:absolute;top:780.2px;font-size:17.5px;line-height:17.5px;color:#111111;font-weight:normal;font-style:normal;white-space:nowrap;font-family:'Liberation Sans',sans-serif;letter-spacing:0.2px;right:1591.5px;margin-right:-0.2px;">(6)</div>
<div style="position:absolute;top:780.2px;font-size:17.5px;line-height:17.5px;color:#111111;font-weight:normal;font-style:normal;white-space:nowrap;font-family:'Liberation Sans',sans-serif;letter-spacing:0.2px;right:1453.5px;margin-right:-0.2px;">(6)</div>
<div style="position:absolute;top:780.2px;font-size:17.5px;line-height:17.5px;color:#111111;font-weight:normal;font-style:normal;white-space:nowrap;font-family:'Liberation Sans',sans-serif;letter-spacing:0.2px;right:1315.5px;margin-right:-0.2px;">(6)</div>
<div style="position:absolute;top:780.2px;font-size:17.5px;line-height:17.5px;color:#111111;font-weight:normal;font-style:normal;white-space:nowrap;font-family:'Liberation Sans',sans-serif;letter-spacing:0.2px;right:1177.5px;margin-right:-0.2px;">(6)</div>
<div style="position:absolute;top:780.2px;font-size:17.5px;line-height:17.5px;color:#111111;font-weight:normal;font-style:normal;white-space:nowrap;font-family:'Liberation Sans',sans-serif;letter-spacing:0.2px;right:1039.5px;margin-right:-0.2px;">(6)</div>
<div style="position:absolute;top:780.2px;font-size:17.5px;line-height:17.5px;color:#111111;font-weight:normal;font-style:normal;white-space:nowrap;font-family:'Liberation Sans',sans-serif;letter-spacing:0.2px;right:901.5px;margin-right:-0.2px;">(6)</div>
<div style="position:absolute;top:780.2px;font-size:17.5px;line-height:17.5px;color:#111111;font-weight:normal;font-style:normal;white-space:nowrap;font-family:'Liberation Sans',sans-serif;letter-spacing:0.2px;right:763.5px;margin-right:-0.2px;">(6)</div>
<div style="position:absolute;top:780.2px;font-size:17.5px;line-height:17.5px;color:#111111;font-weight:normal;font-style:normal;white-space:nowrap;font-family:'Liberation Sans',sans-serif;letter-spacing:0.2px;right:625.0px;margin-right:-0.2px;">(6)</div>
<div style="position:absolute;top:780.2px;font-size:17.5px;line-height:17.5px;color:#111111;font-weight:normal;font-style:normal;white-space:nowrap;font-family:'Liberation Sans',sans-serif;letter-spacing:0.2px;right:487.5px;margin-right:-0.2px;">(6)</div>
<div style="position:absolute;top:780.2px;font-size:17.5px;line-height:17.5px;color:#111111;font-weight:normal;font-style:normal;white-space:nowrap;font-family:'Liberation Sans',sans-serif;letter-spacing:0.2px;right:349.5px;margin-right:-0.2px;">(6)</div>
<div style="position:absolute;top:780.2px;font-size:17.5px;line-height:17.5px;color:#111111;font-weight:normal;font-style:normal;white-space:nowrap;font-family:'Liberation Sans',sans-serif;letter-spacing:0.2px;right:211.5px;margin-right:-0.2px;">(6)</div>
<div style="position:absolute;top:780.2px;font-size:17.5px;line-height:17.5px;color:#111111;font-weight:normal;font-style:normal;white-space:nowrap;font-family:'Liberation Sans',sans-serif;letter-spacing:0.2px;right:73.5px;margin-right:-0.2px;">(6)</div>
<div style="position:absolute;top:804.0px;font-size:17px;line-height:17px;color:#111111;font-weight:normal;font-style:italic;white-space:nowrap;font-family:'Liberation Sans',sans-serif;letter-spacing:0.55px;left:94.0px;">% of Revenue</div>
<div style="position:absolute;top:804.0px;font-size:17px;line-height:17px;color:#111111;font-weight:normal;font-style:italic;white-space:nowrap;font-family:'Liberation Sans',sans-serif;letter-spacing:1.0px;right:2241.2px;margin-right:-1.0px;">(22%)</div>
<div style="position:absolute;top:804.0px;font-size:17px;line-height:17px;color:#111111;font-weight:normal;font-style:italic;white-space:nowrap;font-family:'Liberation Sans',sans-serif;letter-spacing:1.0px;right:2121.2px;margin-right:-1.0px;">(6%)</div>
<div style="position:absolute;top:804.0px;font-size:17px;line-height:17px;color:#111111;font-weight:normal;font-style:italic;white-space:nowrap;font-family:'Liberation Sans',sans-serif;letter-spacing:1.0px;right:2001.2px;margin-right:-1.0px;">(3%)</div>
<div style="position:absolute;top:804.0px;font-size:17px;line-height:17px;color:#111111;font-weight:normal;font-style:italic;white-space:nowrap;font-family:'Liberation Sans',sans-serif;letter-spacing:1.0px;right:1880.7px;margin-right:-1.0px;">(1%)</div>
<div style="position:absolute;top:804.0px;font-size:17px;line-height:17px;color:#111111;font-weight:normal;font-style:italic;white-space:nowrap;font-family:'Liberation Sans',sans-serif;letter-spacing:1.0px;right:1760.2px;margin-right:-1.0px;">(1%)</div>
<div style="position:absolute;top:804.0px;font-size:17px;line-height:17px;color:#111111;font-weight:normal;font-style:italic;white-space:nowrap;font-family:'Liberation Sans',sans-serif;letter-spacing:1.0px;right:1592.2px;margin-right:-1.0px;">(100%)</div>
<div style="position:absolute;top:804.0px;font-size:17px;line-height:17px;color:#111111;font-weight:normal;font-style:italic;white-space:nowrap;font-family:'Liberation Sans',sans-serif;letter-spacing:1.0px;right:1454.2px;margin-right:-1.0px;">(56%)</div>
<div style="position:absolute;top:804.0px;font-size:17px;line-height:17px;color:#111111;font-weight:normal;font-style:italic;white-space:nowrap;font-family:'Liberation Sans',sans-serif;letter-spacing:1.0px;right:1316.2px;margin-right:-1.0px;">(39%)</div>
<div style="position:absolute;top:804.0px;font-size:17px;line-height:17px;color:#111111;font-weight:normal;font-style:italic;white-space:nowrap;font-family:'Liberation Sans',sans-serif;letter-spacing:1.0px;right:1178.2px;margin-right:-1.0px;">(30%)</div>
<div style="position:absolute;top:804.0px;font-size:17px;line-height:17px;color:#111111;font-weight:normal;font-style:italic;white-space:nowrap;font-family:'Liberation Sans',sans-serif;letter-spacing:1.0px;right:1040.2px;margin-right:-1.0px;">(24%)</div>
<div style="position:absolute;top:804.0px;font-size:17px;line-height:17px;color:#111111;font-weight:normal;font-style:italic;white-space:nowrap;font-family:'Liberation Sans',sans-serif;letter-spacing:1.0px;right:902.2px;margin-right:-1.0px;">(21%)</div>
<div style="position:absolute;top:804.0px;font-size:17px;line-height:17px;color:#111111;font-weight:normal;font-style:italic;white-space:nowrap;font-family:'Liberation Sans',sans-serif;letter-spacing:1.0px;right:764.2px;margin-right:-1.0px;">(19%)</div>
<div style="position:absolute;top:804.0px;font-size:17px;line-height:17px;color:#111111;font-weight:normal;font-style:italic;white-space:nowrap;font-family:'Liberation Sans',sans-serif;letter-spacing:1.0px;right:625.7px;margin-right:-1.0px;">(18%)</div>
<div style="position:absolute;top:804.0px;font-size:17px;line-height:17px;color:#111111;font-weight:normal;font-style:italic;white-space:nowrap;font-family:'Liberation Sans',sans-serif;letter-spacing:1.0px;right:488.2px;margin-right:-1.0px;">(16%)</div>
<div style="position:absolute;top:804.0px;font-size:17px;line-height:17px;color:#111111;font-weight:normal;font-style:italic;white-space:nowrap;font-family:'Liberation Sans',sans-serif;letter-spacing:1.0px;right:350.2px;margin-right:-1.0px;">(15%)</div>
<div style="position:absolute;top:804.0px;font-size:17px;line-height:17px;color:#111111;font-weight:normal;font-style:italic;white-space:nowrap;font-family:'Liberation Sans',sans-serif;letter-spacing:1.0px;right:212.2px;margin-right:-1.0px;">(14%)</div>
<div style="position:absolute;top:804.0px;font-size:17px;line-height:17px;color:#111111;font-weight:normal;font-style:italic;white-space:nowrap;font-family:'Liberation Sans',sans-serif;letter-spacing:1.0px;right:74.2px;margin-right:-1.0px;">(14%)</div>
<div style="position:absolute;left:71.0px;top:827.0px;width:1075.0px;height:26.4px;background:#4ab2e6;"></div>
<div style="position:absolute;left:1176.0px;top:827.0px;width:1656.0px;height:26.4px;background:#4ab2e6;"></div>
<div style="position:absolute;top:831.0px;font-size:21px;line-height:21px;color:#ffffff;font-weight:bold;font-style:normal;white-space:nowrap;font-family:'Liberation Sans',sans-serif;letter-spacing:0.2px;left:86.0px;-webkit-text-stroke:0.4px #fff;">EBITDA</div>
<div style="position:absolute;top:831.6px;font-size:18px;line-height:18px;color:#ffffff;font-weight:bold;font-style:normal;white-space:nowrap;font-family:'Liberation Sans',sans-serif;letter-spacing:0.6px;right:2240.2px;margin-right:-0.6px;-webkit-text-stroke:0.4px #ffffff;">(389)</div>
<div style="position:absolute;top:831.6px;font-size:18px;line-height:18px;color:#ffffff;font-weight:bold;font-style:normal;white-space:nowrap;font-family:'Liberation Sans',sans-serif;letter-spacing:0.6px;right:2120.2px;margin-right:-0.6px;-webkit-text-stroke:0.4px #ffffff;">(121)</div>
<div style="position:absolute;top:831.6px;font-size:18px;line-height:18px;color:#ffffff;font-weight:bold;font-style:normal;white-space:nowrap;font-family:'Liberation Sans',sans-serif;letter-spacing:0.6px;right:2008.0px;margin-right:-0.6px;-webkit-text-stroke:0.4px #ffffff;">710</div>
<div style="position:absolute;top:831.6px;font-size:18px;line-height:18px;color:#ffffff;font-weight:bold;font-style:normal;white-space:nowrap;font-family:'Liberation Sans',sans-serif;letter-spacing:0.6px;right:1887.5px;margin-right:-0.6px;-webkit-text-stroke:0.4px #ffffff;">2,669</div>
<div style="position:absolute;top:831.6px;font-size:18px;line-height:18px;color:#ffffff;font-weight:bold;font-style:normal;white-space:nowrap;font-family:'Liberation Sans',sans-serif;letter-spacing:0.6px;right:1767.0px;margin-right:-0.6px;-webkit-text-stroke:0.4px #ffffff;">6,016</div>
<div style="position:absolute;top:831.6px;font-size:18px;line-height:18px;color:#ffffff;font-weight:bold;font-style:normal;white-space:nowrap;font-family:'Liberation Sans',sans-serif;letter-spacing:0.6px;right:1591.2px;margin-right:-0.6px;-webkit-text-stroke:0.4px #ffffff;">(50)</div>
<div style="position:absolute;top:831.6px;font-size:18px;line-height:18px;color:#ffffff;font-weight:bold;font-style:normal;white-space:nowrap;font-family:'Liberation Sans',sans-serif;letter-spacing:0.6px;right:1453.2px;margin-right:-0.6px;-webkit-text-stroke:0.4px #ffffff;">(47)</div>
<div style="position:absolute;top:831.6px;font-size:18px;line-height:18px;color:#ffffff;font-weight:bold;font-style:normal;white-space:nowrap;font-family:'Liberation Sans',sans-serif;letter-spacing:0.6px;right:1315.2px;margin-right:-0.6px;-webkit-text-stroke:0.4px #ffffff;">(43)</div>
<div style="position:absolute;top:831.6px;font-size:18px;line-height:18px;color:#ffffff;font-weight:bold;font-style:normal;white-space:nowrap;font-family:'Liberation Sans',sans-serif;letter-spacing:0.6px;right:1177.2px;margin-right:-0.6px;-webkit-text-stroke:0.4px #ffffff;">(39)</div>
<div style="position:absolute;top:831.6px;font-size:18px;line-height:18px;color:#ffffff;font-weight:bold;font-style:normal;white-space:nowrap;font-family:'Liberation Sans',sans-serif;letter-spacing:0.6px;right:1039.2px;margin-right:-0.6px;-webkit-text-stroke:0.4px #ffffff;">(35)</div>
<div style="position:absolute;top:831.6px;font-size:18px;line-height:18px;color:#ffffff;font-weight:bold;font-style:normal;white-space:nowrap;font-family:'Liberation Sans',sans-serif;letter-spacing:0.6px;right:901.2px;margin-right:-0.6px;-webkit-text-stroke:0.4px #ffffff;">(31)</div>
<div style="position:absolute;top:831.6px;font-size:18px;line-height:18px;color:#ffffff;font-weight:bold;font-style:normal;white-space:nowrap;font-family:'Liberation Sans',sans-serif;letter-spacing:0.6px;right:763.2px;margin-right:-0.6px;-webkit-text-stroke:0.4px #ffffff;">(29)</div>
<div style="position:absolute;top:831.6px;font-size:18px;line-height:18px;color:#ffffff;font-weight:bold;font-style:normal;white-space:nowrap;font-family:'Liberation Sans',sans-serif;letter-spacing:0.6px;right:624.7px;margin-right:-0.6px;-webkit-text-stroke:0.4px #ffffff;">(27)</div>
<div style="position:absolute;top:831.6px;font-size:18px;line-height:18px;color:#ffffff;font-weight:bold;font-style:normal;white-space:nowrap;font-family:'Liberation Sans',sans-serif;letter-spacing:0.6px;right:487.2px;margin-right:-0.6px;-webkit-text-stroke:0.4px #ffffff;">(25)</div>
<div style="position:absolute;top:831.6px;font-size:18px;line-height:18px;color:#ffffff;font-weight:bold;font-style:normal;white-space:nowrap;font-family:'Liberation Sans',sans-serif;letter-spacing:0.6px;right:349.2px;margin-right:-0.6px;-webkit-text-stroke:0.4px #ffffff;">(23)</div>
<div style="position:absolute;top:831.6px;font-size:18px;line-height:18px;color:#ffffff;font-weight:bold;font-style:normal;white-space:nowrap;font-family:'Liberation Sans',sans-serif;letter-spacing:0.6px;right:211.2px;margin-right:-0.6px;-webkit-text-stroke:0.4px #ffffff;">(21)</div>
<div style="position:absolute;top:831.6px;font-size:18px;line-height:18px;color:#ffffff;font-weight:bold;font-style:normal;white-space:nowrap;font-family:'Liberation Sans',sans-serif;letter-spacing:0.6px;right:73.2px;margin-right:-0.6px;-webkit-text-stroke:0.4px #ffffff;">(19)</div>
<div style="position:absolute;top:858.2px;font-size:17px;line-height:17px;color:#111111;font-weight:normal;font-style:italic;white-space:nowrap;font-family:'Liberation Sans',sans-serif;letter-spacing:0.55px;left:75.5px;">EBITDA %</div>
<div style="position:absolute;top:858.2px;font-size:17px;line-height:17px;color:#111111;font-weight:normal;font-style:italic;white-space:nowrap;font-family:'Liberation Sans',sans-serif;letter-spacing:1.0px;right:2241.2px;margin-right:-1.0px;">(116%)</div>
<div style="position:absolute;top:858.2px;font-size:17px;line-height:17px;color:#111111;font-weight:normal;font-style:italic;white-space:nowrap;font-family:'Liberation Sans',sans-serif;letter-spacing:1.0px;right:2121.2px;margin-right:-1.0px;">(10%)</div>
<div style="position:absolute;top:858.2px;font-size:17px;line-height:17px;color:#111111;font-weight:normal;font-style:italic;white-space:nowrap;font-family:'Liberation Sans',sans-serif;letter-spacing:1.0px;right:2009.0px;margin-right:-1.0px;">26%</div>
<div style="position:absolute;top:858.2px;font-size:17px;line-height:17px;color:#111111;font-weight:normal;font-style:italic;white-space:nowrap;font-family:'Liberation Sans',sans-serif;letter-spacing:1.0px;right:1888.5px;margin-right:-1.0px;">49%</div>
<div style="position:absolute;top:858.2px;font-size:17px;line-height:17px;color:#111111;font-weight:normal;font-style:italic;white-space:nowrap;font-family:'Liberation Sans',sans-serif;letter-spacing:1.0px;right:1768.0px;margin-right:-1.0px;">62%</div>
<div style="position:absolute;top:858.2px;font-size:17px;line-height:17px;color:#111111;font-weight:normal;font-style:italic;white-space:nowrap;font-family:'Liberation Sans',sans-serif;letter-spacing:1.0px;right:1592.2px;margin-right:-1.0px;">(833%)</div>
<div style="position:absolute;top:858.2px;font-size:17px;line-height:17px;color:#111111;font-weight:normal;font-style:italic;white-space:nowrap;font-family:'Liberation Sans',sans-serif;letter-spacing:1.0px;right:1454.2px;margin-right:-1.0px;">(435%)</div>
<div style="position:absolute;top:858.2px;font-size:17px;line-height:17px;color:#111111;font-weight:normal;font-style:italic;white-space:nowrap;font-family:'Liberation Sans',sans-serif;letter-spacing:1.0px;right:1316.2px;margin-right:-1.0px;">(278%)</div>
<div style="position:absolute;top:858.2px;font-size:17px;line-height:17px;color:#111111;font-weight:normal;font-style:italic;white-space:nowrap;font-family:'Liberation Sans',sans-serif;letter-spacing:1.0px;right:1178.2px;margin-right:-1.0px;">(194%)</div>
<div style="position:absolute;top:858.2px;font-size:17px;line-height:17px;color:#111111;font-weight:normal;font-style:italic;white-space:nowrap;font-family:'Liberation Sans',sans-serif;letter-spacing:1.0px;right:1040.2px;margin-right:-1.0px;">(142%)</div>
<div style="position:absolute;top:858.2px;font-size:17px;line-height:17px;color:#111111;font-weight:normal;font-style:italic;white-space:nowrap;font-family:'Liberation Sans',sans-serif;letter-spacing:1.0px;right:902.2px;margin-right:-1.0px;">(106%)</div>
<div style="position:absolute;top:858.2px;font-size:17px;line-height:17px;color:#111111;font-weight:normal;font-style:italic;white-space:nowrap;font-family:'Liberation Sans',sans-serif;letter-spacing:1.0px;right:764.2px;margin-right:-1.0px;">(92%)</div>
<div style="position:absolute;top:858.2px;font-size:17px;line-height:17px;color:#111111;font-weight:normal;font-style:italic;white-space:nowrap;font-family:'Liberation Sans',sans-serif;letter-spacing:1.0px;right:625.7px;margin-right:-1.0px;">(79%)</div>
<div style="position:absolute;top:858.2px;font-size:17px;line-height:17px;color:#111111;font-weight:normal;font-style:italic;white-space:nowrap;font-family:'Liberation Sans',sans-serif;letter-spacing:1.0px;right:488.2px;margin-right:-1.0px;">(68%)</div>
<div style="position:absolute;top:858.2px;font-size:17px;line-height:17px;color:#111111;font-weight:normal;font-style:italic;white-space:nowrap;font-family:'Liberation Sans',sans-serif;letter-spacing:1.0px;right:350.2px;margin-right:-1.0px;">(58%)</div>
<div style="position:absolute;top:858.2px;font-size:17px;line-height:17px;color:#111111;font-weight:normal;font-style:italic;white-space:nowrap;font-family:'Liberation Sans',sans-serif;letter-spacing:1.0px;right:212.2px;margin-right:-1.0px;">(50%)</div>
<div style="position:absolute;top:858.2px;font-size:17px;line-height:17px;color:#111111;font-weight:normal;font-style:italic;white-space:nowrap;font-family:'Liberation Sans',sans-serif;letter-spacing:1.0px;right:74.2px;margin-right:-1.0px;">(42%)</div>
<div style="position:absolute;top:881.2px;font-size:17px;line-height:17px;color:#111111;font-weight:normal;font-style:normal;white-space:nowrap;font-family:'Liberation Sans',sans-serif;letter-spacing:0.35px;left:75.5px;">Depreciation &amp; Amortization</div>
<div style="position:absolute;top:880.8px;font-size:17.5px;line-height:17.5px;color:#111111;font-weight:normal;font-style:normal;white-space:nowrap;font-family:'Liberation Sans',sans-serif;letter-spacing:0.2px;right:2240.5px;margin-right:-0.2px;">(11)</div>
<div style="position:absolute;top:880.8px;font-size:17.5px;line-height:17.5px;color:#111111;font-weight:normal;font-style:normal;white-space:nowrap;font-family:'Liberation Sans',sans-serif;letter-spacing:0.2px;right:2120.5px;margin-right:-0.2px;">(13)</div>
<div style="position:absolute;top:880.8px;font-size:17.5px;line-height:17.5px;color:#111111;font-weight:normal;font-style:normal;white-space:nowrap;font-family:'Liberation Sans',sans-serif;letter-spacing:0.2px;right:2000.5px;margin-right:-0.2px;">(13)</div>
<div style="position:absolute;top:880.8px;font-size:17.5px;line-height:17.5px;color:#111111;font-weight:normal;font-style:normal;white-space:nowrap;font-family:'Liberation Sans',sans-serif;letter-spacing:0.2px;right:1880.0px;margin-right:-0.2px;">(13)</div>
<div style="position:absolute;top:880.8px;font-size:17.5px;line-height:17.5px;color:#111111;font-weight:normal;font-style:normal;white-space:nowrap;font-family:'Liberation Sans',sans-serif;letter-spacing:0.2px;right:1759.5px;margin-right:-0.2px;">(13)</div>
<div style="position:absolute;top:880.8px;font-size:17.5px;line-height:17.5px;color:#111111;font-weight:normal;font-style:normal;white-space:nowrap;font-family:'Liberation Sans',sans-serif;letter-spacing:0.2px;right:1591.5px;margin-right:-0.2px;">(0)</div>
<div style="position:absolute;top:880.8px;font-size:17.5px;line-height:17.5px;color:#111111;font-weight:normal;font-style:normal;white-space:nowrap;font-family:'Liberation Sans',sans-serif;letter-spacing:0.2px;right:1453.5px;margin-right:-0.2px;">(0)</div>
<div style="position:absolute;top:880.8px;font-size:17.5px;line-height:17.5px;color:#111111;font-weight:normal;font-style:normal;white-space:nowrap;font-family:'Liberation Sans',sans-serif;letter-spacing:0.2px;right:1315.5px;margin-right:-0.2px;">(1)</div>
<div style="position:absolute;top:880.8px;font-size:17.5px;line-height:17.5px;color:#111111;font-weight:normal;font-style:normal;white-space:nowrap;font-family:'Liberation Sans',sans-serif;letter-spacing:0.2px;right:1177.5px;margin-right:-0.2px;">(1)</div>
<div style="position:absolute;top:880.8px;font-size:17.5px;line-height:17.5px;color:#111111;font-weight:normal;font-style:normal;white-space:nowrap;font-family:'Liberation Sans',sans-serif;letter-spacing:0.2px;right:1039.5px;margin-right:-0.2px;">(1)</div>
<div style="position:absolute;top:880.8px;font-size:17.5px;line-height:17.5px;color:#111111;font-weight:normal;font-style:normal;white-space:nowrap;font-family:'Liberation Sans',sans-serif;letter-spacing:0.2px;right:901.5px;margin-right:-0.2px;">(1)</div>
<div style="position:absolute;top:880.8px;font-size:17.5px;line-height:17.5px;color:#111111;font-weight:normal;font-style:normal;white-space:nowrap;font-family:'Liberation Sans',sans-serif;letter-spacing:0.2px;right:763.5px;margin-right:-0.2px;">(1)</div>
<div style="position:absolute;top:880.8px;font-size:17.5px;line-height:17.5px;color:#111111;font-weight:normal;font-style:normal;white-space:nowrap;font-family:'Liberation Sans',sans-serif;letter-spacing:0.2px;right:625.0px;margin-right:-0.2px;">(1)</div>
<div style="position:absolute;top:880.8px;font-size:17.5px;line-height:17.5px;color:#111111;font-weight:normal;font-style:normal;white-space:nowrap;font-family:'Liberation Sans',sans-serif;letter-spacing:0.2px;right:487.5px;margin-right:-0.2px;">(1)</div>
<div style="position:absolute;top:880.8px;font-size:17.5px;line-height:17.5px;color:#111111;font-weight:normal;font-style:normal;white-space:nowrap;font-family:'Liberation Sans',sans-serif;letter-spacing:0.2px;right:349.5px;margin-right:-0.2px;">(1)</div>
<div style="position:absolute;top:880.8px;font-size:17.5px;line-height:17.5px;color:#111111;font-weight:normal;font-style:normal;white-space:nowrap;font-family:'Liberation Sans',sans-serif;letter-spacing:0.2px;right:211.5px;margin-right:-0.2px;">(1)</div>
<div style="position:absolute;top:880.8px;font-size:17.5px;line-height:17.5px;color:#111111;font-weight:normal;font-style:normal;white-space:nowrap;font-family:'Liberation Sans',sans-serif;letter-spacing:0.2px;right:73.5px;margin-right:-0.2px;">(1)</div>
<div style="position:absolute;top:904.4px;font-size:17px;line-height:17px;color:#111111;font-weight:normal;font-style:normal;white-space:nowrap;font-family:'Liberation Sans',sans-serif;letter-spacing:0.35px;left:75.5px;">EBIT</div>
<div style="position:absolute;top:903.9px;font-size:17.5px;line-height:17.5px;color:#111111;font-weight:normal;font-style:normal;white-space:nowrap;font-family:'Liberation Sans',sans-serif;letter-spacing:0.2px;right:2240.5px;margin-right:-0.2px;">(400)</div>
<div style="position:absolute;top:903.9px;font-size:17.5px;line-height:17.5px;color:#111111;font-weight:normal;font-style:normal;white-space:nowrap;font-family:'Liberation Sans',sans-serif;letter-spacing:0.2px;right:2120.5px;margin-right:-0.2px;">(134)</div>
<div style="position:absolute;top:903.9px;font-size:17.5px;line-height:17.5px;color:#111111;font-weight:normal;font-style:normal;white-space:nowrap;font-family:'Liberation Sans',sans-serif;letter-spacing:0.2px;right:2007.5px;margin-right:-0.2px;">696</div>
<div style="position:absolute;top:903.9px;font-size:17.5px;line-height:17.5px;color:#111111;font-weight:normal;font-style:normal;white-space:nowrap;font-family:'Liberation Sans',sans-serif;letter-spacing:0.2px;right:1887.0px;margin-right:-0.2px;">2,655</div>
<div style="position:absolute;top:903.9px;font-size:17.5px;line-height:17.5px;color:#111111;font-weight:normal;font-style:normal;white-space:nowrap;font-family:'Liberation Sans',sans-serif;letter-spacing:0.2px;right:1766.5px;margin-right:-0.2px;">6,003</div>
<div style="position:absolute;top:903.9px;font-size:17.5px;line-height:17.5px;color:#111111;font-weight:normal;font-style:normal;white-space:nowrap;font-family:'Liberation Sans',sans-serif;letter-spacing:0.2px;right:1591.5px;margin-right:-0.2px;">(51)</div>
<div style="position:absolute;top:903.9px;font-size:17.5px;line-height:17.5px;color:#111111;font-weight:normal;font-style:normal;white-space:nowrap;font-family:'Liberation Sans',sans-serif;letter-spacing:0.2px;right:1453.5px;margin-right:-0.2px;">(47)</div>
<div style="position:absolute;top:903.9px;font-size:17.5px;line-height:17.5px;color:#111111;font-weight:normal;font-style:normal;white-space:nowrap;font-family:'Liberation Sans',sans-serif;letter-spacing:0.2px;right:1315.5px;margin-right:-0.2px;">(43)</div>
<div style="position:absolute;top:903.9px;font-size:17.5px;line-height:17.5px;color:#111111;font-weight:normal;font-style:normal;white-space:nowrap;font-family:'Liberation Sans',sans-serif;letter-spacing:0.2px;right:1177.5px;margin-right:-0.2px;">(40)</div>
<div style="position:absolute;top:903.9px;font-size:17.5px;line-height:17.5px;color:#111111;font-weight:normal;font-style:normal;white-space:nowrap;font-family:'Liberation Sans',sans-serif;letter-spacing:0.2px;right:1039.5px;margin-right:-0.2px;">(36)</div>
<div style="position:absolute;top:903.9px;font-size:17.5px;line-height:17.5px;color:#111111;font-weight:normal;font-style:normal;white-space:nowrap;font-family:'Liberation Sans',sans-serif;letter-spacing:0.2px;right:901.5px;margin-right:-0.2px;">(32)</div>
<div style="position:absolute;top:903.9px;font-size:17.5px;line-height:17.5px;color:#111111;font-weight:normal;font-style:normal;white-space:nowrap;font-family:'Liberation Sans',sans-serif;letter-spacing:0.2px;right:763.5px;margin-right:-0.2px;">(30)</div>
<div style="position:absolute;top:903.9px;font-size:17.5px;line-height:17.5px;color:#111111;font-weight:normal;font-style:normal;white-space:nowrap;font-family:'Liberation Sans',sans-serif;letter-spacing:0.2px;right:625.0px;margin-right:-0.2px;">(28)</div>
<div style="position:absolute;top:903.9px;font-size:17.5px;line-height:17.5px;color:#111111;font-weight:normal;font-style:normal;white-space:nowrap;font-family:'Liberation Sans',sans-serif;letter-spacing:0.2px;right:487.5px;margin-right:-0.2px;">(26)</div>
<div style="position:absolute;top:903.9px;font-size:17.5px;line-height:17.5px;color:#111111;font-weight:normal;font-style:normal;white-space:nowrap;font-family:'Liberation Sans',sans-serif;letter-spacing:0.2px;right:349.5px;margin-right:-0.2px;">(24)</div>
<div style="position:absolute;top:903.9px;font-size:17.5px;line-height:17.5px;color:#111111;font-weight:normal;font-style:normal;white-space:nowrap;font-family:'Liberation Sans',sans-serif;letter-spacing:0.2px;right:211.5px;margin-right:-0.2px;">(22)</div>
<div style="position:absolute;top:903.9px;font-size:17.5px;line-height:17.5px;color:#111111;font-weight:normal;font-style:normal;white-space:nowrap;font-family:'Liberation Sans',sans-serif;letter-spacing:0.2px;right:73.5px;margin-right:-0.2px;">(20)</div>
<div style="position:absolute;top:927.4px;font-size:17px;line-height:17px;color:#111111;font-weight:normal;font-style:normal;white-space:nowrap;font-family:'Liberation Sans',sans-serif;letter-spacing:0.35px;left:75.5px;">Net Interest Expense</div>
<div style="position:absolute;top:926.9px;font-size:17.5px;line-height:17.5px;color:#111111;font-weight:normal;font-style:normal;white-space:nowrap;font-family:'Liberation Sans',sans-serif;letter-spacing:0.2px;right:2240.5px;margin-right:-0.2px;">(18)</div>
<div style="position:absolute;top:926.9px;font-size:17.5px;line-height:17.5px;color:#111111;font-weight:normal;font-style:normal;white-space:nowrap;font-family:'Liberation Sans',sans-serif;letter-spacing:0.2px;right:2120.5px;margin-right:-0.2px;">(17)</div>
<div style="position:absolute;top:926.9px;font-size:17.5px;line-height:17.5px;color:#111111;font-weight:normal;font-style:normal;white-space:nowrap;font-family:'Liberation Sans',sans-serif;letter-spacing:0.2px;right:2000.5px;margin-right:-0.2px;">(14)</div>
<div style="position:absolute;top:926.9px;font-size:17.5px;line-height:17.5px;color:#111111;font-weight:normal;font-style:normal;white-space:nowrap;font-family:'Liberation Sans',sans-serif;letter-spacing:0.2px;right:1880.0px;margin-right:-0.2px;">(11)</div>
<div style="position:absolute;top:926.9px;font-size:17.5px;line-height:17.5px;color:#111111;font-weight:normal;font-style:normal;white-space:nowrap;font-family:'Liberation Sans',sans-serif;letter-spacing:0.2px;right:1759.5px;margin-right:-0.2px;">(7)</div>
<div style="position:absolute;top:926.9px;font-size:17.5px;line-height:17.5px;color:#111111;font-weight:normal;font-style:normal;white-space:nowrap;font-family:'Liberation Sans',sans-serif;letter-spacing:0.2px;right:1591.5px;margin-right:-0.2px;">(1)</div>
<div style="position:absolute;top:926.9px;font-size:17.5px;line-height:17.5px;color:#111111;font-weight:normal;font-style:normal;white-space:nowrap;font-family:'Liberation Sans',sans-serif;letter-spacing:0.2px;right:1453.5px;margin-right:-0.2px;">(1)</div>
<div style="position:absolute;top:926.9px;font-size:17.5px;line-height:17.5px;color:#111111;font-weight:normal;font-style:normal;white-space:nowrap;font-family:'Liberation Sans',sans-serif;letter-spacing:0.2px;right:1315.5px;margin-right:-0.2px;">(2)</div>
<div style="position:absolute;top:926.9px;font-size:17.5px;line-height:17.5px;color:#111111;font-weight:normal;font-style:normal;white-space:nowrap;font-family:'Liberation Sans',sans-serif;letter-spacing:0.2px;right:1177.5px;margin-right:-0.2px;">(2)</div>
<div style="position:absolute;top:926.9px;font-size:17.5px;line-height:17.5px;color:#111111;font-weight:normal;font-style:normal;white-space:nowrap;font-family:'Liberation Sans',sans-serif;letter-spacing:0.2px;right:1039.5px;margin-right:-0.2px;">(2)</div>
<div style="position:absolute;top:926.9px;font-size:17.5px;line-height:17.5px;color:#111111;font-weight:normal;font-style:normal;white-space:nowrap;font-family:'Liberation Sans',sans-serif;letter-spacing:0.2px;right:901.5px;margin-right:-0.2px;">(2)</div>
<div style="position:absolute;top:926.9px;font-size:17.5px;line-height:17.5px;color:#111111;font-weight:normal;font-style:normal;white-space:nowrap;font-family:'Liberation Sans',sans-serif;letter-spacing:0.2px;right:763.5px;margin-right:-0.2px;">(2)</div>
<div style="position:absolute;top:926.9px;font-size:17.5px;line-height:17.5px;color:#111111;font-weight:normal;font-style:normal;white-space:nowrap;font-family:'Liberation Sans',sans-serif;letter-spacing:0.2px;right:625.0px;margin-right:-0.2px;">(2)</div>
<div style="position:absolute;top:926.9px;font-size:17.5px;line-height:17.5px;color:#111111;font-weight:normal;font-style:normal;white-space:nowrap;font-family:'Liberation Sans',sans-serif;letter-spacing:0.2px;right:487.5px;margin-right:-0.2px;">(2)</div>
<div style="position:absolute;top:926.9px;font-size:17.5px;line-height:17.5px;color:#111111;font-weight:normal;font-style:normal;white-space:nowrap;font-family:'Liberation Sans',sans-serif;letter-spacing:0.2px;right:349.5px;margin-right:-0.2px;">(2)</div>
<div style="position:absolute;top:926.9px;font-size:17.5px;line-height:17.5px;color:#111111;font-weight:normal;font-style:normal;white-space:nowrap;font-family:'Liberation Sans',sans-serif;letter-spacing:0.2px;right:211.5px;margin-right:-0.2px;">(2)</div>
<div style="position:absolute;top:926.9px;font-size:17.5px;line-height:17.5px;color:#111111;font-weight:normal;font-style:normal;white-space:nowrap;font-family:'Liberation Sans',sans-serif;letter-spacing:0.2px;right:73.5px;margin-right:-0.2px;">(2)</div>
<div style="position:absolute;top:950.0px;font-size:17px;line-height:17px;color:#111111;font-weight:normal;font-style:normal;white-space:nowrap;font-family:'Liberation Sans',sans-serif;letter-spacing:0.35px;left:75.5px;">Net Profit Before Tax</div>
<div style="position:absolute;top:949.6px;font-size:17.5px;line-height:17.5px;color:#111111;font-weight:normal;font-style:normal;white-space:nowrap;font-family:'Liberation Sans',sans-serif;letter-spacing:0.2px;right:2240.5px;margin-right:-0.2px;">(418)</div>
<div style="position:absolute;top:949.6px;font-size:17.5px;line-height:17.5px;color:#111111;font-weight:normal;font-style:normal;white-space:nowrap;font-family:'Liberation Sans',sans-serif;letter-spacing:0.2px;right:2120.5px;margin-right:-0.2px;">(151)</div>
<div style="position:absolute;top:949.6px;font-size:17.5px;line-height:17.5px;color:#111111;font-weight:normal;font-style:normal;white-space:nowrap;font-family:'Liberation Sans',sans-serif;letter-spacing:0.2px;right:2007.5px;margin-right:-0.2px;">682</div>
<div style="position:absolute;top:949.6px;font-size:17.5px;line-height:17.5px;color:#111111;font-weight:normal;font-style:normal;white-space:nowrap;font-family:'Liberation Sans',sans-serif;letter-spacing:0.2px;right:1887.0px;margin-right:-0.2px;">2,645</div>
<div style="position:absolute;top:949.6px;font-size:17.5px;line-height:17.5px;color:#111111;font-weight:normal;font-style:normal;white-space:nowrap;font-family:'Liberation Sans',sans-serif;letter-spacing:0.2px;right:1766.5px;margin-right:-0.2px;">5,996</div>
<div style="position:absolute;top:949.6px;font-size:17.5px;line-height:17.5px;color:#111111;font-weight:normal;font-style:normal;white-space:nowrap;font-family:'Liberation Sans',sans-serif;letter-spacing:0.2px;right:1591.5px;margin-right:-0.2px;">(52)</div>
<div style="position:absolute;top:949.6px;font-size:17.5px;line-height:17.5px;color:#111111;font-weight:normal;font-style:normal;white-space:nowrap;font-family:'Liberation Sans',sans-serif;letter-spacing:0.2px;right:1453.5px;margin-right:-0.2px;">(48)</div>
<div style="position:absolute;top:949.6px;font-size:17.5px;line-height:17.5px;color:#111111;font-weight:normal;font-style:normal;white-space:nowrap;font-family:'Liberation Sans',sans-serif;letter-spacing:0.2px;right:1315.5px;margin-right:-0.2px;">(45)</div>
<div style="position:absolute;top:949.6px;font-size:17.5px;line-height:17.5px;color:#111111;font-weight:normal;font-style:normal;white-space:nowrap;font-family:'Liberation Sans',sans-serif;letter-spacing:0.2px;right:1177.5px;margin-right:-0.2px;">(41)</div>
<div style="position:absolute;top:949.6px;font-size:17.5px;line-height:17.5px;color:#111111;font-weight:normal;font-style:normal;white-space:nowrap;font-family:'Liberation Sans',sans-serif;letter-spacing:0.2px;right:1039.5px;margin-right:-0.2px;">(38)</div>
<div style="position:absolute;top:949.6px;font-size:17.5px;line-height:17.5px;color:#111111;font-weight:normal;font-style:normal;white-space:nowrap;font-family:'Liberation Sans',sans-serif;letter-spacing:0.2px;right:901.5px;margin-right:-0.2px;">(34)</div>
<div style="position:absolute;top:949.6px;font-size:17.5px;line-height:17.5px;color:#111111;font-weight:normal;font-style:normal;white-space:nowrap;font-family:'Liberation Sans',sans-serif;letter-spacing:0.2px;right:763.5px;margin-right:-0.2px;">(32)</div>
<div style="position:absolute;top:949.6px;font-size:17.5px;line-height:17.5px;color:#111111;font-weight:normal;font-style:normal;white-space:nowrap;font-family:'Liberation Sans',sans-serif;letter-spacing:0.2px;right:625.0px;margin-right:-0.2px;">(30)</div>
<div style="position:absolute;top:949.6px;font-size:17.5px;line-height:17.5px;color:#111111;font-weight:normal;font-style:normal;white-space:nowrap;font-family:'Liberation Sans',sans-serif;letter-spacing:0.2px;right:487.5px;margin-right:-0.2px;">(28)</div>
<div style="position:absolute;top:949.6px;font-size:17.5px;line-height:17.5px;color:#111111;font-weight:normal;font-style:normal;white-space:nowrap;font-family:'Liberation Sans',sans-serif;letter-spacing:0.2px;right:349.5px;margin-right:-0.2px;">(26)</div>
<div style="position:absolute;top:949.6px;font-size:17.5px;line-height:17.5px;color:#111111;font-weight:normal;font-style:normal;white-space:nowrap;font-family:'Liberation Sans',sans-serif;letter-spacing:0.2px;right:211.5px;margin-right:-0.2px;">(24)</div>
<div style="position:absolute;top:949.6px;font-size:17.5px;line-height:17.5px;color:#111111;font-weight:normal;font-style:normal;white-space:nowrap;font-family:'Liberation Sans',sans-serif;letter-spacing:0.2px;right:73.5px;margin-right:-0.2px;">(22)</div>
<div style="position:absolute;top:973.1px;font-size:17px;line-height:17px;color:#111111;font-weight:normal;font-style:normal;white-space:nowrap;font-family:'Liberation Sans',sans-serif;letter-spacing:0.35px;left:75.5px;">Tax Expense</div>
<div style="position:absolute;top:972.7px;font-size:17.5px;line-height:17.5px;color:#111111;font-weight:normal;font-style:normal;white-space:nowrap;font-family:'Liberation Sans',sans-serif;right:2249.0px;">-</div>
<div style="position:absolute;top:972.7px;font-size:17.5px;line-height:17.5px;color:#111111;font-weight:normal;font-style:normal;white-space:nowrap;font-family:'Liberation Sans',sans-serif;right:2129.0px;">-</div>
<div style="position:absolute;top:972.7px;font-size:17.5px;line-height:17.5px;color:#111111;font-weight:normal;font-style:normal;white-space:nowrap;font-family:'Liberation Sans',sans-serif;letter-spacing:0.2px;right:2000.5px;margin-right:-0.2px;">(171)</div>
<div style="position:absolute;top:972.7px;font-size:17.5px;line-height:17.5px;color:#111111;font-weight:normal;font-style:normal;white-space:nowrap;font-family:'Liberation Sans',sans-serif;letter-spacing:0.2px;right:1880.0px;margin-right:-0.2px;">(661)</div>
<div style="position:absolute;top:972.7px;font-size:17.5px;line-height:17.5px;color:#111111;font-weight:normal;font-style:normal;white-space:nowrap;font-family:'Liberation Sans',sans-serif;letter-spacing:0.2px;right:1759.5px;margin-right:-0.2px;">(1,499)</div>
<div style="position:absolute;top:972.7px;font-size:17.5px;line-height:17.5px;color:#111111;font-weight:normal;font-style:normal;white-space:nowrap;font-family:'Liberation Sans',sans-serif;right:1600.0px;">-</div>
<div style="position:absolute;top:972.7px;font-size:17.5px;line-height:17.5px;color:#111111;font-weight:normal;font-style:normal;white-space:nowrap;font-family:'Liberation Sans',sans-serif;right:1462.0px;">-</div>
<div style="position:absolute;top:972.7px;font-size:17.5px;line-height:17.5px;color:#111111;font-weight:normal;font-style:normal;white-space:nowrap;font-family:'Liberation Sans',sans-serif;right:1324.0px;">-</div>
<div style="position:absolute;top:972.7px;font-size:17.5px;line-height:17.5px;color:#111111;font-weight:normal;font-style:normal;white-space:nowrap;font-family:'Liberation Sans',sans-serif;right:1186.0px;">-</div>
<div style="position:absolute;top:972.7px;font-size:17.5px;line-height:17.5px;color:#111111;font-weight:normal;font-style:normal;white-space:nowrap;font-family:'Liberation Sans',sans-serif;right:1048.0px;">-</div>
<div style="position:absolute;top:972.7px;font-size:17.5px;line-height:17.5px;color:#111111;font-weight:normal;font-style:normal;white-space:nowrap;font-family:'Liberation Sans',sans-serif;right:910.0px;">-</div>
<div style="position:absolute;top:972.7px;font-size:17.5px;line-height:17.5px;color:#111111;font-weight:normal;font-style:normal;white-space:nowrap;font-family:'Liberation Sans',sans-serif;right:772.0px;">-</div>
<div style="position:absolute;top:972.7px;font-size:17.5px;line-height:17.5px;color:#111111;font-weight:normal;font-style:normal;white-space:nowrap;font-family:'Liberation Sans',sans-serif;right:633.5px;">-</div>
<div style="position:absolute;top:972.7px;font-size:17.5px;line-height:17.5px;color:#111111;font-weight:normal;font-style:normal;white-space:nowrap;font-family:'Liberation Sans',sans-serif;right:496.0px;">-</div>
<div style="position:absolute;top:972.7px;font-size:17.5px;line-height:17.5px;color:#111111;font-weight:normal;font-style:normal;white-space:nowrap;font-family:'Liberation Sans',sans-serif;right:358.0px;">-</div>
<div style="position:absolute;top:972.7px;font-size:17.5px;line-height:17.5px;color:#111111;font-weight:normal;font-style:normal;white-space:nowrap;font-family:'Liberation Sans',sans-serif;right:220.0px;">-</div>
<div style="position:absolute;top:972.7px;font-size:17.5px;line-height:17.5px;color:#111111;font-weight:normal;font-style:normal;white-space:nowrap;font-family:'Liberation Sans',sans-serif;right:82.0px;">-</div>
<div style="position:absolute;left:71.0px;top:991.4px;width:1075.0px;height:26.3px;background:#4ab2e6;"></div>
<div style="position:absolute;left:1176.0px;top:991.4px;width:1656.0px;height:26.3px;background:#4ab2e6;"></div>
<div style="position:absolute;top:995.4px;font-size:21px;line-height:21px;color:#ffffff;font-weight:bold;font-style:normal;white-space:nowrap;font-family:'Liberation Sans',sans-serif;letter-spacing:0.2px;left:86.0px;-webkit-text-stroke:0.4px #fff;">Net Profit After Tax</div>
<div style="position:absolute;top:995.9px;font-size:18px;line-height:18px;color:#ffffff;font-weight:bold;font-style:normal;white-space:nowrap;font-family:'Liberation Sans',sans-serif;letter-spacing:0.6px;right:2240.2px;margin-right:-0.6px;-webkit-text-stroke:0.4px #ffffff;">(418)</div>
<div style="position:absolute;top:995.9px;font-size:18px;line-height:18px;color:#ffffff;font-weight:bold;font-style:normal;white-space:nowrap;font-family:'Liberation Sans',sans-serif;letter-spacing:0.6px;right:2120.2px;margin-right:-0.6px;-webkit-text-stroke:0.4px #ffffff;">(151)</div>
<div style="position:absolute;top:995.9px;font-size:18px;line-height:18px;color:#ffffff;font-weight:bold;font-style:normal;white-space:nowrap;font-family:'Liberation Sans',sans-serif;letter-spacing:0.6px;right:2008.0px;margin-right:-0.6px;-webkit-text-stroke:0.4px #ffffff;">512</div>
<div style="position:absolute;top:995.9px;font-size:18px;line-height:18px;color:#ffffff;font-weight:bold;font-style:normal;white-space:nowrap;font-family:'Liberation Sans',sans-serif;letter-spacing:0.6px;right:1887.5px;margin-right:-0.6px;-webkit-text-stroke:0.4px #ffffff;">1,984</div>
<div style="position:absolute;top:995.9px;font-size:18px;line-height:18px;color:#ffffff;font-weight:bold;font-style:normal;white-space:nowrap;font-family:'Liberation Sans',sans-serif;letter-spacing:0.6px;right:1767.0px;margin-right:-0.6px;-webkit-text-stroke:0.4px #ffffff;">4,497</div>
<div style="position:absolute;top:995.9px;font-size:18px;line-height:18px;color:#ffffff;font-weight:bold;font-style:normal;white-space:nowrap;font-family:'Liberation Sans',sans-serif;letter-spacing:0.6px;right:1591.2px;margin-right:-0.6px;-webkit-text-stroke:0.4px #ffffff;">(52)</div>
<div style="position:absolute;top:995.9px;font-size:18px;line-height:18px;color:#ffffff;font-weight:bold;font-style:normal;white-space:nowrap;font-family:'Liberation Sans',sans-serif;letter-spacing:0.6px;right:1453.2px;margin-right:-0.6px;-webkit-text-stroke:0.4px #ffffff;">(48)</div>
<div style="position:absolute;top:995.9px;font-size:18px;line-height:18px;color:#ffffff;font-weight:bold;font-style:normal;white-space:nowrap;font-family:'Liberation Sans',sans-serif;letter-spacing:0.6px;right:1315.2px;margin-right:-0.6px;-webkit-text-stroke:0.4px #ffffff;">(45)</div>
<div style="position:absolute;top:995.9px;font-size:18px;line-height:18px;color:#ffffff;font-weight:bold;font-style:normal;white-space:nowrap;font-family:'Liberation Sans',sans-serif;letter-spacing:0.6px;right:1177.2px;margin-right:-0.6px;-webkit-text-stroke:0.4px #ffffff;">(41)</div>
<div style="position:absolute;top:995.9px;font-size:18px;line-height:18px;color:#ffffff;font-weight:bold;font-style:normal;white-space:nowrap;font-family:'Liberation Sans',sans-serif;letter-spacing:0.6px;right:1039.2px;margin-right:-0.6px;-webkit-text-stroke:0.4px #ffffff;">(38)</div>
<div style="position:absolute;top:995.9px;font-size:18px;line-height:18px;color:#ffffff;font-weight:bold;font-style:normal;white-space:nowrap;font-family:'Liberation Sans',sans-serif;letter-spacing:0.6px;right:901.2px;margin-right:-0.6px;-webkit-text-stroke:0.4px #ffffff;">(34)</div>
<div style="position:absolute;top:995.9px;font-size:18px;line-height:18px;color:#ffffff;font-weight:bold;font-style:normal;white-space:nowrap;font-family:'Liberation Sans',sans-serif;letter-spacing:0.6px;right:763.2px;margin-right:-0.6px;-webkit-text-stroke:0.4px #ffffff;">(32)</div>
<div style="position:absolute;top:995.9px;font-size:18px;line-height:18px;color:#ffffff;font-weight:bold;font-style:normal;white-space:nowrap;font-family:'Liberation Sans',sans-serif;letter-spacing:0.6px;right:624.7px;margin-right:-0.6px;-webkit-text-stroke:0.4px #ffffff;">(30)</div>
<div style="position:absolute;top:995.9px;font-size:18px;line-height:18px;color:#ffffff;font-weight:bold;font-style:normal;white-space:nowrap;font-family:'Liberation Sans',sans-serif;letter-spacing:0.6px;right:487.2px;margin-right:-0.6px;-webkit-text-stroke:0.4px #ffffff;">(28)</div>
<div style="position:absolute;top:995.9px;font-size:18px;line-height:18px;color:#ffffff;font-weight:bold;font-style:normal;white-space:nowrap;font-family:'Liberation Sans',sans-serif;letter-spacing:0.6px;right:349.2px;margin-right:-0.6px;-webkit-text-stroke:0.4px #ffffff;">(26)</div>
<div style="position:absolute;top:995.9px;font-size:18px;line-height:18px;color:#ffffff;font-weight:bold;font-style:normal;white-space:nowrap;font-family:'Liberation Sans',sans-serif;letter-spacing:0.6px;right:211.2px;margin-right:-0.6px;-webkit-text-stroke:0.4px #ffffff;">(24)</div>
<div style="position:absolute;top:995.9px;font-size:18px;line-height:18px;color:#ffffff;font-weight:bold;font-style:normal;white-space:nowrap;font-family:'Liberation Sans',sans-serif;letter-spacing:0.6px;right:73.2px;margin-right:-0.6px;-webkit-text-stroke:0.4px #ffffff;">(22)</div>
<div style="position:absolute;top:1022.0px;font-size:17px;line-height:17px;color:#111111;font-weight:normal;font-style:italic;white-space:nowrap;font-family:'Liberation Sans',sans-serif;letter-spacing:0.55px;left:94.0px;">Net Profit After Tax %</div>
<div style="position:absolute;top:1022.0px;font-size:17px;line-height:17px;color:#111111;font-weight:normal;font-style:italic;white-space:nowrap;font-family:'Liberation Sans',sans-serif;letter-spacing:1.0px;right:2241.2px;margin-right:-1.0px;">(125%)</div>
<div style="position:absolute;top:1022.0px;font-size:17px;line-height:17px;color:#111111;font-weight:normal;font-style:italic;white-space:nowrap;font-family:'Liberation Sans',sans-serif;letter-spacing:1.0px;right:2121.2px;margin-right:-1.0px;">(13%)</div>
<div style="position:absolute;top:1022.0px;font-size:17px;line-height:17px;color:#111111;font-weight:normal;font-style:italic;white-space:nowrap;font-family:'Liberation Sans',sans-serif;letter-spacing:1.0px;right:2009.0px;margin-right:-1.0px;">19%</div>
<div style="position:absolute;top:1022.0px;font-size:17px;line-height:17px;color:#111111;font-weight:normal;font-style:italic;white-space:nowrap;font-family:'Liberation Sans',sans-serif;letter-spacing:1.0px;right:1888.5px;margin-right:-1.0px;">36%</div>
<div style="position:absolute;top:1022.0px;font-size:17px;line-height:17px;color:#111111;font-weight:normal;font-style:italic;white-space:nowrap;font-family:'Liberation Sans',sans-serif;letter-spacing:1.0px;right:1768.0px;margin-right:-1.0px;">46%</div>
<div style="position:absolute;top:1022.0px;font-size:17px;line-height:17px;color:#111111;font-weight:normal;font-style:italic;white-space:nowrap;font-family:'Liberation Sans',sans-serif;letter-spacing:1.0px;right:1592.2px;margin-right:-1.0px;">(853%)</div>
<div style="position:absolute;top:1022.0px;font-size:17px;line-height:17px;color:#111111;font-weight:normal;font-style:italic;white-space:nowrap;font-family:'Liberation Sans',sans-serif;letter-spacing:1.0px;right:1454.2px;margin-right:-1.0px;">(448%)</div>
<div style="position:absolute;top:1022.0px;font-size:17px;line-height:17px;color:#111111;font-weight:normal;font-style:italic;white-space:nowrap;font-family:'Liberation Sans',sans-serif;letter-spacing:1.0px;right:1316.2px;margin-right:-1.0px;">(293%)</div>
<div style="position:absolute;top:1022.0px;font-size:17px;line-height:17px;color:#111111;font-weight:normal;font-style:italic;white-space:nowrap;font-family:'Liberation Sans',sans-serif;letter-spacing:1.0px;right:1178.2px;margin-right:-1.0px;">(206%)</div>
<div style="position:absolute;top:1022.0px;font-size:17px;line-height:17px;color:#111111;font-weight:normal;font-style:italic;white-space:nowrap;font-family:'Liberation Sans',sans-serif;letter-spacing:1.0px;right:1040.2px;margin-right:-1.0px;">(152%)</div>
<div style="position:absolute;top:1022.0px;font-size:17px;line-height:17px;color:#111111;font-weight:normal;font-style:italic;white-space:nowrap;font-family:'Liberation Sans',sans-serif;letter-spacing:1.0px;right:902.2px;margin-right:-1.0px;">(116%)</div>
<div style="position:absolute;top:1022.0px;font-size:17px;line-height:17px;color:#111111;font-weight:normal;font-style:italic;white-space:nowrap;font-family:'Liberation Sans',sans-serif;letter-spacing:1.0px;right:764.2px;margin-right:-1.0px;">(100%)</div>
<div style="position:absolute;top:1022.0px;font-size:17px;line-height:17px;color:#111111;font-weight:normal;font-style:italic;white-space:nowrap;font-family:'Liberation Sans',sans-serif;letter-spacing:1.0px;right:625.7px;margin-right:-1.0px;">(87%)</div>
<div style="position:absolute;top:1022.0px;font-size:17px;line-height:17px;color:#111111;font-weight:normal;font-style:italic;white-space:nowrap;font-family:'Liberation Sans',sans-serif;letter-spacing:1.0px;right:488.2px;margin-right:-1.0px;">(75%)</div>
<div style="position:absolute;top:1022.0px;font-size:17px;line-height:17px;color:#111111;font-weight:normal;font-style:italic;white-space:nowrap;font-family:'Liberation Sans',sans-serif;letter-spacing:1.0px;right:350.2px;margin-right:-1.0px;">(65%)</div>
<div style="position:absolute;top:1022.0px;font-size:17px;line-height:17px;color:#111111;font-weight:normal;font-style:italic;white-space:nowrap;font-family:'Liberation Sans',sans-serif;letter-spacing:1.0px;right:212.2px;margin-right:-1.0px;">(56%)</div>
<div style="position:absolute;top:1022.0px;font-size:17px;line-height:17px;color:#111111;font-weight:normal;font-style:italic;white-space:nowrap;font-family:'Liberation Sans',sans-serif;letter-spacing:1.0px;right:74.2px;margin-right:-1.0px;">(48%)</div>
<div style="position:absolute;left:71.0px;top:1065.1px;width:1075.0px;height:34.2px;background:#4b4fd1;"></div>
<div style="position:absolute;top:1068.3px;font-size:29px;line-height:29px;color:#ffffff;font-weight:bold;font-style:normal;white-space:nowrap;font-family:'Liberation Sans',sans-serif;letter-spacing:0.97px;left:8.5px;width:1200px;text-align:center;-webkit-text-stroke:0.6px #fff;">Income Statement ($&#x27;000) - 5 years to December 2030</div>
<div style="position:absolute;left:1176.0px;top:1065.1px;width:1656.0px;height:34.2px;background:#4b4fd1;"></div>
<div style="position:absolute;top:1068.3px;font-size:29px;line-height:29px;color:#ffffff;font-weight:bold;font-style:normal;white-space:nowrap;font-family:'Liberation Sans',sans-serif;letter-spacing:0.97px;left:1404.0px;width:1200px;text-align:center;-webkit-text-stroke:0.6px #fff;">Income Statement ($&#x27;000) - 2026</div>
<div style="position:absolute;left:71.0px;top:1560.9px;width:1075.0px;height:34.5px;background:#4b4fd1;"></div>
<div style="position:absolute;top:1564.5px;font-size:29px;line-height:29px;color:#ffffff;font-weight:bold;font-style:normal;white-space:nowrap;font-family:'Liberation Sans',sans-serif;letter-spacing:0.97px;left:8.5px;width:1200px;text-align:center;-webkit-text-stroke:0.6px #fff;">Balance Sheet ($&#x27;000) - 5 years to December 2030</div>
<div style="position:absolute;left:1176.0px;top:1560.9px;width:1656.0px;height:34.5px;background:#4b4fd1;"></div>
<div style="position:absolute;top:1564.5px;font-size:29px;line-height:29px;color:#ffffff;font-weight:bold;font-style:normal;white-space:nowrap;font-family:'Liberation Sans',sans-serif;letter-spacing:0.97px;left:1404.0px;width:1200px;text-align:center;-webkit-text-stroke:0.6px #fff;">Balance Sheet ($&#x27;000) - 2026</div>
<div style="position:absolute;left:72.0px;top:1600.9px;width:473.0px;height:22.6px;background:#6b72e6;"></div>
<div style="position:absolute;top:1604.6px;font-size:18px;line-height:18px;color:#ffffff;font-weight:bold;font-style:normal;white-space:nowrap;font-family:'Liberation Sans',sans-serif;letter-spacing:0.45px;left:82.5px;-webkit-text-stroke:0.3px #fff;">Year Ending</div>
<div style="position:absolute;left:546.0px;top:1600.9px;width:118.5px;height:22.6px;background:#6b72e6;"></div>
<div style="position:absolute;top:1604.6px;font-size:18px;line-height:18px;color:#ffffff;font-weight:bold;font-style:normal;white-space:nowrap;font-family:'Liberation Sans',sans-serif;letter-spacing:0.8px;left:5.2px;width:1200px;text-align:center;-webkit-text-stroke:0.3px #fff;">2026</div>
<div style="position:absolute;left:665.5px;top:1600.9px;width:119.0px;height:22.6px;background:#6b72e6;"></div>
<div style="position:absolute;top:1604.6px;font-size:18px;line-height:18px;color:#ffffff;font-weight:bold;font-style:normal;white-space:nowrap;font-family:'Liberation Sans',sans-serif;letter-spacing:0.8px;left:125.0px;width:1200px;text-align:center;-webkit-text-stroke:0.3px #fff;">2027</div>
<div style="position:absolute;left:785.5px;top:1600.9px;width:119.0px;height:22.6px;background:#6b72e6;"></div>
<div style="position:absolute;top:1604.6px;font-size:18px;line-height:18px;color:#ffffff;font-weight:bold;font-style:normal;white-space:nowrap;font-family:'Liberation Sans',sans-serif;letter-spacing:0.8px;left:245.0px;width:1200px;text-align:center;-webkit-text-stroke:0.3px #fff;">2028</div>
<div style="position:absolute;left:905.5px;top:1600.9px;width:119.5px;height:22.6px;background:#6b72e6;"></div>
<div style="position:absolute;top:1604.6px;font-size:18px;line-height:18px;color:#ffffff;font-weight:bold;font-style:normal;white-space:nowrap;font-family:'Liberation Sans',sans-serif;letter-spacing:0.8px;left:365.2px;width:1200px;text-align:center;-webkit-text-stroke:0.3px #fff;">2029</div>
<div style="position:absolute;left:1026.0px;top:1600.9px;width:119.5px;height:22.6px;background:#6b72e6;"></div>
<div style="position:absolute;top:1604.6px;font-size:18px;line-height:18px;color:#ffffff;font-weight:bold;font-style:normal;white-space:nowrap;font-family:'Liberation Sans',sans-serif;letter-spacing:0.8px;left:485.8px;width:1200px;text-align:center;-webkit-text-stroke:0.3px #fff;">2030</div>
<div style="position:absolute;left:1176.5px;top:1600.9px;width:137.0px;height:22.6px;background:#6b72e6;"></div>
<div style="position:absolute;top:1604.6px;font-size:18px;line-height:18px;color:#ffffff;font-weight:bold;font-style:normal;white-space:nowrap;font-family:'Liberation Sans',sans-serif;letter-spacing:0.8px;left:645.0px;width:1200px;text-align:center;-webkit-text-stroke:0.3px #fff;">Jan</div>
<div style="position:absolute;left:1314.5px;top:1600.9px;width:137.0px;height:22.6px;background:#6b72e6;"></div>
<div style="position:absolute;top:1604.6px;font-size:18px;line-height:18px;color:#ffffff;font-weight:bold;font-style:normal;white-space:nowrap;font-family:'Liberation Sans',sans-serif;letter-spacing:0.8px;left:783.0px;width:1200px;text-align:center;-webkit-text-stroke:0.3px #fff;">Feb</div>
<div style="position:absolute;left:1452.5px;top:1600.9px;width:137.0px;height:22.6px;background:#6b72e6;"></div>
<div style="position:absolute;top:1604.6px;font-size:18px;line-height:18px;color:#ffffff;font-weight:bold;font-style:normal;white-space:nowrap;font-family:'Liberation Sans',sans-serif;letter-spacing:0.8px;left:921.0px;width:1200px;text-align:center;-webkit-text-stroke:0.3px #fff;">Mar</div>
<div style="position:absolute;left:1590.5px;top:1600.9px;width:137.0px;height:22.6px;background:#6b72e6;"></div>
<div style="position:absolute;top:1604.6px;font-size:18px;line-height:18px;color:#ffffff;font-weight:bold;font-style:normal;white-space:nowrap;font-family:'Liberation Sans',sans-serif;letter-spacing:0.8px;left:1059.0px;width:1200px;text-align:center;-webkit-text-stroke:0.3px #fff;">Apr</div>
<div style="position:absolute;left:1728.5px;top:1600.9px;width:137.0px;height:22.6px;background:#6b72e6;"></div>
<div style="position:absolute;top:1604.6px;font-size:18px;line-height:18px;color:#ffffff;font-weight:bold;font-style:normal;white-space:nowrap;font-family:'Liberation Sans',sans-serif;letter-spacing:0.8px;left:1197.0px;width:1200px;text-align:center;-webkit-text-stroke:0.3px #fff;">May</div>
<div style="position:absolute;left:1866.5px;top:1600.9px;width:137.0px;height:22.6px;background:#6b72e6;"></div>
<div style="position:absolute;top:1604.6px;font-size:18px;line-height:18px;color:#ffffff;font-weight:bold;font-style:normal;white-space:nowrap;font-family:'Liberation Sans',sans-serif;letter-spacing:0.8px;left:1335.0px;width:1200px;text-align:center;-webkit-text-stroke:0.3px #fff;">Jun</div>
<div style="position:absolute;left:2004.5px;top:1600.9px;width:137.0px;height:22.6px;background:#6b72e6;"></div>
<div style="position:absolute;top:1604.6px;font-size:18px;line-height:18px;color:#ffffff;font-weight:bold;font-style:normal;white-space:nowrap;font-family:'Liberation Sans',sans-serif;letter-spacing:0.8px;left:1473.0px;width:1200px;text-align:center;-webkit-text-stroke:0.3px #fff;">Jul</div>
<div style="position:absolute;left:2142.5px;top:1600.9px;width:137.5px;height:22.6px;background:#6b72e6;"></div>
<div style="position:absolute;top:1604.6px;font-size:18px;line-height:18px;color:#ffffff;font-weight:bold;font-style:normal;white-space:nowrap;font-family:'Liberation Sans',sans-serif;letter-spacing:0.8px;left:1611.2px;width:1200px;text-align:center;-webkit-text-stroke:0.3px #fff;">Aug</div>
<div style="position:absolute;left:2281.0px;top:1600.9px;width:136.5px;height:22.6px;background:#6b72e6;"></div>
<div style="position:absolute;top:1604.6px;font-size:18px;line-height:18px;color:#ffffff;font-weight:bold;font-style:normal;white-space:nowrap;font-family:'Liberation Sans',sans-serif;letter-spacing:0.8px;left:1749.2px;width:1200px;text-align:center;-webkit-text-stroke:0.3px #fff;">Sep</div>
<div style="position:absolute;left:2418.5px;top:1600.9px;width:137.0px;height:22.6px;background:#6b72e6;"></div>
<div style="position:absolute;top:1604.6px;font-size:18px;line-height:18px;color:#ffffff;font-weight:bold;font-style:normal;white-space:nowrap;font-family:'Liberation Sans',sans-serif;letter-spacing:0.8px;left:1887.0px;width:1200px;text-align:center;-webkit-text-stroke:0.3px #fff;">Oct</div>
<div style="position:absolute;left:2556.5px;top:1600.9px;width:137.0px;height:22.6px;background:#6b72e6;"></div>
<div style="position:absolute;top:1604.6px;font-size:18px;line-height:18px;color:#ffffff;font-weight:bold;font-style:normal;white-space:nowrap;font-family:'Liberation Sans',sans-serif;letter-spacing:0.8px;left:2025.0px;width:1200px;text-align:center;-webkit-text-stroke:0.3px #fff;">Nov</div>
<div style="position:absolute;left:2694.5px;top:1600.9px;width:137.0px;height:22.6px;background:#6b72e6;"></div>
<div style="position:absolute;top:1604.6px;font-size:18px;line-height:18px;color:#ffffff;font-weight:bold;font-style:normal;white-space:nowrap;font-family:'Liberation Sans',sans-serif;letter-spacing:0.8px;left:2163.0px;width:1200px;text-align:center;-webkit-text-stroke:0.3px #fff;">Dec</div>
<div style="position:absolute;top:1633.2px;font-size:17px;line-height:17px;color:#111111;font-weight:normal;font-style:normal;white-space:nowrap;font-family:'Liberation Sans',sans-serif;letter-spacing:0.35px;left:75.5px;">Current Assets</div>
<div style="position:absolute;top:1632.8px;font-size:17.5px;line-height:17.5px;color:#111111;font-weight:normal;font-style:normal;white-space:nowrap;font-family:'Liberation Sans',sans-serif;letter-spacing:0.2px;right:2247.5px;margin-right:-0.2px;">473</div>
<div style="position:absolute;top:1632.8px;font-size:17.5px;line-height:17.5px;color:#111111;font-weight:normal;font-style:normal;white-space:nowrap;font-family:'Liberation Sans',sans-serif;letter-spacing:0.2px;right:2127.5px;margin-right:-0.2px;">314</div>
<div style="position:absolute;top:1632.8px;font-size:17.5px;line-height:17.5px;color:#111111;font-weight:normal;font-style:normal;white-space:nowrap;font-family:'Liberation Sans',sans-serif;letter-spacing:0.2px;right:2007.5px;margin-right:-0.2px;">822</div>
<div style="position:absolute;top:1632.8px;font-size:17.5px;line-height:17.5px;color:#111111;font-weight:normal;font-style:normal;white-space:nowrap;font-family:'Liberation Sans',sans-serif;letter-spacing:0.2px;right:1887.0px;margin-right:-0.2px;">2,804</div>
<div style="position:absolute;top:1632.8px;font-size:17.5px;line-height:17.5px;color:#111111;font-weight:normal;font-style:normal;white-space:nowrap;font-family:'Liberation Sans',sans-serif;letter-spacing:0.2px;right:1766.5px;margin-right:-0.2px;">7,302</div>
<div style="position:absolute;top:1632.8px;font-size:17.5px;line-height:17.5px;color:#111111;font-weight:normal;font-style:normal;white-space:nowrap;font-family:'Liberation Sans',sans-serif;letter-spacing:0.2px;right:1598.5px;margin-right:-0.2px;">855</div>
<div style="position:absolute;top:1632.8px;font-size:17.5px;line-height:17.5px;color:#111111;font-weight:normal;font-style:normal;white-space:nowrap;font-family:'Liberation Sans',sans-serif;letter-spacing:0.2px;right:1460.5px;margin-right:-0.2px;">783</div>
<div style="position:absolute;top:1632.8px;font-size:17.5px;line-height:17.5px;color:#111111;font-weight:normal;font-style:normal;white-space:nowrap;font-family:'Liberation Sans',sans-serif;letter-spacing:0.2px;right:1322.5px;margin-right:-0.2px;">809</div>
<div style="position:absolute;top:1632.8px;font-size:17.5px;line-height:17.5px;color:#111111;font-weight:normal;font-style:normal;white-space:nowrap;font-family:'Liberation Sans',sans-serif;letter-spacing:0.2px;right:1184.5px;margin-right:-0.2px;">747</div>
<div style="position:absolute;top:1632.8px;font-size:17.5px;line-height:17.5px;color:#111111;font-weight:normal;font-style:normal;white-space:nowrap;font-family:'Liberation Sans',sans-serif;letter-spacing:0.2px;right:1046.5px;margin-right:-0.2px;">691</div>
<div style="position:absolute;top:1632.8px;font-size:17.5px;line-height:17.5px;color:#111111;font-weight:normal;font-style:normal;white-space:nowrap;font-family:'Liberation Sans',sans-serif;letter-spacing:0.2px;right:908.5px;margin-right:-0.2px;">643</div>
<div style="position:absolute;top:1632.8px;font-size:17.5px;line-height:17.5px;color:#111111;font-weight:normal;font-style:normal;white-space:nowrap;font-family:'Liberation Sans',sans-serif;letter-spacing:0.2px;right:770.5px;margin-right:-0.2px;">606</div>
<div style="position:absolute;top:1632.8px;font-size:17.5px;line-height:17.5px;color:#111111;font-weight:normal;font-style:normal;white-space:nowrap;font-family:'Liberation Sans',sans-serif;letter-spacing:0.2px;right:632.0px;margin-right:-0.2px;">573</div>
<div style="position:absolute;top:1632.8px;font-size:17.5px;line-height:17.5px;color:#111111;font-weight:normal;font-style:normal;white-space:nowrap;font-family:'Liberation Sans',sans-serif;letter-spacing:0.2px;right:494.5px;margin-right:-0.2px;">546</div>
<div style="position:absolute;top:1632.8px;font-size:17.5px;line-height:17.5px;color:#111111;font-weight:normal;font-style:normal;white-space:nowrap;font-family:'Liberation Sans',sans-serif;letter-spacing:0.2px;right:356.5px;margin-right:-0.2px;">519</div>
<div style="position:absolute;top:1632.8px;font-size:17.5px;line-height:17.5px;color:#111111;font-weight:normal;font-style:normal;white-space:nowrap;font-family:'Liberation Sans',sans-serif;letter-spacing:0.2px;right:218.5px;margin-right:-0.2px;">496</div>
<div style="position:absolute;top:1632.8px;font-size:17.5px;line-height:17.5px;color:#111111;font-weight:normal;font-style:normal;white-space:nowrap;font-family:'Liberation Sans',sans-serif;letter-spacing:0.2px;right:80.5px;margin-right:-0.2px;">473</div>
<div style="position:absolute;top:1656.3px;font-size:17px;line-height:17px;color:#111111;font-weight:normal;font-style:normal;white-space:nowrap;font-family:'Liberation Sans',sans-serif;letter-spacing:0.35px;left:75.5px;">Non-Current Assets</div>
<div style="position:absolute;top:1655.9px;font-size:17.5px;line-height:17.5px;color:#111111;font-weight:normal;font-style:normal;white-space:nowrap;font-family:'Liberation Sans',sans-serif;letter-spacing:0.2px;right:2247.5px;margin-right:-0.2px;">123</div>
<div style="position:absolute;top:1655.9px;font-size:17.5px;line-height:17.5px;color:#111111;font-weight:normal;font-style:normal;white-space:nowrap;font-family:'Liberation Sans',sans-serif;letter-spacing:0.2px;right:2127.5px;margin-right:-0.2px;">110</div>
<div style="position:absolute;top:1655.9px;font-size:17.5px;line-height:17.5px;color:#111111;font-weight:normal;font-style:normal;white-space:nowrap;font-family:'Liberation Sans',sans-serif;letter-spacing:0.2px;right:2007.5px;margin-right:-0.2px;">97</div>
<div style="position:absolute;top:1655.9px;font-size:17.5px;line-height:17.5px;color:#111111;font-weight:normal;font-style:normal;white-space:nowrap;font-family:'Liberation Sans',sans-serif;letter-spacing:0.2px;right:1887.0px;margin-right:-0.2px;">83</div>
<div style="position:absolute;top:1655.9px;font-size:17.5px;line-height:17.5px;color:#111111;font-weight:normal;font-style:normal;white-space:nowrap;font-family:'Liberation Sans',sans-serif;letter-spacing:0.2px;right:1766.5px;margin-right:-0.2px;">70</div>
<div style="position:absolute;top:1655.9px;font-size:17.5px;line-height:17.5px;color:#111111;font-weight:normal;font-style:normal;white-space:nowrap;font-family:'Liberation Sans',sans-serif;letter-spacing:0.2px;right:1598.5px;margin-right:-0.2px;">21</div>
<div style="position:absolute;top:1655.9px;font-size:17.5px;line-height:17.5px;color:#111111;font-weight:normal;font-style:normal;white-space:nowrap;font-family:'Liberation Sans',sans-serif;letter-spacing:0.2px;right:1460.5px;margin-right:-0.2px;">48</div>
<div style="position:absolute;top:1655.9px;font-size:17.5px;line-height:17.5px;color:#111111;font-weight:normal;font-style:normal;white-space:nowrap;font-family:'Liberation Sans',sans-serif;letter-spacing:0.2px;right:1322.5px;margin-right:-0.2px;">73</div>
<div style="position:absolute;top:1655.9px;font-size:17.5px;line-height:17.5px;color:#111111;font-weight:normal;font-style:normal;white-space:nowrap;font-family:'Liberation Sans',sans-serif;letter-spacing:0.2px;right:1184.5px;margin-right:-0.2px;">93</div>
<div style="position:absolute;top:1655.9px;font-size:17.5px;line-height:17.5px;color:#111111;font-weight:normal;font-style:normal;white-space:nowrap;font-family:'Liberation Sans',sans-serif;letter-spacing:0.2px;right:1046.5px;margin-right:-0.2px;">109</div>
<div style="position:absolute;top:1655.9px;font-size:17.5px;line-height:17.5px;color:#111111;font-weight:normal;font-style:normal;white-space:nowrap;font-family:'Liberation Sans',sans-serif;letter-spacing:0.2px;right:908.5px;margin-right:-0.2px;">123</div>
<div style="position:absolute;top:1655.9px;font-size:17.5px;line-height:17.5px;color:#111111;font-weight:normal;font-style:normal;white-space:nowrap;font-family:'Liberation Sans',sans-serif;letter-spacing:0.2px;right:770.5px;margin-right:-0.2px;">125</div>
<div style="position:absolute;top:1655.9px;font-size:17.5px;line-height:17.5px;color:#111111;font-weight:normal;font-style:normal;white-space:nowrap;font-family:'Liberation Sans',sans-serif;letter-spacing:0.2px;right:632.0px;margin-right:-0.2px;">128</div>
<div style="position:absolute;top:1655.9px;font-size:17.5px;line-height:17.5px;color:#111111;font-weight:normal;font-style:normal;white-space:nowrap;font-family:'Liberation Sans',sans-serif;letter-spacing:0.2px;right:494.5px;margin-right:-0.2px;">127</div>
<div style="position:absolute;top:1655.9px;font-size:17.5px;line-height:17.5px;color:#111111;font-weight:normal;font-style:normal;white-space:nowrap;font-family:'Liberation Sans',sans-serif;letter-spacing:0.2px;right:356.5px;margin-right:-0.2px;">126</div>
<div style="position:absolute;top:1655.9px;font-size:17.5px;line-height:17.5px;color:#111111;font-weight:normal;font-style:normal;white-space:nowrap;font-family:'Liberation Sans',sans-serif;letter-spacing:0.2px;right:218.5px;margin-right:-0.2px;">124</div>
<div style="position:absolute;top:1655.9px;font-size:17.5px;line-height:17.5px;color:#111111;font-weight:normal;font-style:normal;white-space:nowrap;font-family:'Liberation Sans',sans-serif;letter-spacing:0.2px;right:80.5px;margin-right:-0.2px;">123</div>
<svg style="left:0px;top:0px" width="2902" height="1762"><line x1="71.2" y1="1158.0" x2="1044.4" y2="1158.0" stroke="#4ea6d6" stroke-width="2.2"/><line x1="71.2" y1="1206.1" x2="1044.4" y2="1206.1" stroke="#62abd2" stroke-width="1.1"/><line x1="71.2" y1="1254.3" x2="1044.4" y2="1254.3" stroke="#62abd2" stroke-width="1.1"/><line x1="71.2" y1="1302.4" x2="1044.4" y2="1302.4" stroke="#62abd2" stroke-width="1.1"/><line x1="71.2" y1="1350.6" x2="1044.4" y2="1350.6" stroke="#62abd2" stroke-width="1.1"/><line x1="71.2" y1="1398.7" x2="1044.4" y2="1398.7" stroke="#62abd2" stroke-width="1.1"/><line x1="71.2" y1="1446.9" x2="1044.4" y2="1446.9" stroke="#4a5f8a" stroke-width="1.6"/><line x1="71.2" y1="1495.0" x2="1044.4" y2="1495.0" stroke="#62abd2" stroke-width="1.1"/><line x1="71.2" y1="1158" x2="71.2" y2="1495" stroke="#6aa6c4" stroke-width="1.2"/><line x1="265.8" y1="1158" x2="265.8" y2="1495" stroke="#62abd2" stroke-width="1.2"/><line x1="460.5" y1="1158" x2="460.5" y2="1495" stroke="#62abd2" stroke-width="1.2"/><line x1="655.1" y1="1158" x2="655.1" y2="1495" stroke="#62abd2" stroke-width="1.2"/><line x1="849.8" y1="1158" x2="849.8" y2="1495" stroke="#62abd2" stroke-width="1.2"/><line x1="1044.4" y1="1158" x2="1044.4" y2="1495" stroke="#6aa6c4" stroke-width="1.2"/><polyline points="168.5,1438.8 363.2,1418.7 557.8,1381.1 752.4,1314.9 947.1,1212.2" fill="none" stroke="#e8776a" stroke-width="3.2" stroke-linejoin="round"/><circle cx="168.5" cy="1438.8" r="5.2" fill="#e8776a"/><circle cx="363.2" cy="1418.7" r="5.2" fill="#e8776a"/><circle cx="557.8" cy="1381.1" r="5.2" fill="#e8776a"/><circle cx="752.4" cy="1314.9" r="5.2" fill="#e8776a"/><circle cx="947.1" cy="1212.2" r="5.2" fill="#e8776a"/><polyline points="168.5,1456.2 363.2,1449.8 557.8,1429.8 752.4,1382.6 947.1,1302.0" fill="none" stroke="#5f9a3e" stroke-width="3.2" stroke-linejoin="round"/><circle cx="168.5" cy="1456.2" r="5.2" fill="#5f9a3e"/><circle cx="363.2" cy="1449.8" r="5.2" fill="#5f9a3e"/><circle cx="557.8" cy="1429.8" r="5.2" fill="#5f9a3e"/><circle cx="752.4" cy="1382.6" r="5.2" fill="#5f9a3e"/><circle cx="947.1" cy="1302.0" r="5.2" fill="#5f9a3e"/><polyline points="168.5,1456.9 363.2,1450.5 557.8,1434.5 752.4,1399.1 947.1,1338.6" fill="none" stroke="#4b4fd1" stroke-width="3.2" stroke-linejoin="round"/><circle cx="168.5" cy="1456.9" r="5.2" fill="#4b4fd1"/><circle cx="363.2" cy="1450.5" r="5.2" fill="#4b4fd1"/><circle cx="557.8" cy="1434.5" r="5.2" fill="#4b4fd1"/><circle cx="752.4" cy="1399.1" r="5.2" fill="#4b4fd1"/><circle cx="947.1" cy="1338.6" r="5.2" fill="#4b4fd1"/></svg>
<div style="position:absolute;top:1148.8px;font-size:18.5px;line-height:18.5px;color:#111111;font-weight:bold;font-style:normal;white-space:nowrap;font-family:'Liberation Sans',sans-serif;letter-spacing:1.6px;left:1066.8px;">12,000</div>
<div style="position:absolute;top:1196.9px;font-size:18.5px;line-height:18.5px;color:#111111;font-weight:bold;font-style:normal;white-space:nowrap;font-family:'Liberation Sans',sans-serif;letter-spacing:1.6px;left:1066.8px;">10,000</div>
<div style="position:absolute;top:1245.1px;font-size:18.5px;line-height:18.5px;color:#111111;font-weight:bold;font-style:normal;white-space:nowrap;font-family:'Liberation Sans',sans-serif;letter-spacing:1.6px;left:1066.8px;">8,000</div>
<div style="position:absolute;top:1293.2px;font-size:18.5px;line-height:18.5px;color:#111111;font-weight:bold;font-style:normal;white-space:nowrap;font-family:'Liberation Sans',sans-serif;letter-spacing:1.6px;left:1066.8px;">6,000</div>
<div style="position:absolute;top:1341.3px;font-size:18.5px;line-height:18.5px;color:#111111;font-weight:bold;font-style:normal;white-space:nowrap;font-family:'Liberation Sans',sans-serif;letter-spacing:1.6px;left:1066.8px;">4,000</div>
<div style="position:absolute;top:1389.5px;font-size:18.5px;line-height:18.5px;color:#111111;font-weight:bold;font-style:normal;white-space:nowrap;font-family:'Liberation Sans',sans-serif;letter-spacing:1.6px;left:1066.8px;">2,000</div>
<div style="position:absolute;top:1437.6px;font-size:18.5px;line-height:18.5px;color:#111111;font-weight:bold;font-style:normal;white-space:nowrap;font-family:'Liberation Sans',sans-serif;letter-spacing:1.6px;left:1066.8px;">-</div>
<div style="position:absolute;top:1485.8px;font-size:18.5px;line-height:18.5px;color:#111111;font-weight:bold;font-style:normal;white-space:nowrap;font-family:'Liberation Sans',sans-serif;letter-spacing:1.6px;left:1061.5px;">(2,000)</div>
<div style="position:absolute;top:1510.8px;font-size:19px;line-height:19px;color:#111111;font-weight:bold;font-style:normal;white-space:nowrap;font-family:'Liberation Sans',sans-serif;letter-spacing:1.1px;left:-431.5px;width:1200px;text-align:center;">2026</div>
<div style="position:absolute;top:1510.8px;font-size:19px;line-height:19px;color:#111111;font-weight:bold;font-style:normal;white-space:nowrap;font-family:'Liberation Sans',sans-serif;letter-spacing:1.1px;left:-236.8px;width:1200px;text-align:center;">2027</div>
<div style="position:absolute;top:1510.8px;font-size:19px;line-height:19px;color:#111111;font-weight:bold;font-style:normal;white-space:nowrap;font-family:'Liberation Sans',sans-serif;letter-spacing:1.1px;left:-42.2px;width:1200px;text-align:center;">2028</div>
<div style="position:absolute;top:1510.8px;font-size:19px;line-height:19px;color:#111111;font-weight:bold;font-style:normal;white-space:nowrap;font-family:'Liberation Sans',sans-serif;letter-spacing:1.1px;left:152.4px;width:1200px;text-align:center;">2029</div>
<div style="position:absolute;top:1510.8px;font-size:19px;line-height:19px;color:#111111;font-weight:bold;font-style:normal;white-space:nowrap;font-family:'Liberation Sans',sans-serif;letter-spacing:1.1px;left:347.1px;width:1200px;text-align:center;">2030</div>
<div style="position:absolute;left:329.6px;top:1128.8px;width:44.4px;height:3.2px;background:#e8776a;"></div>
<div style="position:absolute;left:347.8px;top:1126.4px;width:8px;height:8px;border-radius:4px;background:#e8776a"></div>
<div style="position:absolute;top:1121.7px;font-size:18px;line-height:18px;color:#111111;font-weight:bold;font-style:normal;white-space:nowrap;font-family:'Liberation Sans',sans-serif;letter-spacing:0.9px;left:379.0px;">Revenue</div>
<div style="position:absolute;left:490.0px;top:1128.8px;width:46.8px;height:3.2px;background:#5f9a3e;"></div>
<div style="position:absolute;left:509.4px;top:1126.4px;width:8px;height:8px;border-radius:4px;background:#5f9a3e"></div>
<div style="position:absolute;top:1121.7px;font-size:18px;line-height:18px;color:#111111;font-weight:bold;font-style:normal;white-space:nowrap;font-family:'Liberation Sans',sans-serif;letter-spacing:0.9px;left:545.7px;">EBITDA</div>
<div style="position:absolute;left:652.9px;top:1128.8px;width:46.4px;height:3.2px;background:#4b4fd1;"></div>
<div style="position:absolute;left:672.1px;top:1126.4px;width:8px;height:8px;border-radius:4px;background:#4b4fd1"></div>
<div style="position:absolute;top:1121.7px;font-size:18px;line-height:18px;color:#111111;font-weight:bold;font-style:normal;white-space:nowrap;font-family:'Liberation Sans',sans-serif;letter-spacing:0.9px;left:708.2px;">Net Profit After Tax</div>
<svg style="left:0px;top:0px" width="2902" height="1762"><line x1="1176.6" y1="1158.7" x2="2765" y2="1158.7" stroke="#4ea6d6" stroke-width="2.2"/><line x1="1176.6" y1="1214.9" x2="2765" y2="1214.9" stroke="#62abd2" stroke-width="1.1"/><line x1="1176.6" y1="1271.1" x2="2765" y2="1271.1" stroke="#62abd2" stroke-width="1.1"/><line x1="1176.6" y1="1327.3" x2="2765" y2="1327.3" stroke="#62abd2" stroke-width="1.1"/><line x1="1176.6" y1="1383.6" x2="2765" y2="1383.6" stroke="#62abd2" stroke-width="1.1"/><line x1="1176.6" y1="1439.8" x2="2765" y2="1439.8" stroke="#62abd2" stroke-width="1.1"/><line x1="1176.6" y1="1496.0" x2="2765" y2="1496.0" stroke="#6a9cbc" stroke-width="2.4"/><line x1="1176.6" y1="1158.7" x2="1176.6" y2="1496" stroke="#6aa6c4" stroke-width="1.2"/><line x1="1309.0" y1="1158.7" x2="1309.0" y2="1496" stroke="#62abd2" stroke-width="1.2"/><line x1="1441.3" y1="1158.7" x2="1441.3" y2="1496" stroke="#62abd2" stroke-width="1.2"/><line x1="1573.7" y1="1158.7" x2="1573.7" y2="1496" stroke="#62abd2" stroke-width="1.2"/><line x1="1706.1" y1="1158.7" x2="1706.1" y2="1496" stroke="#62abd2" stroke-width="1.2"/><line x1="1838.4" y1="1158.7" x2="1838.4" y2="1496" stroke="#62abd2" stroke-width="1.2"/><line x1="1970.8" y1="1158.7" x2="1970.8" y2="1496" stroke="#62abd2" stroke-width="1.2"/><line x1="2103.2" y1="1158.7" x2="2103.2" y2="1496" stroke="#62abd2" stroke-width="1.2"/><line x1="2235.5" y1="1158.7" x2="2235.5" y2="1496" stroke="#62abd2" stroke-width="1.2"/><line x1="2367.9" y1="1158.7" x2="2367.9" y2="1496" stroke="#62abd2" stroke-width="1.2"/><line x1="2500.3" y1="1158.7" x2="2500.3" y2="1496" stroke="#62abd2" stroke-width="1.2"/><line x1="2632.6" y1="1158.7" x2="2632.6" y2="1496" stroke="#62abd2" stroke-width="1.2"/><line x1="2765.0" y1="1158.7" x2="2765.0" y2="1496" stroke="#6aa6c4" stroke-width="1.2"/><polyline points="1242.8,1310.5 1375.1,1296.4 1507.5,1285.2 1639.9,1271.1 1772.2,1257.1 1904.6,1245.8 2037.0,1237.4 2169.3,1231.8 2301.7,1223.3 2434.1,1217.7 2566.4,1209.3 2698.8,1203.7" fill="none" stroke="#e8776a" stroke-width="3.2" stroke-linejoin="round"/><circle cx="1242.8" cy="1310.5" r="5.2" fill="#e8776a"/><circle cx="1375.1" cy="1296.4" r="5.2" fill="#e8776a"/><circle cx="1507.5" cy="1285.2" r="5.2" fill="#e8776a"/><circle cx="1639.9" cy="1271.1" r="5.2" fill="#e8776a"/><circle cx="1772.2" cy="1257.1" r="5.2" fill="#e8776a"/><circle cx="1904.6" cy="1245.8" r="5.2" fill="#e8776a"/><circle cx="2037.0" cy="1237.4" r="5.2" fill="#e8776a"/><circle cx="2169.3" cy="1231.8" r="5.2" fill="#e8776a"/><circle cx="2301.7" cy="1223.3" r="5.2" fill="#e8776a"/><circle cx="2434.1" cy="1217.7" r="5.2" fill="#e8776a"/><circle cx="2566.4" cy="1209.3" r="5.2" fill="#e8776a"/><circle cx="2698.8" cy="1203.7" r="5.2" fill="#e8776a"/><polyline points="1242.8,1467.9 1375.1,1459.5 1507.5,1448.2 1639.9,1437.0 1772.2,1425.7 1904.6,1414.5 2037.0,1408.9 2169.3,1403.2 2301.7,1397.6 2434.1,1392.0 2566.4,1386.4 2698.8,1380.8" fill="none" stroke="#5f9a3e" stroke-width="3.2" stroke-linejoin="round"/><circle cx="1242.8" cy="1467.9" r="5.2" fill="#5f9a3e"/><circle cx="1375.1" cy="1459.5" r="5.2" fill="#5f9a3e"/><circle cx="1507.5" cy="1448.2" r="5.2" fill="#5f9a3e"/><circle cx="1639.9" cy="1437.0" r="5.2" fill="#5f9a3e"/><circle cx="1772.2" cy="1425.7" r="5.2" fill="#5f9a3e"/><circle cx="1904.6" cy="1414.5" r="5.2" fill="#5f9a3e"/><circle cx="2037.0" cy="1408.9" r="5.2" fill="#5f9a3e"/><circle cx="2169.3" cy="1403.2" r="5.2" fill="#5f9a3e"/><circle cx="2301.7" cy="1397.6" r="5.2" fill="#5f9a3e"/><circle cx="2434.1" cy="1392.0" r="5.2" fill="#5f9a3e"/><circle cx="2566.4" cy="1386.4" r="5.2" fill="#5f9a3e"/><circle cx="2698.8" cy="1380.8" r="5.2" fill="#5f9a3e"/><polyline points="1242.8,1473.5 1375.1,1462.3 1507.5,1453.8 1639.9,1442.6 1772.2,1434.2 1904.6,1422.9 2037.0,1417.3 2169.3,1411.7 2301.7,1406.1 2434.1,1400.4 2566.4,1394.8 2698.8,1389.2" fill="none" stroke="#4b4fd1" stroke-width="3.2" stroke-linejoin="round"/><circle cx="1242.8" cy="1473.5" r="5.2" fill="#4b4fd1"/><circle cx="1375.1" cy="1462.3" r="5.2" fill="#4b4fd1"/><circle cx="1507.5" cy="1453.8" r="5.2" fill="#4b4fd1"/><circle cx="1639.9" cy="1442.6" r="5.2" fill="#4b4fd1"/><circle cx="1772.2" cy="1434.2" r="5.2" fill="#4b4fd1"/><circle cx="1904.6" cy="1422.9" r="5.2" fill="#4b4fd1"/><circle cx="2037.0" cy="1417.3" r="5.2" fill="#4b4fd1"/><circle cx="2169.3" cy="1411.7" r="5.2" fill="#4b4fd1"/><circle cx="2301.7" cy="1406.1" r="5.2" fill="#4b4fd1"/><circle cx="2434.1" cy="1400.4" r="5.2" fill="#4b4fd1"/><circle cx="2566.4" cy="1394.8" r="5.2" fill="#4b4fd1"/><circle cx="2698.8" cy="1389.2" r="5.2" fill="#4b4fd1"/></svg>
<div style="position:absolute;top:1149.5px;font-size:18.5px;line-height:18.5px;color:#111111;font-weight:bold;font-style:normal;white-space:nowrap;font-family:'Liberation Sans',sans-serif;letter-spacing:1.6px;left:2786.9px;">60</div>
<div style="position:absolute;top:1205.7px;font-size:18.5px;line-height:18.5px;color:#111111;font-weight:bold;font-style:normal;white-space:nowrap;font-family:'Liberation Sans',sans-serif;letter-spacing:1.6px;left:2786.9px;">40</div>
<div style="position:absolute;top:1261.9px;font-size:18.5px;line-height:18.5px;color:#111111;font-weight:bold;font-style:normal;white-space:nowrap;font-family:'Liberation Sans',sans-serif;letter-spacing:1.6px;left:2786.9px;">20</div>
<div style="position:absolute;top:1318.1px;font-size:18.5px;line-height:18.5px;color:#111111;font-weight:bold;font-style:normal;white-space:nowrap;font-family:'Liberation Sans',sans-serif;letter-spacing:1.6px;left:2786.9px;">-</div>
<div style="position:absolute;top:1374.3px;font-size:18.5px;line-height:18.5px;color:#111111;font-weight:bold;font-style:normal;white-space:nowrap;font-family:'Liberation Sans',sans-serif;letter-spacing:1.6px;left:2781.6px;">(20)</div>
<div style="position:absolute;top:1430.6px;font-size:18.5px;line-height:18.5px;color:#111111;font-weight:bold;font-style:normal;white-space:nowrap;font-family:'Liberation Sans',sans-serif;letter-spacing:1.6px;left:2781.6px;">(40)</div>
<div style="position:absolute;top:1486.8px;font-size:18.5px;line-height:18.5px;color:#111111;font-weight:bold;font-style:normal;white-space:nowrap;font-family:'Liberation Sans',sans-serif;letter-spacing:1.6px;left:2781.6px;">(60)</div>
<div style="position:absolute;top:1511.8px;font-size:19px;line-height:19px;color:#111111;font-weight:bold;font-style:normal;white-space:nowrap;font-family:'Liberation Sans',sans-serif;letter-spacing:1.1px;left:642.8px;width:1200px;text-align:center;">Jan</div>
<div style="position:absolute;top:1511.8px;font-size:19px;line-height:19px;color:#111111;font-weight:bold;font-style:normal;white-space:nowrap;font-family:'Liberation Sans',sans-serif;letter-spacing:1.1px;left:775.1px;width:1200px;text-align:center;">Feb</div>
<div style="position:absolute;top:1511.8px;font-size:19px;line-height:19px;color:#111111;font-weight:bold;font-style:normal;white-space:nowrap;font-family:'Liberation Sans',sans-serif;letter-spacing:1.1px;left:907.5px;width:1200px;text-align:center;">Mar</div>
<div style="position:absolute;top:1511.8px;font-size:19px;line-height:19px;color:#111111;font-weight:bold;font-style:normal;white-space:nowrap;font-family:'Liberation Sans',sans-serif;letter-spacing:1.1px;left:1039.9px;width:1200px;text-align:center;">Apr</div>
<div style="position:absolute;top:1511.8px;font-size:19px;line-height:19px;color:#111111;font-weight:bold;font-style:normal;white-space:nowrap;font-family:'Liberation Sans',sans-serif;letter-spacing:1.1px;left:1172.2px;width:1200px;text-align:center;">May</div>
<div style="position:absolute;top:1511.8px;font-size:19px;line-height:19px;color:#111111;font-weight:bold;font-style:normal;white-space:nowrap;font-family:'Liberation Sans',sans-serif;letter-spacing:1.1px;left:1304.6px;width:1200px;text-align:center;">Jun</div>
<div style="position:absolute;top:1511.8px;font-size:19px;line-height:19px;color:#111111;font-weight:bold;font-style:normal;white-space:nowrap;font-family:'Liberation Sans',sans-serif;letter-spacing:1.1px;left:1437.0px;width:1200px;text-align:center;">Jul</div>
<div style="position:absolute;top:1511.8px;font-size:19px;line-height:19px;color:#111111;font-weight:bold;font-style:normal;white-space:nowrap;font-family:'Liberation Sans',sans-serif;letter-spacing:1.1px;left:1569.3px;width:1200px;text-align:center;">Aug</div>
<div style="position:absolute;top:1511.8px;font-size:19px;line-height:19px;color:#111111;font-weight:bold;font-style:normal;white-space:nowrap;font-family:'Liberation Sans',sans-serif;letter-spacing:1.1px;left:1701.7px;width:1200px;text-align:center;">Sep</div>
<div style="position:absolute;top:1511.8px;font-size:19px;line-height:19px;color:#111111;font-weight:bold;font-style:normal;white-space:nowrap;font-family:'Liberation Sans',sans-serif;letter-spacing:1.1px;left:1834.1px;width:1200px;text-align:center;">Oct</div>
<div style="position:absolute;top:1511.8px;font-size:19px;line-height:19px;color:#111111;font-weight:bold;font-style:normal;white-space:nowrap;font-family:'Liberation Sans',sans-serif;letter-spacing:1.1px;left:1966.4px;width:1200px;text-align:center;">Nov</div>
<div style="position:absolute;top:1511.8px;font-size:19px;line-height:19px;color:#111111;font-weight:bold;font-style:normal;white-space:nowrap;font-family:'Liberation Sans',sans-serif;letter-spacing:1.1px;left:2098.8px;width:1200px;text-align:center;">Dec</div>
<div style="position:absolute;left:1726.0px;top:1128.8px;width:44.8px;height:3.2px;background:#e8776a;"></div>
<div style="position:absolute;left:1744.4px;top:1126.4px;width:8px;height:8px;border-radius:4px;background:#e8776a"></div>
<div style="position:absolute;top:1121.7px;font-size:18px;line-height:18px;color:#111111;font-weight:bold;font-style:normal;white-space:nowrap;font-family:'Liberation Sans',sans-serif;letter-spacing:0.9px;left:1775.0px;">Revenue</div>
<div style="position:absolute;left:1886.7px;top:1128.8px;width:44.9px;height:3.2px;background:#5f9a3e;"></div>
<div style="position:absolute;left:1905.2px;top:1126.4px;width:8px;height:8px;border-radius:4px;background:#5f9a3e"></div>
<div style="position:absolute;top:1121.7px;font-size:18px;line-height:18px;color:#111111;font-weight:bold;font-style:normal;white-space:nowrap;font-family:'Liberation Sans',sans-serif;letter-spacing:0.9px;left:1942.0px;">EBITDA</div>
<div style="position:absolute;left:2050.0px;top:1128.8px;width:45.0px;height:3.2px;background:#4b4fd1;"></div>
<div style="position:absolute;left:2068.5px;top:1126.4px;width:8px;height:8px;border-radius:4px;background:#4b4fd1"></div>
<div style="position:absolute;top:1121.7px;font-size:18px;line-height:18px;color:#111111;font-weight:bold;font-style:normal;white-space:nowrap;font-family:'Liberation Sans',sans-serif;letter-spacing:0.9px;left:2104.0px;">Net Profit After Tax</div>
<div style="position:absolute;left:2860.0px;top:278.0px;width:31.0px;height:1392.0px;background:#141414;"></div>
<svg style="left:2868px;top:285px" width="16" height="11"><polygon points="8,0 16,11 0,11" fill="#9a9a9a" stroke="#9a9a9a" stroke-width="1" stroke-linejoin="round"/></svg>
<div style="position:absolute;left:2870.0px;top:304.0px;width:12.0px;height:531.0px;background:#a0a0a0;border-radius:6px;"></div>
<svg style="left:2868px;top:1654px" width="16" height="11"><polygon points="0,0 16,0 8,11" fill="#9a9a9a" stroke="#9a9a9a" stroke-width="1" stroke-linejoin="round"/></svg>
<div style="position:absolute;left:11.0px;top:1670.0px;width:2880.0px;height:48.0px;background:#0a0a0a;"></div>
<div style="position:absolute;left:11.0px;top:1670.0px;width:2849.0px;height:1.2px;background:#2e2e2e;"></div>
<div style="position:absolute;left:1584.0px;top:1670.0px;width:12.0px;height:12.0px;background:#ffffff;"></div>
<div style="position:absolute;left:1706.0px;top:1670.0px;width:12.0px;height:12.0px;background:#ffffff;"></div>
<div style="position:absolute;left:1572.0px;top:1670.0px;width:22.0px;height:22.0px;background:#0a0a0a;border-top-right-radius:10px;"></div>
<div style="position:absolute;left:1708.0px;top:1670.0px;width:22.0px;height:22.0px;background:#0a0a0a;border-top-left-radius:10px;"></div>
<svg style="left:45px;top:1686px" width="10" height="16"><polyline points="8,1 2,8 8,15" fill="none" stroke="#bdbdbd" stroke-width="1.6"/></svg>
<svg style="left:94px;top:1686px" width="10" height="16"><polyline points="2,1 8,8 2,15" fill="none" stroke="#bdbdbd" stroke-width="1.6"/></svg>
<div style="position:absolute;top:1686.8px;font-size:19px;line-height:19px;color:#f0f0f0;font-weight:normal;font-style:normal;white-space:nowrap;font-family:'Liberation Sans',sans-serif;letter-spacing:1.0px;left:190.0px;">Contents</div>
<div style="position:absolute;left:292.0px;top:1680.0px;width:1.2px;height:28.0px;background:#8a8a8a;"></div>
<div style="position:absolute;left:433.0px;top:1680.0px;width:1.2px;height:28.0px;background:#8a8a8a;"></div>
<div style="position:absolute;left:553.0px;top:1680.0px;width:1.2px;height:28.0px;background:#8a8a8a;"></div>
<div style="position:absolute;left:724.0px;top:1680.0px;width:1.2px;height:28.0px;background:#8a8a8a;"></div>
<div style="position:absolute;left:825.5px;top:1680.0px;width:1.2px;height:28.0px;background:#8a8a8a;"></div>
<div style="position:absolute;left:925.0px;top:1680.0px;width:1.2px;height:28.0px;background:#8a8a8a;"></div>
<div style="position:absolute;left:1051.0px;top:1680.0px;width:1.2px;height:28.0px;background:#8a8a8a;"></div>
<div style="position:absolute;left:1154.5px;top:1680.0px;width:1.2px;height:28.0px;background:#8a8a8a;"></div>
<div style="position:absolute;left:1209.0px;top:1680.0px;width:1.2px;height:28.0px;background:#8a8a8a;"></div>
<div style="position:absolute;left:1270.0px;top:1680.0px;width:1.2px;height:28.0px;background:#8a8a8a;"></div>
<div style="position:absolute;left:1331.0px;top:1680.0px;width:1.2px;height:28.0px;background:#8a8a8a;"></div>
<div style="position:absolute;left:1459.0px;top:1680.0px;width:1.2px;height:28.0px;background:#8a8a8a;"></div>
<div style="position:absolute;left:1775.4px;top:1680.0px;width:1.2px;height:28.0px;background:#8a8a8a;"></div>
<div style="position:absolute;left:1860.6px;top:1680.0px;width:1.2px;height:28.0px;background:#8a8a8a;"></div>
<div style="position:absolute;left:1959.0px;top:1680.0px;width:1.2px;height:28.0px;background:#8a8a8a;"></div>
<div style="position:absolute;left:2035.7px;top:1680.0px;width:1.2px;height:28.0px;background:#8a8a8a;"></div>
<div style="position:absolute;left:299.0px;top:1676.0px;width:128.0px;height:36.0px;background:#fdf06b;border-radius:6px;"></div>
<div style="position:absolute;top:1686.8px;font-size:19px;line-height:19px;color:#111111;font-weight:normal;font-style:normal;white-space:nowrap;font-family:'Liberation Sans',sans-serif;letter-spacing:0.5px;left:-237.0px;width:1200px;text-align:center;">Dashboard</div>
<div style="position:absolute;left:440.0px;top:1676.0px;width:106.0px;height:36.0px;background:#fdf06b;border-radius:6px;"></div>
<div style="position:absolute;top:1686.8px;font-size:19px;line-height:19px;color:#111111;font-weight:normal;font-style:normal;white-space:nowrap;font-family:'Liberation Sans',sans-serif;letter-spacing:0.5px;left:-107.0px;width:1200px;text-align:center;">Revenue</div>
<div style="position:absolute;left:559.0px;top:1676.0px;width:158.0px;height:36.0px;background:#fdf06b;border-radius:6px;"></div>
<div style="position:absolute;top:1686.8px;font-size:19px;line-height:19px;color:#111111;font-weight:normal;font-style:normal;white-space:nowrap;font-family:'Liberation Sans',sans-serif;letter-spacing:0.5px;left:38.0px;width:1200px;text-align:center;">COGS &amp; OPEX</div>
<div style="position:absolute;left:730.5px;top:1676.0px;width:88.5px;height:36.0px;background:#fdf06b;border-radius:6px;"></div>
<div style="position:absolute;top:1686.8px;font-size:19px;line-height:19px;color:#111111;font-weight:normal;font-style:normal;white-space:nowrap;font-family:'Liberation Sans',sans-serif;letter-spacing:0.5px;left:174.8px;width:1200px;text-align:center;">Payroll</div>
<div style="position:absolute;left:832.0px;top:1676.0px;width:86.7px;height:36.0px;background:#fdf06b;border-radius:6px;"></div>
<div style="position:absolute;top:1686.8px;font-size:19px;line-height:19px;color:#111111;font-weight:normal;font-style:normal;white-space:nowrap;font-family:'Liberation Sans',sans-serif;letter-spacing:0.5px;left:275.4px;width:1200px;text-align:center;">CAPEX</div>
<div style="position:absolute;left:932.0px;top:1676.0px;width:113.0px;height:36.0px;background:#fdf06b;border-radius:6px;"></div>
<div style="position:absolute;top:1686.8px;font-size:19px;line-height:19px;color:#111111;font-weight:normal;font-style:normal;white-space:nowrap;font-family:'Liberation Sans',sans-serif;letter-spacing:0.5px;left:388.5px;width:1200px;text-align:center;">CapTable</div>
<div style="position:absolute;left:1058.0px;top:1676.0px;width:89.6px;height:36.0px;background:#fdf06b;border-radius:6px;"></div>
<div style="position:absolute;top:1686.8px;font-size:19px;line-height:19px;color:#111111;font-weight:normal;font-style:normal;white-space:nowrap;font-family:'Liberation Sans',sans-serif;letter-spacing:0.5px;left:502.8px;width:1200px;text-align:center;">Capital</div>
<div style="position:absolute;left:1161.0px;top:1676.0px;width:41.8px;height:36.0px;background:#4ab2e6;border-radius:6px;"></div>
<div style="position:absolute;top:1686.8px;font-size:19px;line-height:19px;color:#111111;font-weight:normal;font-style:normal;white-space:nowrap;font-family:'Liberation Sans',sans-serif;letter-spacing:0.5px;left:581.9px;width:1200px;text-align:center;">IS</div>
<div style="position:absolute;left:1216.0px;top:1676.0px;width:47.6px;height:36.0px;background:#4ab2e6;border-radius:6px;"></div>
<div style="position:absolute;top:1686.8px;font-size:19px;line-height:19px;color:#111111;font-weight:normal;font-style:normal;white-space:nowrap;font-family:'Liberation Sans',sans-serif;letter-spacing:0.5px;left:639.8px;width:1200px;text-align:center;">CF</div>
<div style="position:absolute;left:1277.0px;top:1676.0px;width:48.0px;height:36.0px;background:#4ab2e6;border-radius:6px;"></div>
<div style="position:absolute;top:1686.8px;font-size:19px;line-height:19px;color:#111111;font-weight:normal;font-style:normal;white-space:nowrap;font-family:'Liberation Sans',sans-serif;letter-spacing:0.5px;left:701.0px;width:1200px;text-align:center;">BS</div>
<div style="position:absolute;left:1338.3px;top:1676.0px;width:114.5px;height:36.0px;background:#4ab2e6;border-radius:6px;"></div>
<div style="position:absolute;top:1686.8px;font-size:19px;line-height:19px;color:#111111;font-weight:normal;font-style:normal;white-space:nowrap;font-family:'Liberation Sans',sans-serif;letter-spacing:0.5px;left:795.5px;width:1200px;text-align:center;">Scenarios</div>
<div style="position:absolute;left:1466.0px;top:1676.0px;width:114.6px;height:36.0px;background:#4ab2e6;border-radius:6px;"></div>
<div style="position:absolute;top:1686.8px;font-size:19px;line-height:19px;color:#111111;font-weight:normal;font-style:normal;white-space:nowrap;font-family:'Liberation Sans',sans-serif;letter-spacing:0.5px;left:923.3px;width:1200px;text-align:center;">Valuation</div>
<div style="position:absolute;left:1721.0px;top:1676.0px;width:47.5px;height:36.0px;background:#4ab2e6;border-radius:6px;"></div>
<div style="position:absolute;top:1686.8px;font-size:19px;line-height:19px;color:#111111;font-weight:normal;font-style:normal;white-space:nowrap;font-family:'Liberation Sans',sans-serif;letter-spacing:0.5px;left:1144.8px;width:1200px;text-align:center;">BE</div>
<div style="position:absolute;left:1782.0px;top:1676.0px;width:71.7px;height:36.0px;background:#4ab2e6;border-radius:6px;"></div>
<div style="position:absolute;top:1686.8px;font-size:19px;line-height:19px;color:#111111;font-weight:normal;font-style:normal;white-space:nowrap;font-family:'Liberation Sans',sans-serif;letter-spacing:0.5px;left:1217.8px;width:1200px;text-align:center;">ROIC</div>
<div style="position:absolute;left:1867.0px;top:1676.0px;width:84.6px;height:36.0px;background:#4ab2e6;border-radius:6px;"></div>
<div style="position:absolute;top:1686.8px;font-size:19px;line-height:19px;color:#111111;font-weight:normal;font-style:normal;white-space:nowrap;font-family:'Liberation Sans',sans-serif;letter-spacing:0.5px;left:1309.3px;width:1200px;text-align:center;">Charts</div>
<div style="position:absolute;left:1965.0px;top:1676.0px;width:63.5px;height:36.0px;background:#4ab2e6;border-radius:6px;"></div>
<div style="position:absolute;top:1686.8px;font-size:19px;line-height:19px;color:#111111;font-weight:normal;font-style:normal;white-space:nowrap;font-family:'Liberation Sans',sans-serif;letter-spacing:0.5px;left:1396.8px;width:1200px;text-align:center;">KPIs</div>
<div style="position:absolute;left:2042.0px;top:1676.0px;width:30.0px;height:36.0px;background:#4ab2e6;border-radius:6px 0 0 6px;"></div>
<div style="position:absolute;top:1686.8px;font-size:19px;line-height:19px;color:#111111;font-weight:normal;font-style:normal;white-space:nowrap;font-family:'Liberation Sans',sans-serif;left:2050.0px;">Sc</div>
<div style="position:absolute;left:1594px;top:1669px;width:114px;height:43px;border-radius:0 0 8px 8px;background:linear-gradient(#ffffff 20%, #e6f2fa 60%, #b9ddf2)"></div>
<div style="position:absolute;top:1681.2px;font-size:19.5px;line-height:19.5px;color:#111111;font-weight:normal;font-style:normal;white-space:nowrap;font-family:'Liberation Sans',sans-serif;letter-spacing:0.7px;left:1051.0px;width:1200px;text-align:center;">Summary</div>
<div style="position:absolute;left:1606.0px;top:1705.0px;width:90.0px;height:3.0px;background:#1d7a3e;"></div>
<div style="position:absolute;left:1587.0px;top:1680.0px;width:1.2px;height:28.0px;background:#9a9a9a;"></div>
<div style="position:absolute;left:1714.0px;top:1680.0px;width:1.2px;height:28.0px;background:#9a9a9a;"></div>
<div style="position:absolute;left:2088px;top:1689px;width:4px;height:4px;border-radius:2px;background:#e0e0e0"></div>
<div style="position:absolute;left:2094px;top:1689px;width:4px;height:4px;border-radius:2px;background:#e0e0e0"></div>
<div style="position:absolute;left:2100px;top:1689px;width:4px;height:4px;border-radius:2px;background:#e0e0e0"></div>
<div style="position:absolute;left:2134.0px;top:1692.0px;width:18.0px;height:1.7px;background:#e0e0e0;"></div>
<div style="position:absolute;left:2142.2px;top:1684.0px;width:1.7px;height:18.0px;background:#e0e0e0;"></div>
<div style="position:absolute;left:2189.5px;top:1686px;width:4px;height:4px;border-radius:2px;background:#e0e0e0"></div>
<div style="position:absolute;left:2189.5px;top:1693px;width:4px;height:4px;border-radius:2px;background:#e0e0e0"></div>
<div style="position:absolute;left:2189.5px;top:1700px;width:4px;height:4px;border-radius:2px;background:#e0e0e0"></div>
<div style="position:absolute;left:2216.0px;top:1679.0px;width:644.0px;height:30.0px;background:#151515;border-radius:15px;"></div>
<svg style="left:2224px;top:1687px" width="11" height="15"><polygon points="11,0 11,15 0,7.5" fill="#9a9a9a"/></svg>
<div style="position:absolute;left:2242.0px;top:1687.5px;width:535.0px;height:13.0px;background:#9e9e9e;border-radius:6.5px;"></div>
<svg style="left:2842px;top:1687px" width="11" height="15"><polygon points="0,0 0,15 11,7.5" fill="#9a9a9a"/></svg>
<div style="position:absolute;left:11.0px;top:1718.0px;width:2880.0px;height:1.2px;background:#2c2c2c;"></div>
<div style="position:absolute;left:11.0px;top:1719.0px;width:2880.0px;height:31.0px;background:#141414;"></div>
<div style="position:absolute;top:1727.4px;font-size:16px;line-height:16px;color:#e8e8e8;font-weight:normal;font-style:normal;white-space:nowrap;font-family:'Liberation Sans',sans-serif;left:27.0px;">Ready</div>
<svg style="left:98px;top:1724px" width="24" height="22"><rect x="1" y="1" width="20" height="17" fill="none" stroke="#d8d8d8" stroke-width="1.5"/><path d="M1,5 H21 M4,9 H9 M4,13 H8" stroke="#d8d8d8" stroke-width="1.4"/><circle cx="15" cy="14" r="5" fill="#141414" stroke="#d8d8d8" stroke-width="1.6"/><circle cx="15" cy="14" r="2" fill="#d8d8d8"/></svg>
<svg style="left:144px;top:1722px" width="26" height="26"><circle cx="12" cy="4" r="2.6" fill="none" stroke="#d8d8d8" stroke-width="1.5"/><path d="M2,9 L12,11 L22,7 M12,11 L10,17 L5,24 M10,17 L15,19 M14,15 L21,24 M21,15 L14,24" fill="none" stroke="#d8d8d8" stroke-width="1.5"/></svg>
<div style="position:absolute;top:1727.4px;font-size:16px;line-height:16px;color:#f0f0f0;font-weight:bold;font-style:normal;white-space:nowrap;font-family:'Liberation Sans',sans-serif;letter-spacing:0.1px;left:173.0px;">Accessibility: Investigate</div>
<div style="position:absolute;left:2445.6px;top:1719.0px;width:60.0px;height:31.0px;background:#262626;"></div>
<svg style="left:2464px;top:1725px" width="20" height="20"><rect x="1" y="1" width="18" height="18" fill="none" stroke="#d8d8d8" stroke-width="1.5"/><path d="M1,7 H19 M1,13 H19 M7,1 V19 M13,1 V19" stroke="#d8d8d8" stroke-width="1.5"/></svg>
<svg style="left:2525px;top:1725px" width="22" height="20"><rect x="1" y="1" width="20" height="18" fill="none" stroke="#d8d8d8" stroke-width="1.5"/><rect x="5" y="4" width="12" height="13" fill="none" stroke="#d8d8d8" stroke-width="1.4"/><path d="M7,8 H15 M7,11 H15 M7,14 H15" stroke="#d8d8d8" stroke-width="1.2"/></svg>
<svg style="left:2584px;top:1725px" width="22" height="20"><rect x="1" y="1" width="20" height="18" fill="none" stroke="#d8d8d8" stroke-width="1.5"/><path d="M8,1 V11 H14 V1" fill="none" stroke="#d8d8d8" stroke-width="1.6"/></svg>
<div style="position:absolute;left:2632.0px;top:1734.5px;width:12.0px;height:1.6px;background:#d8d8d8;"></div>
<div style="position:absolute;left:2653.0px;top:1734.5px;width:148.0px;height:1.4px;background:#bdbdbd;"></div>
<div style="position:absolute;left:2726.0px;top:1727.0px;width:9.0px;height:17.0px;background:#bdbdbd;border-radius:2px;"></div>
<div style="position:absolute;left:2808.0px;top:1734.5px;width:13.0px;height:1.6px;background:#d8d8d8;"></div>
<div style="position:absolute;left:2813.7px;top:1728.8px;width:1.6px;height:13.0px;background:#d8d8d8;"></div>
<div style="position:absolute;top:1727.0px;font-size:16.5px;line-height:16.5px;color:#e8e8e8;font-weight:normal;font-style:normal;white-space:nowrap;font-family:'Liberation Sans',sans-serif;letter-spacing:0.3px;right:23.0px;margin-right:-0.3px;">115%</div>
</body></html>
